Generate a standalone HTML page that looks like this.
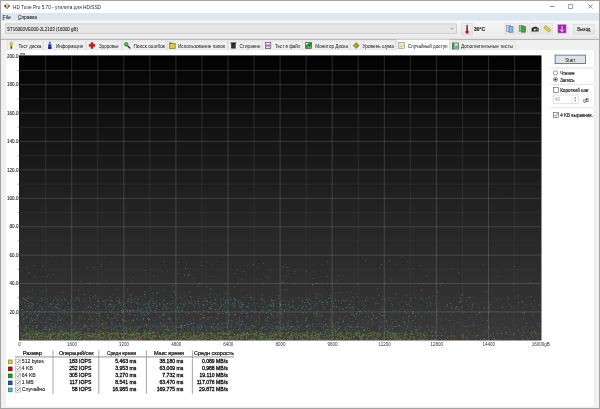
<!DOCTYPE html>
<html><head><meta charset="utf-8"><style>
html,body{margin:0;padding:0;background:#f0f0f0;}
svg{display:block;font-family:"Liberation Sans", sans-serif;will-change:transform;}
</style></head><body>
<svg width="600" height="409" viewBox="0 0 600 409">
<defs>
<linearGradient id="gchart" x1="0" y1="0" x2="0" y2="1">
<stop offset="0" stop-color="#020202"/><stop offset="0.15" stop-color="#0d0d0d"/><stop offset="0.4" stop-color="#1b1b1b"/><stop offset="0.56" stop-color="#242424"/><stop offset="0.91" stop-color="#353535"/><stop offset="1" stop-color="#3a3a3a"/></linearGradient>
<linearGradient id="gtool" x1="0" y1="0" x2="0" y2="1">
<stop offset="0" stop-color="#f7f7f7"/><stop offset="1" stop-color="#eaeaea"/></linearGradient>
<linearGradient id="gbtn" x1="0" y1="0" x2="0" y2="1">
<stop offset="0" stop-color="#efefef"/><stop offset="1" stop-color="#e4e4e4"/></linearGradient>
<linearGradient id="gminor" x1="0" y1="0" x2="0" y2="1"><stop offset="0" stop-color="#fff" stop-opacity="0.15"/><stop offset="0.3" stop-color="#fff" stop-opacity="0.085"/><stop offset="0.6" stop-color="#fff" stop-opacity="0.04"/><stop offset="1" stop-color="#fff" stop-opacity="0.015"/></linearGradient>
<linearGradient id="gmajor" x1="0" y1="0" x2="0" y2="1"><stop offset="0" stop-color="#fff" stop-opacity="0.15"/><stop offset="1" stop-color="#fff" stop-opacity="0.13"/></linearGradient>
</defs>
<rect x="0" y="0" width="600" height="409" fill="#f0f0f0" />
<rect x="0" y="0" width="600" height="13" fill="#ffffff" />
<rect x="0" y="13" width="600" height="7.7" fill="#dde7f2" />
<rect x="0" y="20.7" width="600" height="18.5" fill="url(#gtool)" />
<line x1="0" y1="39.4" x2="600" y2="39.4" stroke="#a9a9a9" stroke-width="0.9"/>
<rect x="0" y="40" width="600" height="10" fill="#f0f0f0" />
<rect x="0.5" y="0.5" width="599" height="408" fill="none" stroke="#a4a4a4" stroke-width="1" />
<path d="M7 3 L10 6 L7 9 L4 6Z" fill="#c8b898"/><path d="M6.6 3.6 L9.3 6.2 L7.2 8.3 L4.6 5.7Z" fill="#e0d0b0"/><path d="M4 6 L5.4 4.6 L6.2 6.6 L5.4 7.6Z" fill="#3a3028"/><path d="M10 6 L8.7 4.7 L8 6.6 L8.7 7.4Z" fill="#4a4038"/><path d="M7 9 L5.6 7.6 L7.3 7.5 L8.3 7.7Z" fill="#6a5a48"/>
<text x="13.00" y="8.70" font-size="5.6" textLength="88.00" lengthAdjust="spacingAndGlyphs" fill="#262626" font-weight="normal">HD Tune Pro 5.70 - утилита для HD/SSD</text>
<line x1="550" y1="6.4" x2="554.5" y2="6.4" stroke="#444" stroke-width="0.65"/>
<rect x="568.4" y="4.4" width="4.3" height="4.1" fill="none" stroke="#555" stroke-width="0.6" rx="0.5"/>
<line x1="588.4" y1="4.3" x2="592.4" y2="8.5" stroke="#444" stroke-width="0.6"/>
<line x1="592.4" y1="4.3" x2="588.4" y2="8.5" stroke="#444" stroke-width="0.6"/>
<text x="2.60" y="18.80" font-size="4.8" textLength="8.30" lengthAdjust="spacingAndGlyphs" fill="#1a1a1a" font-weight="normal" stroke="#1a1a1a" stroke-width="0.05">File</text>
<line x1="2.6" y1="19.6" x2="4.4" y2="19.6" stroke="#111" stroke-width="0.5"/>
<text x="18.00" y="18.80" font-size="4.8" textLength="19.00" lengthAdjust="spacingAndGlyphs" fill="#1a1a1a" font-weight="normal" stroke="#1a1a1a" stroke-width="0.05">Справка</text>
<line x1="18" y1="19.6" x2="20.6" y2="19.6" stroke="#111" stroke-width="0.5"/>
<rect x="5.4" y="23.9" width="451.2" height="9.4" fill="#e6e6e6" stroke="#c2c2c2" stroke-width="0.7" />
<text x="7.00" y="31.00" font-size="5.4" textLength="71.00" lengthAdjust="spacingAndGlyphs" fill="#1a1a1a" font-weight="normal" stroke="#1a1a1a" stroke-width="0.08">ST16000VE000-2L2103 (16000 gB)</text>
<polyline points="450.4,27.8 451.9,29.2 453.4,27.8" fill="none" stroke="#555" stroke-width="0.55"/>
<rect x="461.3" y="23.7" width="11" height="10.6" fill="url(#gbtn)" stroke="#d4d4d4" stroke-width="0.6" />
<rect x="466.4" y="24.8" width="1.4" height="5" rx="0.7" fill="#404040"/><path d="M466.3 28.6 h1.6 v1.9 a1.7 1.7 0 1 1 -1.6 0z" fill="#c01818"/>
<text x="474.00" y="31.00" font-size="5.3" textLength="11.00" lengthAdjust="spacingAndGlyphs" fill="#1a1a1a" font-weight="bold" stroke="#1a1a1a" stroke-width="0.14">30°C</text>
<rect x="504.3" y="23.7" width="10.7" height="10.2" fill="url(#gbtn)" stroke="#d8d8d8" stroke-width="0.5" />
<rect x="517" y="23.7" width="10.3" height="10.2" fill="url(#gbtn)" stroke="#d8d8d8" stroke-width="0.5" />
<rect x="529.3" y="23.7" width="11.4" height="10.2" fill="url(#gbtn)" stroke="#d8d8d8" stroke-width="0.5" />
<rect x="541.9" y="23.7" width="10.7" height="10.2" fill="url(#gbtn)" stroke="#d8d8d8" stroke-width="0.5" />
<rect x="506.6" y="25.6" width="4" height="5.6" fill="#b8d4ea" stroke="#4a6a98" stroke-width="0.45"/><rect x="509" y="26.6" width="4" height="5.6" fill="#8ab4dc" stroke="#3a5a88" stroke-width="0.45"/>
<rect x="519.2" y="25.6" width="4" height="5.6" fill="#90c890" stroke="#3a6a3a" stroke-width="0.45"/><rect x="521.6" y="26.6" width="4" height="5.6" fill="#40a040" stroke="#2a5a2a" stroke-width="0.45"/>
<path d="M531.6 27.8 h1.5 l0.8 -1 h2.6 l0.8 1 h1.3 v3.6 h-7z" fill="#2a2a2a"/><circle cx="534.8" cy="29.6" r="1.1" fill="#e8e8e8"/><rect x="536.6" y="28.4" width="1.6" height="2.4" fill="#40a040"/>
<g transform="translate(547.3,28.8) rotate(38)"><rect x="-3.6" y="-1.7" width="7.2" height="3.4" rx="1.2" fill="#d8d040" stroke="#8a8010" stroke-width="0.4"/></g>
<rect x="557.8" y="24.3" width="8.4" height="8.8" fill="#9c20a8" stroke="#d8a8e0" stroke-width="0.6" />
<path d="M562 25.8 V31.4 M559.9 29.4 L562 31.6 L564.1 29.4" fill="none" stroke="#fff" stroke-width="0.85"/>
<rect x="573.2" y="24.3" width="21.5" height="9.7" fill="url(#gbtn)" stroke="#d4d4d4" stroke-width="0.5" />
<text x="577.30" y="30.90" font-size="4.9" textLength="13.00" lengthAdjust="spacingAndGlyphs" fill="#1a1a1a" font-weight="normal" stroke="#1a1a1a" stroke-width="0.14">Выход</text>
<rect x="7.3" y="41" width="35.4" height="9" fill="#f0f0f0" stroke="#d9d9d9" stroke-width="0.6" />
<text x="18.40" y="47.60" font-size="5.1" textLength="22.90" lengthAdjust="spacingAndGlyphs" fill="#2a2a2a" font-weight="normal" stroke="#2a2a2a" stroke-width="0.03">Тест диска</text>
<rect x="43.3" y="41" width="42.4" height="9" fill="#f0f0f0" stroke="#d9d9d9" stroke-width="0.6" />
<text x="56.00" y="47.60" font-size="5.1" textLength="27.00" lengthAdjust="spacingAndGlyphs" fill="#2a2a2a" font-weight="normal" stroke="#2a2a2a" stroke-width="0.03">Информация</text>
<rect x="86.3" y="41" width="35.4" height="9" fill="#f0f0f0" stroke="#d9d9d9" stroke-width="0.6" />
<text x="99.00" y="47.60" font-size="5.1" textLength="19.80" lengthAdjust="spacingAndGlyphs" fill="#2a2a2a" font-weight="normal" stroke="#2a2a2a" stroke-width="0.03">Здоровье</text>
<rect x="122.3" y="41" width="44.4" height="9" fill="#f0f0f0" stroke="#d9d9d9" stroke-width="0.6" />
<text x="133.40" y="47.60" font-size="5.1" textLength="31.60" lengthAdjust="spacingAndGlyphs" fill="#2a2a2a" font-weight="normal" stroke="#2a2a2a" stroke-width="0.03">Поиск ошибок</text>
<rect x="167.3" y="41" width="60.4" height="9" fill="#f0f0f0" stroke="#d9d9d9" stroke-width="0.6" />
<text x="178.00" y="47.60" font-size="5.1" textLength="47.00" lengthAdjust="spacingAndGlyphs" fill="#2a2a2a" font-weight="normal" stroke="#2a2a2a" stroke-width="0.03">Использование папок</text>
<rect x="228.3" y="41" width="33.9" height="9" fill="#f0f0f0" stroke="#d9d9d9" stroke-width="0.6" />
<text x="239.50" y="47.60" font-size="5.1" textLength="21.00" lengthAdjust="spacingAndGlyphs" fill="#2a2a2a" font-weight="normal" stroke="#2a2a2a" stroke-width="0.03">Стирание</text>
<rect x="262.8" y="41" width="39.4" height="9" fill="#f0f0f0" stroke="#d9d9d9" stroke-width="0.6" />
<text x="275.00" y="47.60" font-size="5.1" textLength="25.50" lengthAdjust="spacingAndGlyphs" fill="#2a2a2a" font-weight="normal" stroke="#2a2a2a" stroke-width="0.03">Тест в файл</text>
<rect x="302.8" y="41" width="46.9" height="9" fill="#f0f0f0" stroke="#d9d9d9" stroke-width="0.6" />
<text x="315.30" y="47.60" font-size="5.1" textLength="32.70" lengthAdjust="spacingAndGlyphs" fill="#2a2a2a" font-weight="normal" stroke="#2a2a2a" stroke-width="0.03">Монитор Диска</text>
<rect x="350.3" y="41" width="45.4" height="9" fill="#f0f0f0" stroke="#d9d9d9" stroke-width="0.6" />
<text x="362.50" y="47.60" font-size="5.1" textLength="31.50" lengthAdjust="spacingAndGlyphs" fill="#2a2a2a" font-weight="normal" stroke="#2a2a2a" stroke-width="0.03">Уровень шума</text>
<rect x="396.8" y="39.6" width="52.89999999999998" height="11" fill="#ffffff" stroke="#d0d0d0" stroke-width="0.6" />
<text x="407.80" y="47.60" font-size="5.1" textLength="39.60" lengthAdjust="spacingAndGlyphs" fill="#2a2a2a" font-weight="normal" stroke="#2a2a2a" stroke-width="0.03">Случайный доступ</text>
<rect x="450.3" y="41" width="64.9" height="9" fill="#f0f0f0" stroke="#d9d9d9" stroke-width="0.6" />
<text x="461.00" y="47.60" font-size="5.1" textLength="52.00" lengthAdjust="spacingAndGlyphs" fill="#2a2a2a" font-weight="normal" stroke="#2a2a2a" stroke-width="0.03">Дополнительные тесты</text>
<ellipse cx="11.3" cy="44.2" rx="1.35" ry="2.1" fill="#d8d028" stroke="#7a7010" stroke-width="0.3"/><rect x="10.5" y="46.2" width="1.6" height="2.5" fill="#4a4a30"/><circle cx="49.8" cy="42.8" r="1.05" fill="#3858c0"/><path d="M48.2 44.2 h3.2 v4.7 h-3.2z" fill="#2440a8"/><rect x="48.2" y="46.8" width="3.2" height="2.1" fill="#182a78"/><path d="M90.9 42.5 h2.2 v1.8 h1.9 v2.2 h-1.9 v1.9 h-2.2 v-1.9 h-1.9 v-2.2 h1.9z" fill="#d01818" stroke="#801010" stroke-width="0.3"/><path d="M127.4 45.6 L129.9 48" stroke="#14146a" stroke-width="1.3" stroke-linecap="round"/><circle cx="126.2" cy="44.3" r="1.9" fill="#48c048" stroke="#1a5a1a" stroke-width="0.5"/><path d="M169.3 42.6 h2.2 l0.5 0.6 h3.5 v5.6 h-6.2z" fill="#6a5a20"/><rect x="169.9" y="43.8" width="5" height="4.4" fill="#e0c838"/><path d="M230.6 42.4 h5.6 v1 h-0.6 v5.1 h-4.4 v-5.1 h-0.6z" fill="#1a1a1a"/><path d="M232.2 44 v4 M233.4 44 v4 M234.6 44 v4" stroke="#707070" stroke-width="0.3"/><rect x="265.3" y="42.6" width="5.5" height="5.8" fill="#f0e8f4" stroke="#6a1a80" stroke-width="0.6"/><path d="M266.9 44 v3.2 M269.2 44 v3.2 M266.9 45.6 h2.3" stroke="#8a2aa8" stroke-width="0.7"/><rect x="305.5" y="42.6" width="6.1" height="5.8" fill="#208a30" stroke="#204020" stroke-width="0.5"/><path d="M305.8 42.9 h3 l-3 2.5z" fill="#e8f0e8"/><path d="M306 48 l2 -2.2 l1.5 1 l2 -1.6 v2.8z" fill="#40c040"/><path d="M353.2 45.5 l3 -3 l3 3 l-3 3z" fill="#a89020" stroke="#4a4010" stroke-width="0.4"/><path d="M355 45.5 l1.2 -1.3 v2.6z" fill="#f0e060"/><rect x="398.7" y="42.4" width="5.8" height="6" fill="#f0e8b8" stroke="#7a7460" stroke-width="0.5"/><path d="M399.6 47.6 l1.4 -1.6 l1 0.8 l1.5 -2.2" fill="none" stroke="#a09040" stroke-width="0.35"/><rect x="452.4" y="43" width="6" height="6" fill="#e8e8e8" stroke="#1a5a2a" stroke-width="0.7"/><rect x="452.5" y="43.1" width="2" height="5.8" fill="#2a9a3a"/><rect x="455.2" y="45.5" width="2.6" height="2.8" fill="#a08a9a"/>
<rect x="6" y="50" width="588" height="356.5" fill="#ffffff" />
<line x1="594.3" y1="50" x2="594.3" y2="406.5" stroke="#e2e2e2" stroke-width="0.6"/>
<rect x="19" y="55.4" width="522.5" height="285.1" fill="url(#gchart)" />
<rect x="45.15" y="56.3" width="1" height="284.0" fill="url(#gminor)" />
<rect x="71.20" y="56.3" width="1" height="284.0" fill="url(#gmajor)" />
<rect x="97.25" y="56.3" width="1" height="284.0" fill="url(#gminor)" />
<rect x="123.30" y="56.3" width="1" height="284.0" fill="url(#gmajor)" />
<rect x="149.35" y="56.3" width="1" height="284.0" fill="url(#gminor)" />
<rect x="175.40" y="56.3" width="1" height="284.0" fill="url(#gmajor)" />
<rect x="201.45" y="56.3" width="1" height="284.0" fill="url(#gminor)" />
<rect x="227.50" y="56.3" width="1" height="284.0" fill="url(#gmajor)" />
<rect x="253.55" y="56.3" width="1" height="284.0" fill="url(#gminor)" />
<rect x="279.60" y="56.3" width="1" height="284.0" fill="url(#gmajor)" />
<rect x="305.65" y="56.3" width="1" height="284.0" fill="url(#gminor)" />
<rect x="331.70" y="56.3" width="1" height="284.0" fill="url(#gmajor)" />
<rect x="357.75" y="56.3" width="1" height="284.0" fill="url(#gminor)" />
<rect x="383.80" y="56.3" width="1" height="284.0" fill="url(#gmajor)" />
<rect x="409.85" y="56.3" width="1" height="284.0" fill="url(#gminor)" />
<rect x="435.90" y="56.3" width="1" height="284.0" fill="url(#gmajor)" />
<rect x="461.95" y="56.3" width="1" height="284.0" fill="url(#gminor)" />
<rect x="488.00" y="56.3" width="1" height="284.0" fill="url(#gmajor)" />
<rect x="514.05" y="56.3" width="1" height="284.0" fill="url(#gminor)" />
<rect x="19.6" y="70.00" width="521.0" height="1" fill="#fff" fill-opacity="0.135"/>
<rect x="19.6" y="84.20" width="521.0" height="1" fill="#fff" fill-opacity="0.149"/>
<rect x="19.6" y="98.40" width="521.0" height="1" fill="#fff" fill-opacity="0.108"/>
<rect x="19.6" y="112.60" width="521.0" height="1" fill="#fff" fill-opacity="0.148"/>
<rect x="19.6" y="126.80" width="521.0" height="1" fill="#fff" fill-opacity="0.085"/>
<rect x="19.6" y="141.00" width="521.0" height="1" fill="#fff" fill-opacity="0.147"/>
<rect x="19.6" y="155.20" width="521.0" height="1" fill="#fff" fill-opacity="0.065"/>
<rect x="19.6" y="169.40" width="521.0" height="1" fill="#fff" fill-opacity="0.146"/>
<rect x="19.6" y="183.60" width="521.0" height="1" fill="#fff" fill-opacity="0.049"/>
<rect x="19.6" y="197.80" width="521.0" height="1" fill="#fff" fill-opacity="0.145"/>
<rect x="19.6" y="212.00" width="521.0" height="1" fill="#fff" fill-opacity="0.037"/>
<rect x="19.6" y="226.20" width="521.0" height="1" fill="#fff" fill-opacity="0.144"/>
<rect x="19.6" y="240.40" width="521.0" height="1" fill="#fff" fill-opacity="0.027"/>
<rect x="19.6" y="254.60" width="521.0" height="1" fill="#fff" fill-opacity="0.143"/>
<rect x="19.6" y="268.80" width="521.0" height="1" fill="#fff" fill-opacity="0.021"/>
<rect x="19.6" y="283.00" width="521.0" height="1" fill="#fff" fill-opacity="0.142"/>
<rect x="19.6" y="297.20" width="521.0" height="1" fill="#fff" fill-opacity="0.017"/>
<rect x="19.6" y="311.40" width="521.0" height="1" fill="#fff" fill-opacity="0.141"/>
<rect x="19.6" y="325.60" width="521.0" height="1" fill="#fff" fill-opacity="0.015"/>
<path d="M175.4 294.5h0.8v0.8h-0.8zM314.4 304.4h0.8v0.8h-0.8zM110.8 311.8h0.8v0.8h-0.8zM518.3 302.1h0.8v0.8h-0.8zM282.1 282.1h0.8v0.8h-0.8zM32.3 303.2h0.8v0.8h-0.8zM407.3 261.2h0.8v0.8h-0.8zM420.9 265.2h0.8v0.8h-0.8zM235.7 300.3h0.8v0.8h-0.8zM292.4 305.5h0.8v0.8h-0.8zM439.8 309.2h0.8v0.8h-0.8zM116.7 289.3h0.8v0.8h-0.8zM105.5 303.5h0.8v0.8h-0.8zM98.2 305.5h0.8v0.8h-0.8zM45.7 302.3h0.8v0.8h-0.8zM211.3 300.9h0.8v0.8h-0.8zM345.7 307.1h0.8v0.8h-0.8zM238.9 304.9h0.8v0.8h-0.8zM309.5 304.1h0.8v0.8h-0.8zM523.1 313.8h0.8v0.8h-0.8zM290.3 306.8h0.8v0.8h-0.8zM278.1 298.3h0.8v0.8h-0.8zM282.8 304.3h0.8v0.8h-0.8zM146.6 307.5h0.8v0.8h-0.8zM112.7 307.9h0.8v0.8h-0.8zM149.5 300.1h0.8v0.8h-0.8zM259.6 306.1h0.8v0.8h-0.8zM125.1 303.2h0.8v0.8h-0.8zM172.1 285.1h0.8v0.8h-0.8zM155.3 310.0h0.8v0.8h-0.8zM288.8 314.0h0.8v0.8h-0.8zM388.6 300.1h0.8v0.8h-0.8zM376.8 302.8h0.8v0.8h-0.8zM269.9 305.9h0.8v0.8h-0.8zM199.5 295.9h0.8v0.8h-0.8zM36.0 314.4h0.8v0.8h-0.8zM226.5 314.5h0.8v0.8h-0.8zM460.2 297.7h0.8v0.8h-0.8zM427.9 310.4h0.8v0.8h-0.8zM140.9 296.0h0.8v0.8h-0.8zM79.2 300.0h0.8v0.8h-0.8zM41.3 307.8h0.8v0.8h-0.8zM127.4 300.9h0.8v0.8h-0.8zM465.4 300.5h0.8v0.8h-0.8zM305.8 305.8h0.8v0.8h-0.8zM98.9 314.9h0.8v0.8h-0.8zM426.6 306.6h0.8v0.8h-0.8zM29.0 296.8h0.8v0.8h-0.8zM183.0 303.8h0.8v0.8h-0.8zM77.2 306.9h0.8v0.8h-0.8zM110.6 305.9h0.8v0.8h-0.8zM279.7 304.6h0.8v0.8h-0.8zM135.6 302.6h0.8v0.8h-0.8zM352.8 308.7h0.8v0.8h-0.8zM461.7 307.3h0.8v0.8h-0.8zM311.6 303.0h0.8v0.8h-0.8zM142.7 314.6h0.8v0.8h-0.8zM364.9 311.1h0.8v0.8h-0.8zM76.5 298.8h0.8v0.8h-0.8zM211.4 263.7h0.8v0.8h-0.8zM149.7 307.5h0.8v0.8h-0.8zM109.1 303.8h0.8v0.8h-0.8zM316.7 283.1h0.8v0.8h-0.8zM394.8 309.8h0.8v0.8h-0.8zM380.9 264.1h0.8v0.8h-0.8zM34.7 310.1h0.8v0.8h-0.8zM68.1 309.1h0.8v0.8h-0.8zM311.1 306.7h0.8v0.8h-0.8zM190.9 302.7h0.8v0.8h-0.8zM179.5 314.8h0.8v0.8h-0.8zM228.9 311.8h0.8v0.8h-0.8zM299.4 299.8h0.8v0.8h-0.8zM496.9 271.4h0.8v0.8h-0.8zM451.7 307.8h0.8v0.8h-0.8zM234.7 313.9h0.8v0.8h-0.8zM404.6 311.4h0.8v0.8h-0.8zM410.7 299.9h0.8v0.8h-0.8zM182.3 300.5h0.8v0.8h-0.8zM40.5 297.9h0.8v0.8h-0.8zM224.0 310.2h0.8v0.8h-0.8zM214.6 303.7h0.8v0.8h-0.8zM88.9 296.9h0.8v0.8h-0.8zM412.7 311.1h0.8v0.8h-0.8zM284.4 289.0h0.8v0.8h-0.8zM186.3 314.8h0.8v0.8h-0.8zM44.2 311.7h0.8v0.8h-0.8zM85.2 304.8h0.8v0.8h-0.8zM20.7 315.0h0.8v0.8h-0.8zM181.6 309.6h0.8v0.8h-0.8zM83.1 311.5h0.8v0.8h-0.8zM280.3 304.9h0.8v0.8h-0.8zM159.5 302.5h0.8v0.8h-0.8zM432.4 295.6h0.8v0.8h-0.8zM92.6 267.4h0.8v0.8h-0.8zM288.8 306.2h0.8v0.8h-0.8zM31.8 305.7h0.8v0.8h-0.8zM130.3 300.4h0.8v0.8h-0.8zM56.9 307.2h0.8v0.8h-0.8zM88.7 312.0h0.8v0.8h-0.8zM487.8 307.4h0.8v0.8h-0.8zM507.3 312.3h0.8v0.8h-0.8zM289.2 307.7h0.8v0.8h-0.8zM108.4 304.3h0.8v0.8h-0.8zM253.7 302.6h0.8v0.8h-0.8zM351.4 300.5h0.8v0.8h-0.8zM365.2 300.0h0.8v0.8h-0.8zM214.3 308.9h0.8v0.8h-0.8zM339.2 307.5h0.8v0.8h-0.8zM325.8 300.0h0.8v0.8h-0.8zM60.2 301.2h0.8v0.8h-0.8zM128.6 301.2h0.8v0.8h-0.8zM450.6 314.6h0.8v0.8h-0.8zM156.0 293.3h0.8v0.8h-0.8zM457.7 309.2h0.8v0.8h-0.8zM33.1 303.8h0.8v0.8h-0.8zM250.8 297.1h0.8v0.8h-0.8zM264.3 302.3h0.8v0.8h-0.8zM292.3 300.9h0.8v0.8h-0.8zM205.8 299.8h0.8v0.8h-0.8zM27.3 298.3h0.8v0.8h-0.8zM336.5 279.7h0.8v0.8h-0.8zM188.3 300.5h0.8v0.8h-0.8zM144.9 301.6h0.8v0.8h-0.8zM487.7 301.1h0.8v0.8h-0.8zM26.8 301.3h0.8v0.8h-0.8zM161.9 307.9h0.8v0.8h-0.8zM26.1 300.2h0.8v0.8h-0.8zM246.0 313.1h0.8v0.8h-0.8zM106.1 307.4h0.8v0.8h-0.8zM34.4 276.4h0.8v0.8h-0.8zM304.4 302.1h0.8v0.8h-0.8zM61.6 310.2h0.8v0.8h-0.8zM66.4 306.0h0.8v0.8h-0.8zM427.3 312.5h0.8v0.8h-0.8zM380.1 267.9h0.8v0.8h-0.8zM318.8 301.1h0.8v0.8h-0.8zM146.1 310.0h0.8v0.8h-0.8zM70.6 299.3h0.8v0.8h-0.8zM375.1 317.7h0.8v0.8h-0.8zM366.5 296.9h0.8v0.8h-0.8zM346.5 306.8h0.8v0.8h-0.8zM356.4 312.9h0.8v0.8h-0.8zM197.6 285.6h0.8v0.8h-0.8zM21.3 321.3h0.8v0.8h-0.8zM90.7 303.8h0.8v0.8h-0.8zM187.6 274.6h0.8v0.8h-0.8zM83.9 294.1h0.8v0.8h-0.8zM192.8 319.3h0.8v0.8h-0.8zM220.6 298.9h0.8v0.8h-0.8zM309.3 299.1h0.8v0.8h-0.8zM163.1 260.9h0.8v0.8h-0.8zM283.3 299.7h0.8v0.8h-0.8zM273.4 305.1h0.8v0.8h-0.8zM33.7 265.3h0.8v0.8h-0.8zM146.4 309.6h0.8v0.8h-0.8zM36.8 302.9h0.8v0.8h-0.8zM312.7 278.2h0.8v0.8h-0.8zM188.9 323.9h0.8v0.8h-0.8zM381.6 308.7h0.8v0.8h-0.8zM511.2 306.4h0.8v0.8h-0.8zM105.6 280.0h0.8v0.8h-0.8zM206.5 261.4h0.8v0.8h-0.8zM243.6 271.0h0.8v0.8h-0.8zM353.3 298.2h0.8v0.8h-0.8zM163.1 306.8h0.8v0.8h-0.8zM153.0 305.2h0.8v0.8h-0.8zM24.8 302.4h0.8v0.8h-0.8zM67.8 303.2h0.8v0.8h-0.8zM206.6 300.6h0.8v0.8h-0.8zM315.0 293.2h0.8v0.8h-0.8zM105.1 300.5h0.8v0.8h-0.8zM284.2 310.7h0.8v0.8h-0.8zM332.6 306.1h0.8v0.8h-0.8zM371.4 313.3h0.8v0.8h-0.8zM123.2 309.8h0.8v0.8h-0.8zM159.1 303.8h0.8v0.8h-0.8zM412.6 313.1h0.8v0.8h-0.8zM56.9 300.8h0.8v0.8h-0.8zM73.4 308.8h0.8v0.8h-0.8zM320.9 302.3h0.8v0.8h-0.8zM22.0 309.3h0.8v0.8h-0.8zM469.5 297.4h0.8v0.8h-0.8zM24.1 299.1h0.8v0.8h-0.8zM401.4 301.2h0.8v0.8h-0.8zM144.2 294.1h0.8v0.8h-0.8zM281.1 309.5h0.8v0.8h-0.8zM459.6 301.6h0.8v0.8h-0.8zM407.9 302.8h0.8v0.8h-0.8zM21.0 303.5h0.8v0.8h-0.8zM360.5 311.0h0.8v0.8h-0.8zM219.1 312.7h0.8v0.8h-0.8zM446.7 305.6h0.8v0.8h-0.8zM250.9 298.7h0.8v0.8h-0.8zM152.2 298.5h0.8v0.8h-0.8zM530.2 281.9h0.8v0.8h-0.8zM462.5 312.9h0.8v0.8h-0.8zM156.0 305.5h0.8v0.8h-0.8zM430.0 302.1h0.8v0.8h-0.8zM194.2 307.1h0.8v0.8h-0.8zM102.8 300.9h0.8v0.8h-0.8zM350.1 307.8h0.8v0.8h-0.8zM289.4 301.8h0.8v0.8h-0.8zM103.3 300.6h0.8v0.8h-0.8zM174.7 309.8h0.8v0.8h-0.8zM58.8 319.5h0.8v0.8h-0.8zM86.7 267.4h0.8v0.8h-0.8zM287.7 270.0h0.8v0.8h-0.8zM188.1 275.2h0.8v0.8h-0.8zM385.1 299.4h0.8v0.8h-0.8zM87.1 307.3h0.8v0.8h-0.8zM230.8 299.2h0.8v0.8h-0.8zM512.8 307.8h0.8v0.8h-0.8zM247.5 312.6h0.8v0.8h-0.8zM353.0 304.4h0.8v0.8h-0.8zM455.8 306.7h0.8v0.8h-0.8zM303.1 305.9h0.8v0.8h-0.8zM55.3 297.4h0.8v0.8h-0.8zM280.2 302.4h0.8v0.8h-0.8zM52.7 314.7h0.8v0.8h-0.8zM157.3 292.1h0.8v0.8h-0.8zM359.4 301.4h0.8v0.8h-0.8zM168.8 318.1h0.8v0.8h-0.8zM95.4 298.0h0.8v0.8h-0.8zM411.2 306.1h0.8v0.8h-0.8zM31.9 289.4h0.8v0.8h-0.8zM163.0 300.1h0.8v0.8h-0.8zM279.7 305.5h0.8v0.8h-0.8zM109.9 300.2h0.8v0.8h-0.8zM452.0 268.4h0.8v0.8h-0.8zM400.9 308.4h0.8v0.8h-0.8zM338.3 275.4h0.8v0.8h-0.8zM26.6 311.3h0.8v0.8h-0.8zM118.9 298.5h0.8v0.8h-0.8zM362.1 301.4h0.8v0.8h-0.8zM129.8 310.6h0.8v0.8h-0.8zM237.1 269.5h0.8v0.8h-0.8zM49.5 314.2h0.8v0.8h-0.8zM116.7 300.2h0.8v0.8h-0.8zM472.2 304.6h0.8v0.8h-0.8zM406.2 295.5h0.8v0.8h-0.8zM286.5 267.1h0.8v0.8h-0.8zM224.7 307.2h0.8v0.8h-0.8zM276.4 302.7h0.8v0.8h-0.8zM62.7 291.9h0.8v0.8h-0.8zM96.6 284.3h0.8v0.8h-0.8zM311.5 309.2h0.8v0.8h-0.8zM302.5 312.1h0.8v0.8h-0.8zM76.2 297.9h0.8v0.8h-0.8zM357.7 309.0h0.8v0.8h-0.8zM220.0 302.7h0.8v0.8h-0.8zM177.9 262.2h0.8v0.8h-0.8zM144.4 311.3h0.8v0.8h-0.8zM236.7 318.4h0.8v0.8h-0.8zM239.1 318.5h0.8v0.8h-0.8zM140.5 313.3h0.8v0.8h-0.8zM239.2 317.2h0.8v0.8h-0.8zM55.5 261.2h0.8v0.8h-0.8zM206.4 286.4h0.8v0.8h-0.8zM180.9 310.0h0.8v0.8h-0.8zM186.3 260.5h0.8v0.8h-0.8zM120.4 302.5h0.8v0.8h-0.8zM42.6 317.3h0.8v0.8h-0.8zM166.6 307.6h0.8v0.8h-0.8zM282.6 281.4h0.8v0.8h-0.8zM152.0 302.7h0.8v0.8h-0.8zM313.5 270.8h0.8v0.8h-0.8zM431.5 312.7h0.8v0.8h-0.8zM92.6 296.2h0.8v0.8h-0.8zM436.6 290.5h0.8v0.8h-0.8zM166.3 308.6h0.8v0.8h-0.8zM211.5 306.1h0.8v0.8h-0.8zM287.9 310.3h0.8v0.8h-0.8zM191.8 302.8h0.8v0.8h-0.8zM392.8 309.6h0.8v0.8h-0.8zM279.9 303.7h0.8v0.8h-0.8zM253.9 305.5h0.8v0.8h-0.8zM223.3 304.4h0.8v0.8h-0.8zM293.8 283.8h0.8v0.8h-0.8zM207.6 311.4h0.8v0.8h-0.8zM167.4 303.1h0.8v0.8h-0.8zM148.6 306.0h0.8v0.8h-0.8zM56.9 299.0h0.8v0.8h-0.8zM181.6 306.7h0.8v0.8h-0.8zM156.0 300.3h0.8v0.8h-0.8zM63.8 298.7h0.8v0.8h-0.8zM193.4 277.7h0.8v0.8h-0.8zM58.6 304.5h0.8v0.8h-0.8zM349.0 306.9h0.8v0.8h-0.8zM170.0 302.7h0.8v0.8h-0.8zM270.5 310.2h0.8v0.8h-0.8zM97.3 301.3h0.8v0.8h-0.8zM78.4 289.6h0.8v0.8h-0.8zM80.5 280.9h0.8v0.8h-0.8zM241.4 311.4h0.8v0.8h-0.8zM318.7 323.0h0.8v0.8h-0.8zM489.7 304.0h0.8v0.8h-0.8zM29.6 307.6h0.8v0.8h-0.8zM177.3 306.7h0.8v0.8h-0.8zM39.2 305.7h0.8v0.8h-0.8zM89.4 305.6h0.8v0.8h-0.8zM145.0 307.1h0.8v0.8h-0.8zM301.8 306.5h0.8v0.8h-0.8zM184.9 303.6h0.8v0.8h-0.8zM113.8 312.9h0.8v0.8h-0.8zM262.3 309.5h0.8v0.8h-0.8zM159.4 317.1h0.8v0.8h-0.8zM162.6 302.4h0.8v0.8h-0.8zM233.9 286.6h0.8v0.8h-0.8zM316.9 310.3h0.8v0.8h-0.8zM130.5 295.6h0.8v0.8h-0.8zM163.3 304.5h0.8v0.8h-0.8zM272.4 300.2h0.8v0.8h-0.8zM305.9 270.8h0.8v0.8h-0.8zM121.7 302.7h0.8v0.8h-0.8zM70.5 308.8h0.8v0.8h-0.8zM302.5 301.1h0.8v0.8h-0.8zM381.6 306.4h0.8v0.8h-0.8zM44.4 299.5h0.8v0.8h-0.8zM361.4 312.9h0.8v0.8h-0.8zM356.4 293.2h0.8v0.8h-0.8zM405.1 301.6h0.8v0.8h-0.8zM471.2 309.0h0.8v0.8h-0.8zM458.9 309.7h0.8v0.8h-0.8zM273.2 308.6h0.8v0.8h-0.8zM84.4 308.2h0.8v0.8h-0.8zM326.5 304.3h0.8v0.8h-0.8zM323.7 307.6h0.8v0.8h-0.8zM189.2 291.8h0.8v0.8h-0.8zM52.7 307.7h0.8v0.8h-0.8zM459.9 298.3h0.8v0.8h-0.8zM58.2 309.3h0.8v0.8h-0.8zM315.5 297.4h0.8v0.8h-0.8zM30.5 306.1h0.8v0.8h-0.8zM227.9 300.8h0.8v0.8h-0.8zM176.5 297.8h0.8v0.8h-0.8zM138.3 299.2h0.8v0.8h-0.8zM426.5 275.5h0.8v0.8h-0.8zM313.4 307.5h0.8v0.8h-0.8zM293.3 300.9h0.8v0.8h-0.8zM183.5 317.3h0.8v0.8h-0.8zM378.5 294.9h0.8v0.8h-0.8zM301.1 307.8h0.8v0.8h-0.8zM178.1 310.7h0.8v0.8h-0.8zM418.2 312.9h0.8v0.8h-0.8zM164.2 299.4h0.8v0.8h-0.8zM308.6 308.9h0.8v0.8h-0.8zM261.9 294.6h0.8v0.8h-0.8zM203.0 304.9h0.8v0.8h-0.8zM37.7 300.4h0.8v0.8h-0.8zM426.4 303.2h0.8v0.8h-0.8zM147.0 303.5h0.8v0.8h-0.8zM248.2 306.6h0.8v0.8h-0.8zM499.3 276.0h0.8v0.8h-0.8zM267.5 309.4h0.8v0.8h-0.8zM120.2 315.2h0.8v0.8h-0.8zM277.6 295.2h0.8v0.8h-0.8zM152.3 294.5h0.8v0.8h-0.8zM190.8 296.5h0.8v0.8h-0.8zM172.5 303.2h0.8v0.8h-0.8zM407.9 268.2h0.8v0.8h-0.8zM393.5 298.3h0.8v0.8h-0.8zM295.4 308.0h0.8v0.8h-0.8zM271.5 303.7h0.8v0.8h-0.8zM210.3 288.6h0.8v0.8h-0.8zM392.1 304.5h0.8v0.8h-0.8zM282.3 313.7h0.8v0.8h-0.8zM532.5 309.2h0.8v0.8h-0.8zM362.5 308.7h0.8v0.8h-0.8zM428.8 295.8h0.8v0.8h-0.8zM364.8 299.3h0.8v0.8h-0.8zM149.2 301.4h0.8v0.8h-0.8zM352.5 296.0h0.8v0.8h-0.8zM192.8 305.2h0.8v0.8h-0.8zM225.8 300.1h0.8v0.8h-0.8zM256.6 303.0h0.8v0.8h-0.8zM255.8 279.0h0.8v0.8h-0.8zM282.4 317.2h0.8v0.8h-0.8zM261.3 298.5h0.8v0.8h-0.8zM317.5 306.3h0.8v0.8h-0.8zM121.7 309.4h0.8v0.8h-0.8zM238.8 311.0h0.8v0.8h-0.8zM264.6 307.8h0.8v0.8h-0.8zM132.8 310.0h0.8v0.8h-0.8zM138.5 309.6h0.8v0.8h-0.8zM130.7 310.3h0.8v0.8h-0.8zM312.0 284.7h0.8v0.8h-0.8zM533.8 306.4h0.8v0.8h-0.8zM131.2 302.1h0.8v0.8h-0.8zM144.6 315.2h0.8v0.8h-0.8zM276.7 314.4h0.8v0.8h-0.8zM265.9 275.7h0.8v0.8h-0.8zM364.0 307.2h0.8v0.8h-0.8zM214.4 299.0h0.8v0.8h-0.8zM530.7 295.8h0.8v0.8h-0.8zM483.2 264.0h0.8v0.8h-0.8zM122.8 313.3h0.8v0.8h-0.8zM234.1 298.0h0.8v0.8h-0.8zM24.4 302.5h0.8v0.8h-0.8zM148.2 312.3h0.8v0.8h-0.8zM377.3 303.0h0.8v0.8h-0.8zM46.9 298.6h0.8v0.8h-0.8zM172.0 300.8h0.8v0.8h-0.8zM179.8 297.7h0.8v0.8h-0.8zM52.9 312.0h0.8v0.8h-0.8zM47.8 305.7h0.8v0.8h-0.8zM41.9 297.8h0.8v0.8h-0.8zM36.0 314.6h0.8v0.8h-0.8zM335.8 306.1h0.8v0.8h-0.8zM365.2 304.9h0.8v0.8h-0.8zM209.2 293.7h0.8v0.8h-0.8zM479.3 313.3h0.8v0.8h-0.8zM356.8 283.7h0.8v0.8h-0.8zM55.6 306.7h0.8v0.8h-0.8zM138.3 307.6h0.8v0.8h-0.8zM234.2 299.5h0.8v0.8h-0.8zM111.4 304.8h0.8v0.8h-0.8zM395.6 264.4h0.8v0.8h-0.8zM379.1 313.1h0.8v0.8h-0.8zM34.2 312.8h0.8v0.8h-0.8zM22.6 298.5h0.8v0.8h-0.8zM147.8 314.2h0.8v0.8h-0.8zM52.6 303.1h0.8v0.8h-0.8zM234.0 303.5h0.8v0.8h-0.8zM516.8 306.5h0.8v0.8h-0.8zM168.7 313.3h0.8v0.8h-0.8zM485.6 291.3h0.8v0.8h-0.8zM136.6 302.4h0.8v0.8h-0.8zM176.9 307.1h0.8v0.8h-0.8zM362.4 304.7h0.8v0.8h-0.8zM71.1 295.7h0.8v0.8h-0.8zM473.7 303.6h0.8v0.8h-0.8zM340.1 292.2h0.8v0.8h-0.8zM85.5 301.6h0.8v0.8h-0.8zM51.5 304.3h0.8v0.8h-0.8zM263.1 306.9h0.8v0.8h-0.8zM302.4 307.9h0.8v0.8h-0.8zM284.8 304.0h0.8v0.8h-0.8zM55.1 305.5h0.8v0.8h-0.8zM458.0 272.6h0.8v0.8h-0.8zM63.4 309.9h0.8v0.8h-0.8zM233.5 305.3h0.8v0.8h-0.8zM467.7 296.9h0.8v0.8h-0.8zM490.1 310.5h0.8v0.8h-0.8zM487.9 312.5h0.8v0.8h-0.8zM37.7 308.2h0.8v0.8h-0.8zM166.6 303.5h0.8v0.8h-0.8zM329.8 295.3h0.8v0.8h-0.8zM171.6 297.1h0.8v0.8h-0.8zM420.6 297.9h0.8v0.8h-0.8zM308.6 308.3h0.8v0.8h-0.8zM279.3 309.9h0.8v0.8h-0.8zM90.2 301.2h0.8v0.8h-0.8zM286.4 305.8h0.8v0.8h-0.8zM253.3 264.4h0.8v0.8h-0.8zM305.8 307.0h0.8v0.8h-0.8zM113.8 305.9h0.8v0.8h-0.8zM388.7 260.6h0.8v0.8h-0.8zM331.0 301.1h0.8v0.8h-0.8zM502.0 307.1h0.8v0.8h-0.8zM294.4 271.2h0.8v0.8h-0.8zM42.5 265.6h0.8v0.8h-0.8zM222.5 313.0h0.8v0.8h-0.8zM126.9 300.9h0.8v0.8h-0.8zM180.7 307.4h0.8v0.8h-0.8zM280.3 314.7h0.8v0.8h-0.8zM197.9 302.9h0.8v0.8h-0.8zM365.0 260.7h0.8v0.8h-0.8zM210.4 293.2h0.8v0.8h-0.8zM155.7 308.1h0.8v0.8h-0.8zM329.9 297.4h0.8v0.8h-0.8zM219.6 307.1h0.8v0.8h-0.8zM149.8 309.7h0.8v0.8h-0.8zM440.0 285.0h0.8v0.8h-0.8zM261.5 310.5h0.8v0.8h-0.8zM479.4 312.1h0.8v0.8h-0.8zM357.8 307.8h0.8v0.8h-0.8zM268.7 309.6h0.8v0.8h-0.8zM437.5 309.8h0.8v0.8h-0.8zM333.4 302.9h0.8v0.8h-0.8zM136.5 318.1h0.8v0.8h-0.8zM522.3 311.9h0.8v0.8h-0.8zM502.6 305.8h0.8v0.8h-0.8zM230.0 299.2h0.8v0.8h-0.8zM456.4 306.1h0.8v0.8h-0.8zM108.7 309.4h0.8v0.8h-0.8zM224.3 305.8h0.8v0.8h-0.8zM419.2 308.4h0.8v0.8h-0.8zM269.6 304.4h0.8v0.8h-0.8zM272.9 303.9h0.8v0.8h-0.8zM156.9 305.4h0.8v0.8h-0.8zM315.4 305.1h0.8v0.8h-0.8zM152.8 300.7h0.8v0.8h-0.8zM355.3 318.8h0.8v0.8h-0.8zM437.5 292.0h0.8v0.8h-0.8zM513.7 266.2h0.8v0.8h-0.8zM113.5 304.7h0.8v0.8h-0.8zM197.9 298.7h0.8v0.8h-0.8zM183.4 303.9h0.8v0.8h-0.8zM310.6 300.7h0.8v0.8h-0.8zM210.8 308.1h0.8v0.8h-0.8zM219.3 308.4h0.8v0.8h-0.8zM203.9 305.6h0.8v0.8h-0.8zM169.8 304.0h0.8v0.8h-0.8zM279.1 302.6h0.8v0.8h-0.8zM301.8 298.7h0.8v0.8h-0.8zM164.4 304.3h0.8v0.8h-0.8zM129.6 294.1h0.8v0.8h-0.8zM216.6 309.3h0.8v0.8h-0.8zM522.4 301.3h0.8v0.8h-0.8zM94.2 304.1h0.8v0.8h-0.8zM186.2 263.8h0.8v0.8h-0.8zM222.2 309.6h0.8v0.8h-0.8zM240.9 304.7h0.8v0.8h-0.8zM25.4 299.1h0.8v0.8h-0.8zM194.4 300.5h0.8v0.8h-0.8zM58.6 295.8h0.8v0.8h-0.8zM49.9 303.1h0.8v0.8h-0.8zM120.3 305.5h0.8v0.8h-0.8zM377.1 287.9h0.8v0.8h-0.8zM277.6 312.4h0.8v0.8h-0.8zM38.5 311.5h0.8v0.8h-0.8zM232.7 304.7h0.8v0.8h-0.8zM328.4 298.1h0.8v0.8h-0.8zM97.6 305.7h0.8v0.8h-0.8zM120.0 305.2h0.8v0.8h-0.8zM111.8 300.7h0.8v0.8h-0.8zM372.6 298.1h0.8v0.8h-0.8zM156.0 306.1h0.8v0.8h-0.8zM309.5 308.5h0.8v0.8h-0.8zM89.5 282.6h0.8v0.8h-0.8zM266.4 312.7h0.8v0.8h-0.8zM391.1 303.4h0.8v0.8h-0.8zM381.4 308.9h0.8v0.8h-0.8zM381.8 299.3h0.8v0.8h-0.8zM484.4 308.3h0.8v0.8h-0.8zM495.4 308.3h0.8v0.8h-0.8zM459.7 302.2h0.8v0.8h-0.8zM508.2 297.5h0.8v0.8h-0.8zM58.5 309.2h0.8v0.8h-0.8zM383.7 309.1h0.8v0.8h-0.8zM73.9 299.7h0.8v0.8h-0.8zM225.7 312.1h0.8v0.8h-0.8zM270.7 305.2h0.8v0.8h-0.8zM185.2 311.9h0.8v0.8h-0.8zM228.1 302.4h0.8v0.8h-0.8zM244.3 309.7h0.8v0.8h-0.8zM203.8 300.6h0.8v0.8h-0.8zM307.6 302.1h0.8v0.8h-0.8zM164.4 289.5h0.8v0.8h-0.8zM430.2 305.8h0.8v0.8h-0.8zM523.3 306.9h0.8v0.8h-0.8zM127.3 289.4h0.8v0.8h-0.8zM375.0 303.6h0.8v0.8h-0.8zM242.1 305.5h0.8v0.8h-0.8zM334.7 293.0h0.8v0.8h-0.8zM300.3 310.7h0.8v0.8h-0.8zM20.6 270.8h0.8v0.8h-0.8zM507.9 299.0h0.8v0.8h-0.8zM346.9 298.8h0.8v0.8h-0.8zM306.8 317.3h0.8v0.8h-0.8zM407.4 309.0h0.8v0.8h-0.8zM131.6 279.7h0.8v0.8h-0.8zM235.5 298.9h0.8v0.8h-0.8zM21.8 313.6h0.8v0.8h-0.8zM61.8 303.0h0.8v0.8h-0.8zM238.3 300.6h0.8v0.8h-0.8zM178.1 311.8h0.8v0.8h-0.8zM98.2 299.4h0.8v0.8h-0.8zM233.6 306.6h0.8v0.8h-0.8zM55.7 307.6h0.8v0.8h-0.8zM25.1 305.0h0.8v0.8h-0.8zM410.0 298.1h0.8v0.8h-0.8zM261.5 302.8h0.8v0.8h-0.8zM522.2 302.3h0.8v0.8h-0.8zM72.0 308.9h0.8v0.8h-0.8zM46.9 300.9h0.8v0.8h-0.8zM119.1 301.7h0.8v0.8h-0.8zM339.1 308.8h0.8v0.8h-0.8zM221.2 306.3h0.8v0.8h-0.8zM445.5 318.1h0.8v0.8h-0.8zM246.9 306.0h0.8v0.8h-0.8zM534.0 300.4h0.8v0.8h-0.8zM222.5 309.7h0.8v0.8h-0.8zM99.2 309.3h0.8v0.8h-0.8zM279.5 305.7h0.8v0.8h-0.8zM271.9 302.6h0.8v0.8h-0.8zM225.2 300.7h0.8v0.8h-0.8zM20.9 309.1h0.8v0.8h-0.8zM242.0 304.1h0.8v0.8h-0.8zM270.7 300.7h0.8v0.8h-0.8zM59.0 310.7h0.8v0.8h-0.8zM269.8 310.1h0.8v0.8h-0.8zM64.9 300.0h0.8v0.8h-0.8zM39.7 293.3h0.8v0.8h-0.8zM155.3 312.2h0.8v0.8h-0.8zM234.4 303.3h0.8v0.8h-0.8zM184.4 304.9h0.8v0.8h-0.8zM252.9 264.2h0.8v0.8h-0.8zM179.8 296.7h0.8v0.8h-0.8zM122.4 311.3h0.8v0.8h-0.8zM201.6 312.9h0.8v0.8h-0.8zM271.2 299.9h0.8v0.8h-0.8zM311.9 284.1h0.8v0.8h-0.8zM254.2 312.5h0.8v0.8h-0.8zM163.1 309.3h0.8v0.8h-0.8zM161.8 271.4h0.8v0.8h-0.8zM63.9 310.1h0.8v0.8h-0.8zM323.3 301.9h0.8v0.8h-0.8zM398.8 310.5h0.8v0.8h-0.8zM124.2 306.5h0.8v0.8h-0.8zM342.8 300.1h0.8v0.8h-0.8zM117.3 297.3h0.8v0.8h-0.8zM321.4 315.6h0.8v0.8h-0.8zM455.3 308.1h0.8v0.8h-0.8zM327.4 261.4h0.8v0.8h-0.8zM263.5 301.0h0.8v0.8h-0.8zM251.3 316.5h0.8v0.8h-0.8zM460.8 301.1h0.8v0.8h-0.8zM262.9 263.1h0.8v0.8h-0.8zM423.4 283.1h0.8v0.8h-0.8zM110.3 304.4h0.8v0.8h-0.8zM189.5 273.8h0.8v0.8h-0.8zM45.8 289.6h0.8v0.8h-0.8zM121.9 312.1h0.8v0.8h-0.8zM209.8 302.2h0.8v0.8h-0.8zM276.5 306.5h0.8v0.8h-0.8zM286.2 275.5h0.8v0.8h-0.8zM79.2 298.5h0.8v0.8h-0.8zM517.9 269.5h0.8v0.8h-0.8zM27.0 291.2h0.8v0.8h-0.8zM136.9 309.9h0.8v0.8h-0.8zM98.0 301.3h0.8v0.8h-0.8zM303.9 308.9h0.8v0.8h-0.8zM281.1 308.6h0.8v0.8h-0.8zM58.6 315.3h0.8v0.8h-0.8zM32.6 304.3h0.8v0.8h-0.8zM229.9 303.7h0.8v0.8h-0.8zM327.1 301.9h0.8v0.8h-0.8zM225.0 284.0h0.8v0.8h-0.8zM119.0 299.9h0.8v0.8h-0.8zM268.1 304.6h0.8v0.8h-0.8zM297.8 307.1h0.8v0.8h-0.8zM41.4 311.7h0.8v0.8h-0.8zM140.0 310.0h0.8v0.8h-0.8zM483.5 306.9h0.8v0.8h-0.8zM384.8 311.5h0.8v0.8h-0.8zM142.4 312.1h0.8v0.8h-0.8zM104.9 304.6h0.8v0.8h-0.8zM100.4 312.4h0.8v0.8h-0.8zM293.6 273.0h0.8v0.8h-0.8zM294.6 310.5h0.8v0.8h-0.8zM143.8 304.1h0.8v0.8h-0.8zM343.3 309.4h0.8v0.8h-0.8zM165.4 306.0h0.8v0.8h-0.8zM139.8 305.2h0.8v0.8h-0.8zM251.0 309.9h0.8v0.8h-0.8zM472.2 307.2h0.8v0.8h-0.8zM201.1 265.3h0.8v0.8h-0.8zM101.4 264.3h0.8v0.8h-0.8zM232.3 303.3h0.8v0.8h-0.8zM385.3 302.0h0.8v0.8h-0.8zM113.2 307.3h0.8v0.8h-0.8zM47.2 275.9h0.8v0.8h-0.8zM216.7 261.2h0.8v0.8h-0.8zM324.7 300.8h0.8v0.8h-0.8zM41.4 300.5h0.8v0.8h-0.8zM127.0 310.6h0.8v0.8h-0.8zM91.6 312.5h0.8v0.8h-0.8zM162.7 314.5h0.8v0.8h-0.8zM508.8 303.8h0.8v0.8h-0.8zM31.0 302.9h0.8v0.8h-0.8zM281.4 304.6h0.8v0.8h-0.8zM242.8 302.2h0.8v0.8h-0.8zM40.5 305.8h0.8v0.8h-0.8zM135.1 297.9h0.8v0.8h-0.8zM388.5 297.7h0.8v0.8h-0.8zM329.7 309.1h0.8v0.8h-0.8zM149.6 308.7h0.8v0.8h-0.8zM352.9 306.7h0.8v0.8h-0.8zM70.0 301.3h0.8v0.8h-0.8zM194.9 303.6h0.8v0.8h-0.8zM89.7 298.7h0.8v0.8h-0.8zM469.2 297.0h0.8v0.8h-0.8zM71.5 304.4h0.8v0.8h-0.8zM152.9 292.6h0.8v0.8h-0.8zM273.4 302.6h0.8v0.8h-0.8zM314.3 301.0h0.8v0.8h-0.8zM276.5 300.0h0.8v0.8h-0.8zM225.1 293.1h0.8v0.8h-0.8zM262.0 284.5h0.8v0.8h-0.8zM254.8 308.4h0.8v0.8h-0.8zM95.2 295.3h0.8v0.8h-0.8zM198.3 301.2h0.8v0.8h-0.8zM50.8 311.0h0.8v0.8h-0.8zM136.6 308.9h0.8v0.8h-0.8zM105.3 312.3h0.8v0.8h-0.8zM525.7 304.2h0.8v0.8h-0.8zM56.4 304.5h0.8v0.8h-0.8zM390.9 279.7h0.8v0.8h-0.8zM144.7 270.0h0.8v0.8h-0.8zM241.6 303.2h0.8v0.8h-0.8zM118.2 308.9h0.8v0.8h-0.8zM206.7 304.1h0.8v0.8h-0.8zM158.7 303.7h0.8v0.8h-0.8zM259.1 312.8h0.8v0.8h-0.8zM260.8 299.1h0.8v0.8h-0.8zM326.4 302.4h0.8v0.8h-0.8zM287.7 303.4h0.8v0.8h-0.8zM461.4 294.7h0.8v0.8h-0.8zM403.9 309.7h0.8v0.8h-0.8zM218.0 313.4h0.8v0.8h-0.8zM271.3 298.7h0.8v0.8h-0.8zM30.5 313.6h0.8v0.8h-0.8zM49.5 306.5h0.8v0.8h-0.8zM252.6 299.5h0.8v0.8h-0.8zM348.3 303.9h0.8v0.8h-0.8zM263.0 311.5h0.8v0.8h-0.8zM143.4 304.1h0.8v0.8h-0.8zM133.4 310.4h0.8v0.8h-0.8zM288.4 273.7h0.8v0.8h-0.8zM292.5 306.4h0.8v0.8h-0.8zM240.5 306.2h0.8v0.8h-0.8zM67.7 302.5h0.8v0.8h-0.8zM298.1 297.6h0.8v0.8h-0.8zM462.1 294.0h0.8v0.8h-0.8zM148.3 304.0h0.8v0.8h-0.8zM318.4 315.7h0.8v0.8h-0.8zM141.4 309.1h0.8v0.8h-0.8zM184.5 274.6h0.8v0.8h-0.8zM29.9 307.7h0.8v0.8h-0.8zM199.2 305.5h0.8v0.8h-0.8zM272.2 300.2h0.8v0.8h-0.8zM421.8 298.9h0.8v0.8h-0.8zM281.4 300.6h0.8v0.8h-0.8zM166.7 270.0h0.8v0.8h-0.8zM213.4 302.9h0.8v0.8h-0.8zM247.5 316.0h0.8v0.8h-0.8zM305.4 305.2h0.8v0.8h-0.8zM225.3 302.0h0.8v0.8h-0.8zM42.4 305.7h0.8v0.8h-0.8zM42.0 300.2h0.8v0.8h-0.8zM323.1 306.6h0.8v0.8h-0.8zM224.8 302.7h0.8v0.8h-0.8zM307.0 300.5h0.8v0.8h-0.8zM215.9 294.2h0.8v0.8h-0.8zM447.2 304.3h0.8v0.8h-0.8zM180.3 303.2h0.8v0.8h-0.8zM428.5 298.2h0.8v0.8h-0.8zM196.8 301.2h0.8v0.8h-0.8zM243.3 304.3h0.8v0.8h-0.8zM225.7 303.5h0.8v0.8h-0.8zM350.9 291.5h0.8v0.8h-0.8zM368.7 309.9h0.8v0.8h-0.8zM251.7 310.8h0.8v0.8h-0.8zM299.5 304.9h0.8v0.8h-0.8zM36.2 317.9h0.8v0.8h-0.8zM495.9 299.0h0.8v0.8h-0.8zM352.2 307.1h0.8v0.8h-0.8zM239.3 306.5h0.8v0.8h-0.8zM101.0 265.9h0.8v0.8h-0.8zM266.4 311.9h0.8v0.8h-0.8zM52.9 274.0h0.8v0.8h-0.8zM248.4 303.0h0.8v0.8h-0.8zM32.5 307.5h0.8v0.8h-0.8zM246.9 295.4h0.8v0.8h-0.8zM406.5 304.1h0.8v0.8h-0.8zM274.4 300.1h0.8v0.8h-0.8zM125.5 308.7h0.8v0.8h-0.8zM184.8 301.8h0.8v0.8h-0.8zM216.8 304.4h0.8v0.8h-0.8zM118.5 301.9h0.8v0.8h-0.8zM524.0 312.1h0.8v0.8h-0.8zM131.4 299.1h0.8v0.8h-0.8zM240.9 308.3h0.8v0.8h-0.8zM461.0 306.5h0.8v0.8h-0.8zM194.7 311.3h0.8v0.8h-0.8zM288.4 304.2h0.8v0.8h-0.8zM249.6 297.3h0.8v0.8h-0.8zM88.0 306.6h0.8v0.8h-0.8zM309.0 302.9h0.8v0.8h-0.8zM190.1 296.5h0.8v0.8h-0.8zM438.5 303.3h0.8v0.8h-0.8zM197.9 310.7h0.8v0.8h-0.8zM238.1 302.1h0.8v0.8h-0.8zM129.1 310.0h0.8v0.8h-0.8zM306.7 298.6h0.8v0.8h-0.8zM241.3 307.1h0.8v0.8h-0.8zM539.1 304.4h0.8v0.8h-0.8zM247.0 307.0h0.8v0.8h-0.8zM173.8 291.1h0.8v0.8h-0.8zM333.9 300.3h0.8v0.8h-0.8zM497.3 311.4h0.8v0.8h-0.8zM203.1 304.3h0.8v0.8h-0.8zM90.7 307.1h0.8v0.8h-0.8zM273.0 306.0h0.8v0.8h-0.8zM209.1 307.4h0.8v0.8h-0.8zM22.9 297.6h0.8v0.8h-0.8zM20.6 301.0h0.8v0.8h-0.8zM142.6 308.3h0.8v0.8h-0.8zM31.5 297.6h0.8v0.8h-0.8zM316.1 312.4h0.8v0.8h-0.8zM377.7 316.3h0.8v0.8h-0.8zM479.0 307.0h0.8v0.8h-0.8zM125.9 309.6h0.8v0.8h-0.8zM263.5 298.9h0.8v0.8h-0.8zM144.6 296.5h0.8v0.8h-0.8zM222.9 298.4h0.8v0.8h-0.8zM395.8 293.1h0.8v0.8h-0.8zM148.3 307.3h0.8v0.8h-0.8zM445.5 306.4h0.8v0.8h-0.8zM204.5 298.3h0.8v0.8h-0.8zM57.8 302.7h0.8v0.8h-0.8zM242.8 310.2h0.8v0.8h-0.8zM150.5 287.7h0.8v0.8h-0.8zM214.6 302.6h0.8v0.8h-0.8zM296.7 309.3h0.8v0.8h-0.8zM262.6 306.4h0.8v0.8h-0.8zM517.7 295.5h0.8v0.8h-0.8zM319.6 295.0h0.8v0.8h-0.8zM360.4 310.4h0.8v0.8h-0.8zM450.1 303.1h0.8v0.8h-0.8zM94.1 311.9h0.8v0.8h-0.8zM202.9 305.1h0.8v0.8h-0.8zM240.6 300.8h0.8v0.8h-0.8zM136.9 298.4h0.8v0.8h-0.8zM408.0 316.0h0.8v0.8h-0.8zM184.1 295.8h0.8v0.8h-0.8zM247.4 265.4h0.8v0.8h-0.8zM64.0 308.3h0.8v0.8h-0.8zM208.0 307.0h0.8v0.8h-0.8zM177.1 308.6h0.8v0.8h-0.8zM243.2 297.3h0.8v0.8h-0.8zM335.7 300.5h0.8v0.8h-0.8zM46.5 308.8h0.8v0.8h-0.8zM321.8 304.1h0.8v0.8h-0.8zM96.9 306.1h0.8v0.8h-0.8zM358.8 314.2h0.8v0.8h-0.8zM133.5 277.0h0.8v0.8h-0.8zM136.5 302.8h0.8v0.8h-0.8zM121.0 310.1h0.8v0.8h-0.8zM70.9 307.6h0.8v0.8h-0.8zM285.1 301.2h0.8v0.8h-0.8zM22.6 309.4h0.8v0.8h-0.8zM359.2 311.2h0.8v0.8h-0.8zM171.3 308.6h0.8v0.8h-0.8zM123.2 304.0h0.8v0.8h-0.8zM321.7 264.4h0.8v0.8h-0.8zM199.2 282.8h0.8v0.8h-0.8zM39.0 310.8h0.8v0.8h-0.8zM128.4 298.3h0.8v0.8h-0.8zM110.0 296.5h0.8v0.8h-0.8zM273.6 311.0h0.8v0.8h-0.8zM513.2 283.7h0.8v0.8h-0.8zM345.2 311.4h0.8v0.8h-0.8zM144.2 313.9h0.8v0.8h-0.8zM151.4 310.0h0.8v0.8h-0.8zM254.8 310.7h0.8v0.8h-0.8zM207.2 300.9h0.8v0.8h-0.8zM317.2 293.7h0.8v0.8h-0.8zM64.5 298.8h0.8v0.8h-0.8zM188.2 306.1h0.8v0.8h-0.8zM131.0 306.5h0.8v0.8h-0.8zM410.6 309.7h0.8v0.8h-0.8zM268.5 277.0h0.8v0.8h-0.8zM467.1 304.4h0.8v0.8h-0.8zM116.7 317.8h0.8v0.8h-0.8zM118.7 303.0h0.8v0.8h-0.8zM53.2 300.1h0.8v0.8h-0.8zM292.9 306.7h0.8v0.8h-0.8zM191.1 299.5h0.8v0.8h-0.8zM269.9 269.5h0.8v0.8h-0.8zM26.8 307.2h0.8v0.8h-0.8zM150.7 298.6h0.8v0.8h-0.8zM112.2 309.2h0.8v0.8h-0.8zM221.4 304.8h0.8v0.8h-0.8zM177.8 273.0h0.8v0.8h-0.8zM193.4 311.2h0.8v0.8h-0.8zM26.7 296.7h0.8v0.8h-0.8zM178.4 306.7h0.8v0.8h-0.8zM41.7 309.1h0.8v0.8h-0.8zM27.3 307.8h0.8v0.8h-0.8zM284.2 310.1h0.8v0.8h-0.8zM147.9 303.1h0.8v0.8h-0.8zM234.6 272.9h0.8v0.8h-0.8zM356.1 313.6h0.8v0.8h-0.8zM240.5 301.9h0.8v0.8h-0.8zM271.5 306.5h0.8v0.8h-0.8zM66.9 312.5h0.8v0.8h-0.8zM152.9 275.6h0.8v0.8h-0.8zM215.0 309.5h0.8v0.8h-0.8zM451.2 306.6h0.8v0.8h-0.8zM138.2 303.8h0.8v0.8h-0.8zM420.9 290.0h0.8v0.8h-0.8zM342.1 308.1h0.8v0.8h-0.8zM94.1 266.7h0.8v0.8h-0.8zM156.1 302.0h0.8v0.8h-0.8zM266.3 305.7h0.8v0.8h-0.8zM306.4 312.6h0.8v0.8h-0.8zM132.1 309.0h0.8v0.8h-0.8zM127.7 299.2h0.8v0.8h-0.8zM334.7 298.7h0.8v0.8h-0.8zM327.0 282.7h0.8v0.8h-0.8zM50.1 303.9h0.8v0.8h-0.8zM437.8 308.2h0.8v0.8h-0.8zM225.2 317.2h0.8v0.8h-0.8zM59.8 308.2h0.8v0.8h-0.8zM111.1 310.2h0.8v0.8h-0.8zM251.8 304.5h0.8v0.8h-0.8zM316.5 303.1h0.8v0.8h-0.8zM189.3 302.1h0.8v0.8h-0.8zM28.6 305.6h0.8v0.8h-0.8zM402.9 306.0h0.8v0.8h-0.8zM110.0 303.5h0.8v0.8h-0.8zM129.4 314.1h0.8v0.8h-0.8zM153.9 303.1h0.8v0.8h-0.8zM84.0 298.7h0.8v0.8h-0.8zM398.6 303.4h0.8v0.8h-0.8zM20.1 301.5h0.8v0.8h-0.8zM256.5 267.0h0.8v0.8h-0.8zM210.2 297.0h0.8v0.8h-0.8zM338.4 300.8h0.8v0.8h-0.8zM27.9 303.0h0.8v0.8h-0.8zM508.6 303.7h0.8v0.8h-0.8zM188.9 302.9h0.8v0.8h-0.8zM42.8 291.0h0.8v0.8h-0.8zM245.7 306.1h0.8v0.8h-0.8zM383.1 307.4h0.8v0.8h-0.8zM95.0 307.9h0.8v0.8h-0.8zM28.5 305.0h0.8v0.8h-0.8zM281.7 266.1h0.8v0.8h-0.8zM284.8 304.1h0.8v0.8h-0.8zM350.5 300.9h0.8v0.8h-0.8zM163.2 315.3h0.8v0.8h-0.8zM211.7 276.0h0.8v0.8h-0.8zM276.4 306.2h0.8v0.8h-0.8zM291.7 298.8h0.8v0.8h-0.8zM241.5 278.8h0.8v0.8h-0.8zM341.2 303.0h0.8v0.8h-0.8zM316.5 297.4h0.8v0.8h-0.8zM29.7 302.2h0.8v0.8h-0.8zM122.1 307.8h0.8v0.8h-0.8zM179.7 303.3h0.8v0.8h-0.8zM408.9 305.0h0.8v0.8h-0.8zM151.7 305.5h0.8v0.8h-0.8zM52.6 306.8h0.8v0.8h-0.8zM57.5 304.0h0.8v0.8h-0.8zM349.5 304.3h0.8v0.8h-0.8zM143.8 291.3h0.8v0.8h-0.8zM26.7 266.7h0.8v0.8h-0.8zM291.9 306.4h0.8v0.8h-0.8zM167.9 307.8h0.8v0.8h-0.8zM215.3 299.1h0.8v0.8h-0.8zM531.2 303.5h0.8v0.8h-0.8zM345.2 300.1h0.8v0.8h-0.8zM108.3 306.2h0.8v0.8h-0.8zM198.7 308.2h0.8v0.8h-0.8zM357.1 296.5h0.8v0.8h-0.8zM455.6 306.9h0.8v0.8h-0.8zM423.8 300.4h0.8v0.8h-0.8zM182.2 310.3h0.8v0.8h-0.8zM287.1 289.8h0.8v0.8h-0.8zM285.5 309.2h0.8v0.8h-0.8zM233.8 301.7h0.8v0.8h-0.8zM106.6 298.9h0.8v0.8h-0.8zM489.1 307.0h0.8v0.8h-0.8zM111.3 300.1h0.8v0.8h-0.8zM284.9 263.9h0.8v0.8h-0.8zM55.4 306.5h0.8v0.8h-0.8zM287.4 315.0h0.8v0.8h-0.8zM28.6 272.6h0.8v0.8h-0.8zM209.5 309.2h0.8v0.8h-0.8zM337.2 306.6h0.8v0.8h-0.8zM77.7 296.9h0.8v0.8h-0.8zM109.9 261.7h0.8v0.8h-0.8zM115.5 304.6h0.8v0.8h-0.8zM134.3 301.2h0.8v0.8h-0.8zM341.3 300.6h0.8v0.8h-0.8zM326.3 276.1h0.8v0.8h-0.8zM321.6 301.1h0.8v0.8h-0.8zM334.5 306.4h0.8v0.8h-0.8zM163.7 314.5h0.8v0.8h-0.8zM37.8 300.2h0.8v0.8h-0.8zM203.0 310.3h0.8v0.8h-0.8zM56.7 308.0h0.8v0.8h-0.8zM99.3 302.7h0.8v0.8h-0.8zM174.0 300.5h0.8v0.8h-0.8zM117.8 301.4h0.8v0.8h-0.8zM234.7 306.5h0.8v0.8h-0.8zM141.4 300.4h0.8v0.8h-0.8zM60.9 299.2h0.8v0.8h-0.8zM415.0 297.0h0.8v0.8h-0.8zM209.9 307.9h0.8v0.8h-0.8zM185.1 268.1h0.8v0.8h-0.8zM112.6 294.5h0.8v0.8h-0.8zM211.1 304.1h0.8v0.8h-0.8zM414.4 308.5h0.8v0.8h-0.8zM208.7 312.1h0.8v0.8h-0.8zM218.8 294.7h0.8v0.8h-0.8zM226.7 311.4h0.8v0.8h-0.8zM270.2 313.1h0.8v0.8h-0.8z" fill="#58c0c8" fill-opacity="0.55"/>
<path d="M173.5 330.1h0.85v0.85h-0.85zM249.4 326.7h0.85v0.85h-0.85zM210.5 327.9h0.85v0.85h-0.85zM347.9 318.1h0.85v0.85h-0.85zM33.3 325.8h0.85v0.85h-0.85zM122.1 323.7h0.85v0.85h-0.85zM144.3 331.9h0.85v0.85h-0.85zM205.9 325.4h0.85v0.85h-0.85zM283.0 328.5h0.85v0.85h-0.85zM358.8 319.5h0.85v0.85h-0.85zM405.7 327.9h0.85v0.85h-0.85zM476.0 324.6h0.85v0.85h-0.85zM255.9 311.8h0.85v0.85h-0.85zM163.5 324.6h0.85v0.85h-0.85zM152.1 325.0h0.85v0.85h-0.85zM342.2 323.9h0.85v0.85h-0.85zM224.9 333.2h0.85v0.85h-0.85zM371.4 323.9h0.85v0.85h-0.85zM288.9 331.1h0.85v0.85h-0.85zM289.0 326.4h0.85v0.85h-0.85zM469.9 318.5h0.85v0.85h-0.85zM205.2 324.9h0.85v0.85h-0.85zM35.6 333.1h0.85v0.85h-0.85zM354.8 329.5h0.85v0.85h-0.85zM43.5 326.2h0.85v0.85h-0.85zM41.3 322.1h0.85v0.85h-0.85zM238.2 329.4h0.85v0.85h-0.85zM518.9 320.9h0.85v0.85h-0.85zM175.6 325.4h0.85v0.85h-0.85zM435.7 314.5h0.85v0.85h-0.85zM363.2 322.7h0.85v0.85h-0.85zM206.0 327.8h0.85v0.85h-0.85zM124.5 329.9h0.85v0.85h-0.85zM369.0 326.5h0.85v0.85h-0.85zM178.3 326.0h0.85v0.85h-0.85zM327.0 326.0h0.85v0.85h-0.85zM80.8 321.2h0.85v0.85h-0.85zM67.4 325.7h0.85v0.85h-0.85zM116.6 329.4h0.85v0.85h-0.85zM380.6 327.0h0.85v0.85h-0.85zM214.1 319.9h0.85v0.85h-0.85zM106.2 322.8h0.85v0.85h-0.85zM418.8 314.1h0.85v0.85h-0.85zM208.6 323.4h0.85v0.85h-0.85zM215.2 323.7h0.85v0.85h-0.85zM385.0 320.2h0.85v0.85h-0.85zM46.6 329.1h0.85v0.85h-0.85zM31.6 317.8h0.85v0.85h-0.85zM23.9 326.7h0.85v0.85h-0.85zM149.0 318.4h0.85v0.85h-0.85zM469.1 324.3h0.85v0.85h-0.85zM227.1 320.7h0.85v0.85h-0.85zM316.1 330.0h0.85v0.85h-0.85zM317.5 334.6h0.85v0.85h-0.85zM21.7 319.4h0.85v0.85h-0.85zM179.0 325.4h0.85v0.85h-0.85zM298.4 325.7h0.85v0.85h-0.85zM149.9 324.4h0.85v0.85h-0.85zM189.8 322.1h0.85v0.85h-0.85zM123.7 327.3h0.85v0.85h-0.85zM20.3 327.6h0.85v0.85h-0.85zM173.4 326.3h0.85v0.85h-0.85zM79.1 331.6h0.85v0.85h-0.85zM155.2 329.6h0.85v0.85h-0.85zM354.5 330.3h0.85v0.85h-0.85zM141.9 318.4h0.85v0.85h-0.85zM84.4 325.5h0.85v0.85h-0.85zM231.3 322.7h0.85v0.85h-0.85zM398.2 325.1h0.85v0.85h-0.85zM21.0 333.5h0.85v0.85h-0.85zM37.8 330.3h0.85v0.85h-0.85zM40.1 322.2h0.85v0.85h-0.85zM488.7 323.2h0.85v0.85h-0.85zM214.6 318.9h0.85v0.85h-0.85zM241.3 321.5h0.85v0.85h-0.85zM391.5 320.9h0.85v0.85h-0.85zM129.3 323.3h0.85v0.85h-0.85zM352.4 329.6h0.85v0.85h-0.85zM68.3 331.9h0.85v0.85h-0.85zM240.7 323.0h0.85v0.85h-0.85zM312.2 325.7h0.85v0.85h-0.85zM537.2 325.8h0.85v0.85h-0.85zM292.1 328.8h0.85v0.85h-0.85zM521.3 319.8h0.85v0.85h-0.85zM330.4 322.3h0.85v0.85h-0.85zM25.8 327.7h0.85v0.85h-0.85zM521.9 312.5h0.85v0.85h-0.85zM367.0 328.6h0.85v0.85h-0.85zM154.4 325.2h0.85v0.85h-0.85zM320.5 320.5h0.85v0.85h-0.85zM79.1 327.7h0.85v0.85h-0.85zM341.7 330.4h0.85v0.85h-0.85zM140.9 325.6h0.85v0.85h-0.85zM74.2 327.8h0.85v0.85h-0.85zM61.8 325.9h0.85v0.85h-0.85zM160.3 325.5h0.85v0.85h-0.85zM155.8 326.4h0.85v0.85h-0.85zM135.5 326.1h0.85v0.85h-0.85zM269.1 320.8h0.85v0.85h-0.85zM244.3 330.2h0.85v0.85h-0.85zM426.8 324.9h0.85v0.85h-0.85zM127.1 331.7h0.85v0.85h-0.85zM299.7 326.4h0.85v0.85h-0.85zM311.6 331.2h0.85v0.85h-0.85zM226.6 326.6h0.85v0.85h-0.85zM338.3 321.9h0.85v0.85h-0.85zM169.1 330.1h0.85v0.85h-0.85zM340.6 330.6h0.85v0.85h-0.85zM210.9 327.0h0.85v0.85h-0.85zM147.4 331.2h0.85v0.85h-0.85zM466.1 326.1h0.85v0.85h-0.85zM522.4 329.9h0.85v0.85h-0.85zM324.8 332.2h0.85v0.85h-0.85zM284.1 329.1h0.85v0.85h-0.85zM263.8 325.5h0.85v0.85h-0.85zM26.9 326.5h0.85v0.85h-0.85zM202.0 325.8h0.85v0.85h-0.85zM193.3 329.6h0.85v0.85h-0.85zM220.5 325.7h0.85v0.85h-0.85zM283.8 324.0h0.85v0.85h-0.85zM240.7 328.8h0.85v0.85h-0.85zM289.6 326.2h0.85v0.85h-0.85zM414.4 322.2h0.85v0.85h-0.85zM235.7 329.7h0.85v0.85h-0.85zM267.1 321.6h0.85v0.85h-0.85zM319.8 318.3h0.85v0.85h-0.85zM62.0 331.3h0.85v0.85h-0.85zM403.9 327.3h0.85v0.85h-0.85zM46.3 325.4h0.85v0.85h-0.85zM164.8 322.9h0.85v0.85h-0.85zM380.0 325.5h0.85v0.85h-0.85zM81.7 328.7h0.85v0.85h-0.85zM505.9 331.0h0.85v0.85h-0.85zM478.7 328.2h0.85v0.85h-0.85zM47.5 316.6h0.85v0.85h-0.85zM228.2 322.0h0.85v0.85h-0.85zM203.9 327.7h0.85v0.85h-0.85zM259.8 321.9h0.85v0.85h-0.85zM411.3 323.2h0.85v0.85h-0.85zM118.4 325.2h0.85v0.85h-0.85zM55.8 323.9h0.85v0.85h-0.85zM340.2 320.9h0.85v0.85h-0.85zM267.3 323.5h0.85v0.85h-0.85zM340.7 330.6h0.85v0.85h-0.85zM300.0 323.9h0.85v0.85h-0.85zM304.5 329.2h0.85v0.85h-0.85zM474.0 318.9h0.85v0.85h-0.85zM408.4 330.0h0.85v0.85h-0.85zM45.2 327.3h0.85v0.85h-0.85zM293.1 314.3h0.85v0.85h-0.85zM373.5 313.9h0.85v0.85h-0.85zM193.5 327.4h0.85v0.85h-0.85zM224.6 322.7h0.85v0.85h-0.85zM427.0 337.5h0.85v0.85h-0.85zM180.7 324.8h0.85v0.85h-0.85zM486.5 322.1h0.85v0.85h-0.85zM95.9 328.5h0.85v0.85h-0.85zM336.0 331.5h0.85v0.85h-0.85zM462.1 325.1h0.85v0.85h-0.85zM179.9 325.4h0.85v0.85h-0.85zM170.4 329.2h0.85v0.85h-0.85zM28.4 326.2h0.85v0.85h-0.85zM133.1 326.4h0.85v0.85h-0.85zM302.0 312.8h0.85v0.85h-0.85zM196.2 323.9h0.85v0.85h-0.85zM181.6 324.1h0.85v0.85h-0.85zM142.2 324.4h0.85v0.85h-0.85zM30.2 320.6h0.85v0.85h-0.85zM267.3 326.9h0.85v0.85h-0.85zM327.5 323.6h0.85v0.85h-0.85zM168.9 327.9h0.85v0.85h-0.85zM397.4 312.9h0.85v0.85h-0.85zM424.2 319.5h0.85v0.85h-0.85zM322.7 321.1h0.85v0.85h-0.85zM247.2 325.9h0.85v0.85h-0.85zM95.7 320.1h0.85v0.85h-0.85zM271.4 312.6h0.85v0.85h-0.85zM53.3 321.5h0.85v0.85h-0.85zM328.1 329.1h0.85v0.85h-0.85zM327.4 328.8h0.85v0.85h-0.85zM276.3 328.0h0.85v0.85h-0.85zM331.8 320.9h0.85v0.85h-0.85zM200.5 326.0h0.85v0.85h-0.85zM127.2 328.4h0.85v0.85h-0.85zM459.2 326.4h0.85v0.85h-0.85zM332.5 323.1h0.85v0.85h-0.85zM342.9 319.5h0.85v0.85h-0.85zM223.9 326.5h0.85v0.85h-0.85zM414.8 327.3h0.85v0.85h-0.85zM363.4 324.9h0.85v0.85h-0.85zM132.2 327.1h0.85v0.85h-0.85zM323.7 333.9h0.85v0.85h-0.85zM158.2 313.3h0.85v0.85h-0.85zM112.7 323.8h0.85v0.85h-0.85zM141.9 318.1h0.85v0.85h-0.85zM97.4 326.5h0.85v0.85h-0.85zM230.3 329.0h0.85v0.85h-0.85zM318.4 312.9h0.85v0.85h-0.85zM97.4 326.2h0.85v0.85h-0.85zM311.7 321.7h0.85v0.85h-0.85zM264.8 331.8h0.85v0.85h-0.85zM154.5 324.3h0.85v0.85h-0.85zM225.6 323.3h0.85v0.85h-0.85zM91.2 319.5h0.85v0.85h-0.85zM479.6 333.5h0.85v0.85h-0.85zM195.6 327.1h0.85v0.85h-0.85zM194.0 328.7h0.85v0.85h-0.85zM351.0 330.4h0.85v0.85h-0.85zM72.0 327.5h0.85v0.85h-0.85zM148.2 325.0h0.85v0.85h-0.85zM306.7 330.7h0.85v0.85h-0.85zM309.2 328.7h0.85v0.85h-0.85zM522.7 329.8h0.85v0.85h-0.85zM258.1 329.8h0.85v0.85h-0.85zM53.4 329.1h0.85v0.85h-0.85zM449.7 322.7h0.85v0.85h-0.85zM51.1 319.6h0.85v0.85h-0.85zM41.7 328.3h0.85v0.85h-0.85zM60.0 326.1h0.85v0.85h-0.85zM246.4 323.5h0.85v0.85h-0.85zM270.3 322.7h0.85v0.85h-0.85zM28.6 331.4h0.85v0.85h-0.85zM160.2 323.5h0.85v0.85h-0.85zM107.4 326.8h0.85v0.85h-0.85zM38.0 321.3h0.85v0.85h-0.85zM232.8 321.4h0.85v0.85h-0.85zM287.6 333.0h0.85v0.85h-0.85zM187.4 327.0h0.85v0.85h-0.85zM217.4 318.8h0.85v0.85h-0.85zM149.0 330.4h0.85v0.85h-0.85zM436.6 326.1h0.85v0.85h-0.85zM284.0 325.9h0.85v0.85h-0.85zM514.0 324.8h0.85v0.85h-0.85zM404.8 324.1h0.85v0.85h-0.85zM271.9 326.1h0.85v0.85h-0.85zM105.6 326.4h0.85v0.85h-0.85zM159.7 327.8h0.85v0.85h-0.85zM247.6 327.8h0.85v0.85h-0.85zM32.6 329.0h0.85v0.85h-0.85zM112.8 320.9h0.85v0.85h-0.85zM166.5 322.0h0.85v0.85h-0.85zM115.7 315.1h0.85v0.85h-0.85zM388.5 326.7h0.85v0.85h-0.85zM285.5 322.3h0.85v0.85h-0.85zM33.7 329.7h0.85v0.85h-0.85zM299.3 328.4h0.85v0.85h-0.85zM196.1 325.9h0.85v0.85h-0.85zM441.2 329.2h0.85v0.85h-0.85zM149.8 330.4h0.85v0.85h-0.85zM206.3 328.9h0.85v0.85h-0.85zM122.1 329.6h0.85v0.85h-0.85zM493.5 325.6h0.85v0.85h-0.85zM93.1 326.0h0.85v0.85h-0.85zM60.7 319.0h0.85v0.85h-0.85zM405.9 322.4h0.85v0.85h-0.85zM305.9 326.6h0.85v0.85h-0.85zM393.5 326.1h0.85v0.85h-0.85zM240.0 325.4h0.85v0.85h-0.85zM42.5 327.3h0.85v0.85h-0.85zM404.2 324.5h0.85v0.85h-0.85zM325.4 327.5h0.85v0.85h-0.85zM366.7 327.0h0.85v0.85h-0.85zM96.1 330.8h0.85v0.85h-0.85zM68.5 324.3h0.85v0.85h-0.85zM303.3 320.4h0.85v0.85h-0.85zM461.7 324.2h0.85v0.85h-0.85zM342.0 314.0h0.85v0.85h-0.85zM201.6 332.1h0.85v0.85h-0.85zM331.8 330.8h0.85v0.85h-0.85zM135.9 328.9h0.85v0.85h-0.85zM23.2 322.2h0.85v0.85h-0.85zM312.2 322.4h0.85v0.85h-0.85zM351.4 322.7h0.85v0.85h-0.85zM84.8 325.7h0.85v0.85h-0.85zM297.0 324.8h0.85v0.85h-0.85zM63.3 328.5h0.85v0.85h-0.85zM57.7 328.9h0.85v0.85h-0.85zM523.7 325.8h0.85v0.85h-0.85zM349.2 326.3h0.85v0.85h-0.85zM36.3 327.5h0.85v0.85h-0.85zM346.4 324.1h0.85v0.85h-0.85zM248.7 326.8h0.85v0.85h-0.85zM368.3 324.7h0.85v0.85h-0.85zM421.0 327.1h0.85v0.85h-0.85zM219.8 323.0h0.85v0.85h-0.85zM214.2 325.6h0.85v0.85h-0.85zM392.0 321.7h0.85v0.85h-0.85zM360.4 324.1h0.85v0.85h-0.85zM50.1 319.3h0.85v0.85h-0.85zM197.0 330.9h0.85v0.85h-0.85zM272.3 329.6h0.85v0.85h-0.85zM337.6 327.9h0.85v0.85h-0.85zM130.6 323.1h0.85v0.85h-0.85zM380.0 327.1h0.85v0.85h-0.85zM64.0 333.0h0.85v0.85h-0.85zM260.4 332.9h0.85v0.85h-0.85zM194.3 330.0h0.85v0.85h-0.85zM288.6 322.3h0.85v0.85h-0.85zM357.9 322.9h0.85v0.85h-0.85zM197.8 325.3h0.85v0.85h-0.85zM119.1 326.5h0.85v0.85h-0.85zM114.5 325.2h0.85v0.85h-0.85zM513.9 319.0h0.85v0.85h-0.85zM110.9 324.8h0.85v0.85h-0.85zM246.4 324.3h0.85v0.85h-0.85zM209.5 326.0h0.85v0.85h-0.85zM306.3 330.2h0.85v0.85h-0.85zM279.8 330.3h0.85v0.85h-0.85zM69.9 326.7h0.85v0.85h-0.85zM265.8 330.3h0.85v0.85h-0.85zM107.1 326.9h0.85v0.85h-0.85zM389.2 324.8h0.85v0.85h-0.85zM451.2 329.1h0.85v0.85h-0.85zM84.6 324.8h0.85v0.85h-0.85zM60.6 322.8h0.85v0.85h-0.85zM127.8 321.0h0.85v0.85h-0.85zM138.3 319.9h0.85v0.85h-0.85zM370.4 323.4h0.85v0.85h-0.85zM382.4 330.5h0.85v0.85h-0.85zM366.5 323.4h0.85v0.85h-0.85zM274.2 326.2h0.85v0.85h-0.85zM401.1 327.3h0.85v0.85h-0.85zM363.6 324.5h0.85v0.85h-0.85zM315.8 324.4h0.85v0.85h-0.85zM410.3 332.0h0.85v0.85h-0.85zM498.0 335.0h0.85v0.85h-0.85zM424.7 312.6h0.85v0.85h-0.85zM121.3 324.9h0.85v0.85h-0.85zM352.6 327.3h0.85v0.85h-0.85zM62.1 329.2h0.85v0.85h-0.85zM81.3 325.1h0.85v0.85h-0.85zM403.6 322.1h0.85v0.85h-0.85zM246.5 327.4h0.85v0.85h-0.85zM58.6 327.7h0.85v0.85h-0.85zM453.7 324.4h0.85v0.85h-0.85zM419.3 324.2h0.85v0.85h-0.85zM166.9 327.7h0.85v0.85h-0.85zM122.9 329.7h0.85v0.85h-0.85zM213.8 330.0h0.85v0.85h-0.85zM116.7 331.6h0.85v0.85h-0.85zM222.5 326.5h0.85v0.85h-0.85zM504.3 317.3h0.85v0.85h-0.85zM186.8 331.8h0.85v0.85h-0.85zM171.3 335.3h0.85v0.85h-0.85zM249.8 328.3h0.85v0.85h-0.85zM188.4 327.6h0.85v0.85h-0.85zM282.5 328.3h0.85v0.85h-0.85zM396.7 319.4h0.85v0.85h-0.85zM53.1 325.9h0.85v0.85h-0.85zM339.1 328.1h0.85v0.85h-0.85zM351.1 329.6h0.85v0.85h-0.85zM192.4 329.0h0.85v0.85h-0.85zM99.4 318.9h0.85v0.85h-0.85zM89.4 319.1h0.85v0.85h-0.85zM54.6 324.7h0.85v0.85h-0.85zM204.3 325.6h0.85v0.85h-0.85zM149.3 326.4h0.85v0.85h-0.85zM385.0 328.0h0.85v0.85h-0.85zM245.3 328.0h0.85v0.85h-0.85zM223.5 325.7h0.85v0.85h-0.85zM21.9 329.1h0.85v0.85h-0.85zM44.0 314.8h0.85v0.85h-0.85zM218.4 327.0h0.85v0.85h-0.85zM374.7 330.9h0.85v0.85h-0.85zM22.4 325.7h0.85v0.85h-0.85zM391.0 327.4h0.85v0.85h-0.85zM407.6 328.3h0.85v0.85h-0.85zM461.2 327.9h0.85v0.85h-0.85zM400.8 319.9h0.85v0.85h-0.85zM20.6 328.2h0.85v0.85h-0.85zM441.4 324.8h0.85v0.85h-0.85zM402.0 328.6h0.85v0.85h-0.85zM276.6 330.6h0.85v0.85h-0.85zM134.6 314.4h0.85v0.85h-0.85zM69.8 324.9h0.85v0.85h-0.85zM185.0 325.5h0.85v0.85h-0.85zM86.8 326.6h0.85v0.85h-0.85zM161.0 318.1h0.85v0.85h-0.85zM56.0 324.2h0.85v0.85h-0.85zM248.3 327.3h0.85v0.85h-0.85zM127.7 330.7h0.85v0.85h-0.85zM50.0 316.0h0.85v0.85h-0.85zM271.1 331.6h0.85v0.85h-0.85zM62.5 324.2h0.85v0.85h-0.85zM290.2 331.2h0.85v0.85h-0.85zM240.6 324.7h0.85v0.85h-0.85zM76.0 325.2h0.85v0.85h-0.85zM20.2 325.9h0.85v0.85h-0.85zM148.8 329.6h0.85v0.85h-0.85zM25.6 328.4h0.85v0.85h-0.85zM252.8 321.7h0.85v0.85h-0.85zM71.7 321.4h0.85v0.85h-0.85zM338.2 329.0h0.85v0.85h-0.85zM161.8 323.2h0.85v0.85h-0.85zM241.6 329.5h0.85v0.85h-0.85zM481.4 317.3h0.85v0.85h-0.85zM224.1 323.2h0.85v0.85h-0.85zM388.6 326.8h0.85v0.85h-0.85zM284.3 328.2h0.85v0.85h-0.85zM225.3 320.6h0.85v0.85h-0.85zM526.9 326.2h0.85v0.85h-0.85zM284.2 328.4h0.85v0.85h-0.85zM229.2 316.9h0.85v0.85h-0.85zM428.0 333.7h0.85v0.85h-0.85zM46.8 318.6h0.85v0.85h-0.85zM170.7 329.6h0.85v0.85h-0.85zM429.2 328.6h0.85v0.85h-0.85zM510.7 331.9h0.85v0.85h-0.85zM297.4 325.7h0.85v0.85h-0.85zM131.5 328.5h0.85v0.85h-0.85zM471.0 327.2h0.85v0.85h-0.85zM299.4 321.0h0.85v0.85h-0.85zM184.0 326.8h0.85v0.85h-0.85zM335.1 327.1h0.85v0.85h-0.85zM213.1 326.5h0.85v0.85h-0.85zM123.6 331.7h0.85v0.85h-0.85zM438.7 331.0h0.85v0.85h-0.85zM503.9 328.5h0.85v0.85h-0.85zM156.1 326.5h0.85v0.85h-0.85zM71.7 323.4h0.85v0.85h-0.85zM75.7 327.0h0.85v0.85h-0.85zM355.7 326.4h0.85v0.85h-0.85zM110.5 324.8h0.85v0.85h-0.85zM61.0 327.1h0.85v0.85h-0.85zM524.6 326.3h0.85v0.85h-0.85zM141.8 323.8h0.85v0.85h-0.85zM396.1 321.3h0.85v0.85h-0.85zM333.0 322.2h0.85v0.85h-0.85zM91.4 317.1h0.85v0.85h-0.85zM162.8 329.9h0.85v0.85h-0.85zM102.1 326.9h0.85v0.85h-0.85zM48.1 327.6h0.85v0.85h-0.85zM67.3 322.8h0.85v0.85h-0.85zM351.3 321.1h0.85v0.85h-0.85zM291.3 326.5h0.85v0.85h-0.85zM346.3 326.6h0.85v0.85h-0.85zM105.9 325.2h0.85v0.85h-0.85zM197.9 324.3h0.85v0.85h-0.85zM277.9 328.4h0.85v0.85h-0.85zM389.9 315.9h0.85v0.85h-0.85zM129.0 319.5h0.85v0.85h-0.85zM116.2 326.8h0.85v0.85h-0.85zM510.1 328.8h0.85v0.85h-0.85zM109.9 326.7h0.85v0.85h-0.85zM84.7 312.4h0.85v0.85h-0.85zM402.0 329.7h0.85v0.85h-0.85zM168.4 330.2h0.85v0.85h-0.85zM210.6 326.4h0.85v0.85h-0.85zM171.3 332.1h0.85v0.85h-0.85zM56.5 327.3h0.85v0.85h-0.85zM391.4 311.7h0.85v0.85h-0.85zM289.9 324.0h0.85v0.85h-0.85zM249.3 326.7h0.85v0.85h-0.85zM288.7 326.2h0.85v0.85h-0.85zM153.8 320.1h0.85v0.85h-0.85zM371.1 319.4h0.85v0.85h-0.85zM45.5 327.0h0.85v0.85h-0.85zM29.6 324.2h0.85v0.85h-0.85zM373.0 320.6h0.85v0.85h-0.85zM337.1 322.7h0.85v0.85h-0.85zM416.3 329.1h0.85v0.85h-0.85zM25.7 324.5h0.85v0.85h-0.85zM364.8 328.8h0.85v0.85h-0.85zM115.9 325.1h0.85v0.85h-0.85zM510.0 330.3h0.85v0.85h-0.85zM45.6 328.6h0.85v0.85h-0.85zM238.8 324.5h0.85v0.85h-0.85zM267.8 327.2h0.85v0.85h-0.85zM190.7 325.5h0.85v0.85h-0.85zM272.5 325.7h0.85v0.85h-0.85zM194.6 323.4h0.85v0.85h-0.85zM407.5 328.2h0.85v0.85h-0.85zM145.3 330.2h0.85v0.85h-0.85zM355.2 326.8h0.85v0.85h-0.85zM249.1 327.8h0.85v0.85h-0.85zM213.3 326.8h0.85v0.85h-0.85zM362.2 328.3h0.85v0.85h-0.85zM412.2 331.9h0.85v0.85h-0.85zM112.4 313.0h0.85v0.85h-0.85zM430.7 325.8h0.85v0.85h-0.85zM173.1 327.4h0.85v0.85h-0.85zM248.5 315.5h0.85v0.85h-0.85zM395.9 329.6h0.85v0.85h-0.85zM276.6 327.0h0.85v0.85h-0.85zM270.0 339.5h0.85v0.85h-0.85zM262.0 312.2h0.85v0.85h-0.85zM242.6 322.5h0.85v0.85h-0.85zM89.9 326.0h0.85v0.85h-0.85zM198.5 321.2h0.85v0.85h-0.85zM119.7 330.5h0.85v0.85h-0.85zM306.5 327.6h0.85v0.85h-0.85zM349.0 320.8h0.85v0.85h-0.85zM296.4 333.6h0.85v0.85h-0.85zM105.3 330.4h0.85v0.85h-0.85zM152.5 320.2h0.85v0.85h-0.85zM71.6 318.2h0.85v0.85h-0.85zM488.0 333.2h0.85v0.85h-0.85zM94.0 324.5h0.85v0.85h-0.85zM242.6 321.3h0.85v0.85h-0.85zM201.1 327.8h0.85v0.85h-0.85zM69.3 319.4h0.85v0.85h-0.85zM236.9 323.6h0.85v0.85h-0.85zM171.3 321.6h0.85v0.85h-0.85zM212.4 327.2h0.85v0.85h-0.85zM216.2 325.1h0.85v0.85h-0.85zM342.2 323.6h0.85v0.85h-0.85zM390.9 326.1h0.85v0.85h-0.85zM274.3 315.2h0.85v0.85h-0.85zM163.6 323.3h0.85v0.85h-0.85zM170.7 321.0h0.85v0.85h-0.85zM293.2 326.1h0.85v0.85h-0.85zM280.5 320.1h0.85v0.85h-0.85zM70.6 328.5h0.85v0.85h-0.85zM23.4 320.6h0.85v0.85h-0.85zM503.9 317.0h0.85v0.85h-0.85zM39.4 322.5h0.85v0.85h-0.85zM231.6 329.1h0.85v0.85h-0.85zM345.0 327.8h0.85v0.85h-0.85zM67.9 328.0h0.85v0.85h-0.85zM328.2 331.1h0.85v0.85h-0.85zM324.5 326.2h0.85v0.85h-0.85zM78.0 320.5h0.85v0.85h-0.85zM320.0 328.7h0.85v0.85h-0.85zM196.0 323.9h0.85v0.85h-0.85zM275.7 334.7h0.85v0.85h-0.85zM130.2 327.6h0.85v0.85h-0.85zM217.2 325.3h0.85v0.85h-0.85zM88.7 330.7h0.85v0.85h-0.85zM276.7 326.3h0.85v0.85h-0.85zM229.9 323.1h0.85v0.85h-0.85zM426.9 323.5h0.85v0.85h-0.85zM392.8 328.6h0.85v0.85h-0.85zM29.5 319.7h0.85v0.85h-0.85zM238.5 324.6h0.85v0.85h-0.85zM169.3 321.7h0.85v0.85h-0.85zM351.8 339.5h0.85v0.85h-0.85zM78.6 327.9h0.85v0.85h-0.85zM220.7 328.1h0.85v0.85h-0.85zM387.2 325.9h0.85v0.85h-0.85zM227.5 330.3h0.85v0.85h-0.85zM95.9 325.2h0.85v0.85h-0.85zM232.2 320.1h0.85v0.85h-0.85zM217.8 327.2h0.85v0.85h-0.85zM412.7 329.0h0.85v0.85h-0.85zM510.7 330.9h0.85v0.85h-0.85zM266.4 328.6h0.85v0.85h-0.85zM134.2 326.5h0.85v0.85h-0.85zM320.5 325.9h0.85v0.85h-0.85zM300.9 325.0h0.85v0.85h-0.85zM392.0 329.5h0.85v0.85h-0.85zM276.9 327.6h0.85v0.85h-0.85zM242.0 322.8h0.85v0.85h-0.85zM425.1 325.7h0.85v0.85h-0.85zM288.2 323.6h0.85v0.85h-0.85zM237.2 322.4h0.85v0.85h-0.85zM235.0 329.4h0.85v0.85h-0.85zM476.4 319.0h0.85v0.85h-0.85zM80.2 330.6h0.85v0.85h-0.85zM397.0 326.2h0.85v0.85h-0.85zM517.8 330.0h0.85v0.85h-0.85zM363.5 330.5h0.85v0.85h-0.85zM507.0 327.0h0.85v0.85h-0.85zM227.5 323.2h0.85v0.85h-0.85zM446.0 327.5h0.85v0.85h-0.85zM406.9 323.4h0.85v0.85h-0.85zM256.8 323.5h0.85v0.85h-0.85zM259.2 321.7h0.85v0.85h-0.85zM261.8 324.8h0.85v0.85h-0.85zM181.4 328.9h0.85v0.85h-0.85zM265.2 321.2h0.85v0.85h-0.85zM193.4 323.4h0.85v0.85h-0.85zM364.9 311.8h0.85v0.85h-0.85zM318.6 324.5h0.85v0.85h-0.85zM315.8 324.0h0.85v0.85h-0.85zM248.7 328.9h0.85v0.85h-0.85zM237.3 330.0h0.85v0.85h-0.85zM44.0 321.9h0.85v0.85h-0.85zM321.6 333.0h0.85v0.85h-0.85zM170.8 331.6h0.85v0.85h-0.85zM109.7 322.0h0.85v0.85h-0.85zM46.8 323.7h0.85v0.85h-0.85zM343.9 324.2h0.85v0.85h-0.85zM251.0 315.0h0.85v0.85h-0.85zM162.0 329.6h0.85v0.85h-0.85zM539.1 326.9h0.85v0.85h-0.85zM218.1 328.0h0.85v0.85h-0.85zM112.7 326.5h0.85v0.85h-0.85zM48.0 329.8h0.85v0.85h-0.85zM243.3 321.9h0.85v0.85h-0.85zM248.8 330.3h0.85v0.85h-0.85zM90.0 329.6h0.85v0.85h-0.85zM266.4 330.1h0.85v0.85h-0.85zM360.7 332.7h0.85v0.85h-0.85zM240.1 326.5h0.85v0.85h-0.85zM480.7 323.9h0.85v0.85h-0.85zM229.6 323.3h0.85v0.85h-0.85zM121.5 330.4h0.85v0.85h-0.85zM408.2 327.6h0.85v0.85h-0.85zM106.5 326.0h0.85v0.85h-0.85zM416.3 327.4h0.85v0.85h-0.85zM379.6 313.3h0.85v0.85h-0.85zM538.3 322.0h0.85v0.85h-0.85zM485.4 327.4h0.85v0.85h-0.85zM378.7 330.9h0.85v0.85h-0.85zM62.1 313.0h0.85v0.85h-0.85zM489.0 328.5h0.85v0.85h-0.85zM248.1 328.4h0.85v0.85h-0.85zM51.9 331.4h0.85v0.85h-0.85zM423.6 313.9h0.85v0.85h-0.85zM113.9 329.8h0.85v0.85h-0.85zM55.3 325.7h0.85v0.85h-0.85zM288.9 328.4h0.85v0.85h-0.85zM367.4 325.2h0.85v0.85h-0.85zM255.2 322.5h0.85v0.85h-0.85zM30.2 335.8h0.85v0.85h-0.85zM387.9 332.4h0.85v0.85h-0.85zM359.1 323.6h0.85v0.85h-0.85zM54.8 319.8h0.85v0.85h-0.85zM170.2 325.2h0.85v0.85h-0.85zM97.8 329.7h0.85v0.85h-0.85zM419.2 332.2h0.85v0.85h-0.85zM347.7 323.1h0.85v0.85h-0.85zM80.3 315.3h0.85v0.85h-0.85zM147.9 322.8h0.85v0.85h-0.85zM112.6 323.2h0.85v0.85h-0.85zM114.8 324.8h0.85v0.85h-0.85zM515.0 325.0h0.85v0.85h-0.85zM222.1 324.0h0.85v0.85h-0.85zM270.2 324.1h0.85v0.85h-0.85zM140.6 326.4h0.85v0.85h-0.85zM197.1 325.6h0.85v0.85h-0.85zM266.3 324.3h0.85v0.85h-0.85zM217.2 327.5h0.85v0.85h-0.85zM374.5 322.5h0.85v0.85h-0.85zM95.4 326.3h0.85v0.85h-0.85zM91.4 328.4h0.85v0.85h-0.85zM29.2 331.3h0.85v0.85h-0.85zM167.6 325.9h0.85v0.85h-0.85zM190.2 319.8h0.85v0.85h-0.85zM371.9 321.4h0.85v0.85h-0.85zM125.4 328.3h0.85v0.85h-0.85zM259.9 331.3h0.85v0.85h-0.85zM46.1 325.6h0.85v0.85h-0.85zM42.5 314.9h0.85v0.85h-0.85zM336.3 329.8h0.85v0.85h-0.85zM193.6 332.2h0.85v0.85h-0.85zM500.7 323.2h0.85v0.85h-0.85zM290.9 334.9h0.85v0.85h-0.85zM472.5 323.9h0.85v0.85h-0.85zM148.2 318.7h0.85v0.85h-0.85zM239.7 324.7h0.85v0.85h-0.85zM381.6 326.6h0.85v0.85h-0.85zM36.0 325.0h0.85v0.85h-0.85zM183.9 325.1h0.85v0.85h-0.85zM177.3 322.8h0.85v0.85h-0.85zM306.0 326.2h0.85v0.85h-0.85zM26.6 327.8h0.85v0.85h-0.85zM81.9 329.1h0.85v0.85h-0.85zM331.4 323.6h0.85v0.85h-0.85zM245.4 330.2h0.85v0.85h-0.85zM74.8 322.4h0.85v0.85h-0.85zM413.4 328.9h0.85v0.85h-0.85zM135.1 329.4h0.85v0.85h-0.85zM30.8 321.3h0.85v0.85h-0.85zM297.1 327.9h0.85v0.85h-0.85zM187.8 323.6h0.85v0.85h-0.85zM373.4 325.5h0.85v0.85h-0.85zM82.8 325.8h0.85v0.85h-0.85zM460.6 328.0h0.85v0.85h-0.85zM259.9 328.7h0.85v0.85h-0.85zM197.2 326.4h0.85v0.85h-0.85zM216.3 326.5h0.85v0.85h-0.85zM67.5 332.2h0.85v0.85h-0.85zM203.6 323.7h0.85v0.85h-0.85zM354.1 328.4h0.85v0.85h-0.85zM341.9 320.9h0.85v0.85h-0.85zM166.6 319.2h0.85v0.85h-0.85zM240.7 323.5h0.85v0.85h-0.85zM160.2 322.8h0.85v0.85h-0.85zM91.0 331.9h0.85v0.85h-0.85zM206.7 326.9h0.85v0.85h-0.85zM200.2 323.4h0.85v0.85h-0.85zM182.7 328.3h0.85v0.85h-0.85zM329.1 317.2h0.85v0.85h-0.85zM359.1 335.6h0.85v0.85h-0.85zM349.7 327.2h0.85v0.85h-0.85zM189.6 327.6h0.85v0.85h-0.85zM182.9 321.8h0.85v0.85h-0.85zM427.8 329.5h0.85v0.85h-0.85zM276.9 334.0h0.85v0.85h-0.85zM337.7 327.5h0.85v0.85h-0.85zM172.7 325.3h0.85v0.85h-0.85zM378.6 333.4h0.85v0.85h-0.85zM169.9 327.1h0.85v0.85h-0.85zM306.6 322.5h0.85v0.85h-0.85zM90.8 325.7h0.85v0.85h-0.85zM185.0 330.5h0.85v0.85h-0.85zM163.7 322.8h0.85v0.85h-0.85zM181.2 322.1h0.85v0.85h-0.85zM359.8 327.0h0.85v0.85h-0.85zM165.9 324.9h0.85v0.85h-0.85zM105.2 330.9h0.85v0.85h-0.85zM187.6 327.2h0.85v0.85h-0.85zM97.4 323.6h0.85v0.85h-0.85zM322.9 323.6h0.85v0.85h-0.85zM230.4 333.0h0.85v0.85h-0.85zM279.1 328.4h0.85v0.85h-0.85zM229.3 321.7h0.85v0.85h-0.85zM238.9 323.9h0.85v0.85h-0.85zM411.7 325.6h0.85v0.85h-0.85zM139.8 316.6h0.85v0.85h-0.85zM408.0 326.5h0.85v0.85h-0.85zM171.8 323.3h0.85v0.85h-0.85zM457.4 329.6h0.85v0.85h-0.85zM288.2 325.3h0.85v0.85h-0.85zM59.0 325.2h0.85v0.85h-0.85zM146.2 326.3h0.85v0.85h-0.85zM278.0 329.8h0.85v0.85h-0.85zM160.1 335.8h0.85v0.85h-0.85zM292.1 326.6h0.85v0.85h-0.85zM419.2 328.7h0.85v0.85h-0.85zM92.4 330.3h0.85v0.85h-0.85zM357.7 327.7h0.85v0.85h-0.85zM135.4 326.8h0.85v0.85h-0.85zM358.9 333.3h0.85v0.85h-0.85zM239.1 330.6h0.85v0.85h-0.85zM86.1 325.0h0.85v0.85h-0.85zM84.2 324.4h0.85v0.85h-0.85zM409.1 315.3h0.85v0.85h-0.85zM23.2 319.1h0.85v0.85h-0.85zM215.8 329.8h0.85v0.85h-0.85zM431.9 326.9h0.85v0.85h-0.85zM197.2 331.4h0.85v0.85h-0.85zM238.7 322.1h0.85v0.85h-0.85zM513.2 320.4h0.85v0.85h-0.85zM57.3 322.8h0.85v0.85h-0.85zM80.4 323.8h0.85v0.85h-0.85zM415.0 323.1h0.85v0.85h-0.85zM349.5 327.6h0.85v0.85h-0.85zM33.6 331.9h0.85v0.85h-0.85zM253.8 317.7h0.85v0.85h-0.85zM185.4 324.8h0.85v0.85h-0.85zM380.4 328.5h0.85v0.85h-0.85zM229.5 314.3h0.85v0.85h-0.85zM293.0 328.4h0.85v0.85h-0.85zM94.1 328.2h0.85v0.85h-0.85zM212.0 322.9h0.85v0.85h-0.85zM387.4 326.0h0.85v0.85h-0.85zM410.2 325.5h0.85v0.85h-0.85zM336.7 316.6h0.85v0.85h-0.85zM150.8 324.0h0.85v0.85h-0.85zM271.2 324.0h0.85v0.85h-0.85zM29.1 329.1h0.85v0.85h-0.85zM394.1 319.2h0.85v0.85h-0.85zM114.7 327.3h0.85v0.85h-0.85zM264.7 315.8h0.85v0.85h-0.85zM126.0 328.8h0.85v0.85h-0.85zM139.1 325.6h0.85v0.85h-0.85zM527.9 330.5h0.85v0.85h-0.85zM379.8 334.1h0.85v0.85h-0.85zM407.0 337.6h0.85v0.85h-0.85zM127.8 313.3h0.85v0.85h-0.85zM492.3 332.8h0.85v0.85h-0.85zM150.5 317.4h0.85v0.85h-0.85zM333.1 324.9h0.85v0.85h-0.85zM208.5 325.4h0.85v0.85h-0.85zM408.6 323.0h0.85v0.85h-0.85zM92.9 325.9h0.85v0.85h-0.85zM223.4 327.6h0.85v0.85h-0.85zM526.2 329.2h0.85v0.85h-0.85zM425.1 324.8h0.85v0.85h-0.85zM415.3 315.7h0.85v0.85h-0.85zM386.6 331.1h0.85v0.85h-0.85zM148.4 317.8h0.85v0.85h-0.85zM385.8 325.6h0.85v0.85h-0.85zM129.7 312.4h0.85v0.85h-0.85zM300.9 324.2h0.85v0.85h-0.85zM393.2 333.4h0.85v0.85h-0.85zM209.3 334.7h0.85v0.85h-0.85zM327.9 326.4h0.85v0.85h-0.85zM524.5 331.7h0.85v0.85h-0.85zM32.0 319.1h0.85v0.85h-0.85zM68.7 326.6h0.85v0.85h-0.85zM278.4 320.8h0.85v0.85h-0.85zM243.3 319.5h0.85v0.85h-0.85zM363.1 329.1h0.85v0.85h-0.85zM131.3 323.0h0.85v0.85h-0.85zM164.3 329.4h0.85v0.85h-0.85zM322.7 328.1h0.85v0.85h-0.85zM57.1 313.1h0.85v0.85h-0.85zM428.8 330.1h0.85v0.85h-0.85zM511.9 320.5h0.85v0.85h-0.85zM210.9 327.5h0.85v0.85h-0.85zM281.6 331.4h0.85v0.85h-0.85zM317.1 330.2h0.85v0.85h-0.85zM41.2 312.8h0.85v0.85h-0.85zM394.2 326.7h0.85v0.85h-0.85zM159.5 326.0h0.85v0.85h-0.85zM133.6 330.8h0.85v0.85h-0.85zM21.9 315.4h0.85v0.85h-0.85zM77.6 326.7h0.85v0.85h-0.85zM538.9 326.6h0.85v0.85h-0.85zM326.8 324.7h0.85v0.85h-0.85zM221.0 322.0h0.85v0.85h-0.85zM372.5 319.8h0.85v0.85h-0.85zM308.0 320.7h0.85v0.85h-0.85zM412.3 318.0h0.85v0.85h-0.85zM204.5 332.5h0.85v0.85h-0.85zM408.0 318.6h0.85v0.85h-0.85zM192.0 323.7h0.85v0.85h-0.85zM383.4 315.1h0.85v0.85h-0.85zM187.6 325.8h0.85v0.85h-0.85zM27.3 320.8h0.85v0.85h-0.85zM382.2 321.0h0.85v0.85h-0.85zM97.2 320.3h0.85v0.85h-0.85zM436.0 322.7h0.85v0.85h-0.85zM78.7 329.8h0.85v0.85h-0.85zM158.5 324.2h0.85v0.85h-0.85zM330.8 322.0h0.85v0.85h-0.85zM157.2 322.0h0.85v0.85h-0.85zM84.6 326.9h0.85v0.85h-0.85zM76.5 322.7h0.85v0.85h-0.85zM146.6 326.9h0.85v0.85h-0.85zM236.7 329.9h0.85v0.85h-0.85zM187.8 327.0h0.85v0.85h-0.85zM413.4 312.2h0.85v0.85h-0.85zM504.8 331.8h0.85v0.85h-0.85zM160.2 323.4h0.85v0.85h-0.85zM381.4 325.0h0.85v0.85h-0.85zM483.0 330.0h0.85v0.85h-0.85zM145.1 324.0h0.85v0.85h-0.85zM180.3 331.1h0.85v0.85h-0.85zM357.4 330.1h0.85v0.85h-0.85zM332.9 327.7h0.85v0.85h-0.85zM234.7 319.6h0.85v0.85h-0.85zM202.0 325.4h0.85v0.85h-0.85zM503.1 323.9h0.85v0.85h-0.85zM106.5 331.0h0.85v0.85h-0.85zM216.0 326.2h0.85v0.85h-0.85zM427.1 333.1h0.85v0.85h-0.85zM75.6 328.2h0.85v0.85h-0.85zM279.8 328.4h0.85v0.85h-0.85zM156.0 332.1h0.85v0.85h-0.85zM115.5 326.2h0.85v0.85h-0.85zM275.6 327.3h0.85v0.85h-0.85zM26.3 335.8h0.85v0.85h-0.85zM347.2 323.7h0.85v0.85h-0.85zM175.3 318.0h0.85v0.85h-0.85zM62.0 322.7h0.85v0.85h-0.85zM491.4 327.6h0.85v0.85h-0.85zM169.9 321.2h0.85v0.85h-0.85zM255.0 325.9h0.85v0.85h-0.85zM225.5 326.6h0.85v0.85h-0.85zM463.6 320.4h0.85v0.85h-0.85zM366.0 324.2h0.85v0.85h-0.85zM98.6 318.2h0.85v0.85h-0.85zM264.8 320.0h0.85v0.85h-0.85zM346.0 331.2h0.85v0.85h-0.85zM178.7 326.6h0.85v0.85h-0.85zM466.2 325.6h0.85v0.85h-0.85zM174.8 327.7h0.85v0.85h-0.85zM244.7 321.4h0.85v0.85h-0.85zM21.4 329.4h0.85v0.85h-0.85zM350.5 324.9h0.85v0.85h-0.85zM229.8 323.3h0.85v0.85h-0.85zM386.6 323.6h0.85v0.85h-0.85zM278.0 330.5h0.85v0.85h-0.85zM342.7 322.3h0.85v0.85h-0.85zM164.3 311.9h0.85v0.85h-0.85zM298.8 335.3h0.85v0.85h-0.85zM302.0 316.6h0.85v0.85h-0.85zM444.7 328.4h0.85v0.85h-0.85zM127.3 330.3h0.85v0.85h-0.85zM278.9 323.4h0.85v0.85h-0.85zM501.2 324.2h0.85v0.85h-0.85zM224.6 330.9h0.85v0.85h-0.85zM181.1 330.2h0.85v0.85h-0.85zM344.4 329.6h0.85v0.85h-0.85zM127.1 326.1h0.85v0.85h-0.85zM53.8 322.3h0.85v0.85h-0.85zM238.5 330.6h0.85v0.85h-0.85zM148.2 327.9h0.85v0.85h-0.85zM431.5 329.8h0.85v0.85h-0.85zM185.1 324.5h0.85v0.85h-0.85zM154.5 329.9h0.85v0.85h-0.85zM386.9 324.5h0.85v0.85h-0.85zM422.1 327.1h0.85v0.85h-0.85zM114.9 326.6h0.85v0.85h-0.85zM387.9 330.1h0.85v0.85h-0.85zM338.0 329.6h0.85v0.85h-0.85zM252.6 314.9h0.85v0.85h-0.85zM297.1 322.0h0.85v0.85h-0.85zM113.7 326.3h0.85v0.85h-0.85zM387.8 325.7h0.85v0.85h-0.85zM347.7 326.1h0.85v0.85h-0.85zM220.9 330.0h0.85v0.85h-0.85zM490.6 328.6h0.85v0.85h-0.85zM27.7 317.0h0.85v0.85h-0.85zM83.7 324.9h0.85v0.85h-0.85zM84.3 326.5h0.85v0.85h-0.85zM392.3 313.9h0.85v0.85h-0.85zM101.7 326.8h0.85v0.85h-0.85zM221.8 322.4h0.85v0.85h-0.85zM166.0 321.3h0.85v0.85h-0.85zM427.0 325.4h0.85v0.85h-0.85zM417.5 329.2h0.85v0.85h-0.85zM247.3 318.6h0.85v0.85h-0.85zM364.7 327.9h0.85v0.85h-0.85zM337.9 325.2h0.85v0.85h-0.85zM205.4 327.3h0.85v0.85h-0.85zM380.6 320.9h0.85v0.85h-0.85zM295.2 315.6h0.85v0.85h-0.85zM281.8 324.0h0.85v0.85h-0.85zM227.6 328.0h0.85v0.85h-0.85zM256.3 324.1h0.85v0.85h-0.85zM229.7 330.0h0.85v0.85h-0.85zM136.8 313.2h0.85v0.85h-0.85zM456.1 322.3h0.85v0.85h-0.85zM94.1 322.2h0.85v0.85h-0.85zM244.1 329.3h0.85v0.85h-0.85zM226.6 324.1h0.85v0.85h-0.85zM325.3 325.1h0.85v0.85h-0.85zM380.7 326.8h0.85v0.85h-0.85zM372.2 324.5h0.85v0.85h-0.85zM191.6 326.3h0.85v0.85h-0.85zM30.3 328.5h0.85v0.85h-0.85zM337.5 322.8h0.85v0.85h-0.85zM468.7 325.7h0.85v0.85h-0.85zM211.0 327.5h0.85v0.85h-0.85zM72.7 323.6h0.85v0.85h-0.85zM256.2 330.7h0.85v0.85h-0.85zM25.6 327.9h0.85v0.85h-0.85zM33.1 320.3h0.85v0.85h-0.85zM104.9 324.3h0.85v0.85h-0.85zM322.9 324.5h0.85v0.85h-0.85zM277.9 312.7h0.85v0.85h-0.85zM313.3 326.3h0.85v0.85h-0.85zM216.9 324.6h0.85v0.85h-0.85zM71.7 321.3h0.85v0.85h-0.85zM93.3 315.5h0.85v0.85h-0.85zM44.7 320.7h0.85v0.85h-0.85zM345.0 323.7h0.85v0.85h-0.85zM289.9 322.2h0.85v0.85h-0.85zM183.6 325.1h0.85v0.85h-0.85zM154.8 328.0h0.85v0.85h-0.85zM431.3 325.3h0.85v0.85h-0.85zM365.8 322.0h0.85v0.85h-0.85zM230.6 330.6h0.85v0.85h-0.85zM280.1 327.1h0.85v0.85h-0.85zM286.0 327.3h0.85v0.85h-0.85z" fill="#3c78c8" fill-opacity="0.38"/>
<path d="M399.5 338.3h0.85v0.85h-0.85zM297.4 334.5h0.85v0.85h-0.85zM505.4 333.7h0.85v0.85h-0.85zM462.0 336.1h0.85v0.85h-0.85zM266.9 319.8h0.85v0.85h-0.85zM292.5 335.4h0.85v0.85h-0.85zM152.2 332.2h0.85v0.85h-0.85zM91.2 325.3h0.85v0.85h-0.85zM151.6 338.2h0.85v0.85h-0.85zM274.5 322.0h0.85v0.85h-0.85zM24.4 325.0h0.85v0.85h-0.85zM368.7 330.2h0.85v0.85h-0.85zM95.7 336.9h0.85v0.85h-0.85zM290.6 326.3h0.85v0.85h-0.85zM233.9 333.7h0.85v0.85h-0.85zM179.5 334.1h0.85v0.85h-0.85zM355.8 333.4h0.85v0.85h-0.85zM122.3 333.5h0.85v0.85h-0.85zM165.4 338.3h0.85v0.85h-0.85zM376.1 338.0h0.85v0.85h-0.85zM392.1 336.7h0.85v0.85h-0.85zM424.0 335.1h0.85v0.85h-0.85zM288.2 331.8h0.85v0.85h-0.85zM107.3 314.6h0.85v0.85h-0.85zM316.1 313.4h0.85v0.85h-0.85zM89.6 335.6h0.85v0.85h-0.85zM58.5 333.5h0.85v0.85h-0.85zM309.5 337.6h0.85v0.85h-0.85zM213.3 333.7h0.85v0.85h-0.85zM180.3 333.6h0.85v0.85h-0.85zM387.3 337.2h0.85v0.85h-0.85zM276.7 322.0h0.85v0.85h-0.85zM458.8 321.7h0.85v0.85h-0.85zM411.3 333.3h0.85v0.85h-0.85zM103.4 324.9h0.85v0.85h-0.85zM180.4 327.3h0.85v0.85h-0.85zM278.5 332.4h0.85v0.85h-0.85zM109.1 327.5h0.85v0.85h-0.85zM332.2 334.6h0.85v0.85h-0.85zM316.3 314.0h0.85v0.85h-0.85zM281.9 332.7h0.85v0.85h-0.85zM176.2 333.5h0.85v0.85h-0.85zM209.6 337.9h0.85v0.85h-0.85zM176.6 318.7h0.85v0.85h-0.85zM186.3 338.0h0.85v0.85h-0.85zM227.7 333.6h0.85v0.85h-0.85zM89.5 315.8h0.85v0.85h-0.85zM71.4 334.4h0.85v0.85h-0.85zM537.1 322.9h0.85v0.85h-0.85zM91.8 318.8h0.85v0.85h-0.85zM405.8 328.5h0.85v0.85h-0.85zM152.5 336.2h0.85v0.85h-0.85zM80.3 337.5h0.85v0.85h-0.85zM131.7 319.8h0.85v0.85h-0.85zM25.4 327.3h0.85v0.85h-0.85zM166.1 336.7h0.85v0.85h-0.85zM64.0 313.4h0.85v0.85h-0.85zM204.6 335.8h0.85v0.85h-0.85zM28.9 313.5h0.85v0.85h-0.85zM285.4 329.3h0.85v0.85h-0.85zM324.3 332.0h0.85v0.85h-0.85zM368.0 335.7h0.85v0.85h-0.85zM357.5 334.8h0.85v0.85h-0.85zM308.4 324.5h0.85v0.85h-0.85zM66.2 332.1h0.85v0.85h-0.85zM126.5 332.8h0.85v0.85h-0.85zM501.2 333.0h0.85v0.85h-0.85zM321.0 323.2h0.85v0.85h-0.85zM202.5 322.0h0.85v0.85h-0.85zM241.6 337.2h0.85v0.85h-0.85zM404.0 322.4h0.85v0.85h-0.85zM506.1 332.1h0.85v0.85h-0.85zM243.5 332.1h0.85v0.85h-0.85zM50.0 334.6h0.85v0.85h-0.85zM36.9 325.3h0.85v0.85h-0.85zM182.8 335.7h0.85v0.85h-0.85zM420.1 334.3h0.85v0.85h-0.85zM70.0 315.2h0.85v0.85h-0.85zM493.9 337.8h0.85v0.85h-0.85zM228.1 333.8h0.85v0.85h-0.85zM192.3 335.6h0.85v0.85h-0.85zM267.5 317.1h0.85v0.85h-0.85zM282.9 324.0h0.85v0.85h-0.85zM163.4 335.7h0.85v0.85h-0.85zM163.2 332.5h0.85v0.85h-0.85zM347.4 329.9h0.85v0.85h-0.85zM212.8 334.7h0.85v0.85h-0.85zM164.6 324.8h0.85v0.85h-0.85zM48.8 337.4h0.85v0.85h-0.85zM97.8 334.3h0.85v0.85h-0.85zM149.3 331.4h0.85v0.85h-0.85zM60.1 320.0h0.85v0.85h-0.85zM55.9 338.4h0.85v0.85h-0.85zM68.6 331.9h0.85v0.85h-0.85zM393.0 333.2h0.85v0.85h-0.85zM149.6 338.1h0.85v0.85h-0.85zM166.5 327.2h0.85v0.85h-0.85zM93.3 333.1h0.85v0.85h-0.85zM25.9 335.5h0.85v0.85h-0.85zM206.0 337.3h0.85v0.85h-0.85zM73.7 333.6h0.85v0.85h-0.85zM313.9 338.1h0.85v0.85h-0.85zM167.1 326.5h0.85v0.85h-0.85zM172.7 335.9h0.85v0.85h-0.85zM440.6 319.6h0.85v0.85h-0.85zM206.5 335.0h0.85v0.85h-0.85zM50.2 336.4h0.85v0.85h-0.85zM269.0 332.3h0.85v0.85h-0.85zM279.9 333.5h0.85v0.85h-0.85zM336.4 321.8h0.85v0.85h-0.85zM431.9 336.2h0.85v0.85h-0.85zM141.4 335.9h0.85v0.85h-0.85zM183.6 334.7h0.85v0.85h-0.85zM243.8 323.9h0.85v0.85h-0.85zM217.6 332.0h0.85v0.85h-0.85zM337.7 333.8h0.85v0.85h-0.85zM532.5 314.5h0.85v0.85h-0.85zM84.5 338.4h0.85v0.85h-0.85zM147.0 317.9h0.85v0.85h-0.85zM363.1 335.2h0.85v0.85h-0.85zM198.8 326.7h0.85v0.85h-0.85zM199.6 318.6h0.85v0.85h-0.85zM166.7 337.8h0.85v0.85h-0.85zM210.7 332.6h0.85v0.85h-0.85zM513.3 335.4h0.85v0.85h-0.85zM38.8 337.8h0.85v0.85h-0.85zM394.1 336.8h0.85v0.85h-0.85zM188.5 338.1h0.85v0.85h-0.85zM348.6 325.2h0.85v0.85h-0.85zM67.4 333.1h0.85v0.85h-0.85zM192.8 335.3h0.85v0.85h-0.85zM356.2 326.9h0.85v0.85h-0.85zM128.5 333.9h0.85v0.85h-0.85zM493.0 332.9h0.85v0.85h-0.85zM319.0 335.4h0.85v0.85h-0.85zM181.3 326.8h0.85v0.85h-0.85zM363.9 330.2h0.85v0.85h-0.85zM303.5 334.8h0.85v0.85h-0.85zM75.4 333.6h0.85v0.85h-0.85zM203.7 315.2h0.85v0.85h-0.85zM322.7 336.1h0.85v0.85h-0.85zM220.9 333.8h0.85v0.85h-0.85zM332.1 331.8h0.85v0.85h-0.85zM324.2 334.4h0.85v0.85h-0.85zM240.5 337.8h0.85v0.85h-0.85zM72.7 334.2h0.85v0.85h-0.85zM137.3 327.6h0.85v0.85h-0.85zM256.1 331.7h0.85v0.85h-0.85zM266.3 336.4h0.85v0.85h-0.85zM445.0 331.8h0.85v0.85h-0.85zM117.9 313.9h0.85v0.85h-0.85zM370.6 318.0h0.85v0.85h-0.85zM275.9 334.2h0.85v0.85h-0.85zM42.0 335.0h0.85v0.85h-0.85zM244.7 333.7h0.85v0.85h-0.85zM94.7 336.6h0.85v0.85h-0.85zM329.1 334.9h0.85v0.85h-0.85zM213.4 337.5h0.85v0.85h-0.85zM138.8 338.4h0.85v0.85h-0.85zM193.7 338.1h0.85v0.85h-0.85zM32.0 333.4h0.85v0.85h-0.85zM325.2 324.1h0.85v0.85h-0.85zM101.7 323.8h0.85v0.85h-0.85zM117.8 335.8h0.85v0.85h-0.85zM137.4 337.1h0.85v0.85h-0.85zM217.8 327.9h0.85v0.85h-0.85zM123.9 320.1h0.85v0.85h-0.85zM273.1 336.2h0.85v0.85h-0.85zM447.2 336.7h0.85v0.85h-0.85zM173.1 332.2h0.85v0.85h-0.85zM305.8 318.3h0.85v0.85h-0.85zM362.1 335.5h0.85v0.85h-0.85zM375.6 338.1h0.85v0.85h-0.85zM233.8 334.2h0.85v0.85h-0.85zM216.8 329.2h0.85v0.85h-0.85zM58.2 317.1h0.85v0.85h-0.85zM333.5 325.5h0.85v0.85h-0.85zM174.7 333.6h0.85v0.85h-0.85zM101.2 333.1h0.85v0.85h-0.85zM51.1 325.9h0.85v0.85h-0.85zM390.2 337.0h0.85v0.85h-0.85zM261.4 337.1h0.85v0.85h-0.85zM288.8 327.9h0.85v0.85h-0.85zM366.1 337.9h0.85v0.85h-0.85zM202.9 317.7h0.85v0.85h-0.85zM273.2 332.4h0.85v0.85h-0.85zM266.8 323.5h0.85v0.85h-0.85zM396.8 322.4h0.85v0.85h-0.85zM359.4 331.5h0.85v0.85h-0.85zM75.2 332.6h0.85v0.85h-0.85zM288.6 320.2h0.85v0.85h-0.85zM187.3 324.1h0.85v0.85h-0.85zM181.6 325.7h0.85v0.85h-0.85zM329.8 319.6h0.85v0.85h-0.85zM131.6 334.5h0.85v0.85h-0.85zM170.2 319.0h0.85v0.85h-0.85zM260.8 337.8h0.85v0.85h-0.85zM202.4 334.1h0.85v0.85h-0.85zM424.3 331.4h0.85v0.85h-0.85zM392.1 327.9h0.85v0.85h-0.85zM241.2 335.1h0.85v0.85h-0.85zM365.7 334.8h0.85v0.85h-0.85zM97.4 337.7h0.85v0.85h-0.85zM105.7 322.9h0.85v0.85h-0.85zM361.2 337.4h0.85v0.85h-0.85zM258.8 318.0h0.85v0.85h-0.85zM483.7 331.9h0.85v0.85h-0.85zM80.8 317.4h0.85v0.85h-0.85zM218.0 331.7h0.85v0.85h-0.85zM133.1 333.9h0.85v0.85h-0.85zM523.2 318.4h0.85v0.85h-0.85zM350.0 332.5h0.85v0.85h-0.85zM200.8 314.1h0.85v0.85h-0.85zM277.2 338.4h0.85v0.85h-0.85zM201.3 325.7h0.85v0.85h-0.85zM310.7 334.9h0.85v0.85h-0.85zM346.9 333.2h0.85v0.85h-0.85zM376.6 336.7h0.85v0.85h-0.85zM103.7 332.7h0.85v0.85h-0.85zM397.6 319.4h0.85v0.85h-0.85zM163.1 333.7h0.85v0.85h-0.85zM109.6 335.8h0.85v0.85h-0.85zM291.1 333.5h0.85v0.85h-0.85zM271.2 314.3h0.85v0.85h-0.85zM29.6 337.6h0.85v0.85h-0.85zM362.8 334.1h0.85v0.85h-0.85zM152.6 331.6h0.85v0.85h-0.85zM200.7 318.5h0.85v0.85h-0.85zM24.7 329.6h0.85v0.85h-0.85zM25.4 335.4h0.85v0.85h-0.85zM252.5 333.0h0.85v0.85h-0.85zM358.9 336.8h0.85v0.85h-0.85zM86.5 322.2h0.85v0.85h-0.85zM61.1 337.2h0.85v0.85h-0.85zM124.4 338.2h0.85v0.85h-0.85zM125.8 327.7h0.85v0.85h-0.85zM135.6 338.2h0.85v0.85h-0.85zM215.0 335.2h0.85v0.85h-0.85zM38.2 314.0h0.85v0.85h-0.85zM242.6 335.8h0.85v0.85h-0.85zM215.0 337.9h0.85v0.85h-0.85zM231.9 332.2h0.85v0.85h-0.85zM111.0 333.4h0.85v0.85h-0.85zM125.9 330.8h0.85v0.85h-0.85zM311.3 335.2h0.85v0.85h-0.85zM256.7 335.5h0.85v0.85h-0.85zM220.3 337.7h0.85v0.85h-0.85zM49.1 337.7h0.85v0.85h-0.85zM47.3 336.1h0.85v0.85h-0.85zM352.5 321.2h0.85v0.85h-0.85zM138.3 333.9h0.85v0.85h-0.85zM188.3 313.1h0.85v0.85h-0.85zM415.2 315.4h0.85v0.85h-0.85zM246.6 332.7h0.85v0.85h-0.85zM244.7 335.4h0.85v0.85h-0.85zM114.3 333.1h0.85v0.85h-0.85zM98.3 336.5h0.85v0.85h-0.85zM80.9 337.4h0.85v0.85h-0.85zM47.8 335.0h0.85v0.85h-0.85zM78.6 332.2h0.85v0.85h-0.85zM251.3 331.7h0.85v0.85h-0.85zM337.3 338.0h0.85v0.85h-0.85zM268.2 335.4h0.85v0.85h-0.85zM70.3 323.9h0.85v0.85h-0.85zM415.5 331.6h0.85v0.85h-0.85zM357.0 323.8h0.85v0.85h-0.85zM154.5 335.3h0.85v0.85h-0.85zM146.3 325.6h0.85v0.85h-0.85zM373.1 331.8h0.85v0.85h-0.85zM338.4 321.9h0.85v0.85h-0.85zM169.1 317.6h0.85v0.85h-0.85zM270.6 337.4h0.85v0.85h-0.85zM415.0 315.7h0.85v0.85h-0.85zM463.0 337.0h0.85v0.85h-0.85zM133.0 320.6h0.85v0.85h-0.85zM203.7 337.3h0.85v0.85h-0.85zM151.6 335.6h0.85v0.85h-0.85zM537.2 333.9h0.85v0.85h-0.85zM50.8 332.6h0.85v0.85h-0.85zM98.2 313.5h0.85v0.85h-0.85zM45.0 327.2h0.85v0.85h-0.85zM185.6 332.7h0.85v0.85h-0.85zM203.1 332.8h0.85v0.85h-0.85zM264.2 334.1h0.85v0.85h-0.85zM111.4 321.6h0.85v0.85h-0.85zM307.2 332.7h0.85v0.85h-0.85zM160.4 329.6h0.85v0.85h-0.85zM486.0 331.6h0.85v0.85h-0.85zM362.3 322.5h0.85v0.85h-0.85zM325.5 318.9h0.85v0.85h-0.85zM46.3 321.9h0.85v0.85h-0.85zM52.8 336.9h0.85v0.85h-0.85zM24.9 333.7h0.85v0.85h-0.85zM453.8 335.8h0.85v0.85h-0.85zM346.1 332.6h0.85v0.85h-0.85zM144.7 334.7h0.85v0.85h-0.85zM34.8 321.9h0.85v0.85h-0.85zM412.5 320.1h0.85v0.85h-0.85zM184.2 325.1h0.85v0.85h-0.85zM83.7 326.8h0.85v0.85h-0.85zM200.8 324.7h0.85v0.85h-0.85zM208.1 337.3h0.85v0.85h-0.85zM117.9 332.3h0.85v0.85h-0.85zM518.1 330.4h0.85v0.85h-0.85zM208.7 332.6h0.85v0.85h-0.85zM352.9 336.6h0.85v0.85h-0.85zM66.5 333.9h0.85v0.85h-0.85zM65.7 337.6h0.85v0.85h-0.85zM92.0 336.0h0.85v0.85h-0.85zM395.3 333.0h0.85v0.85h-0.85zM79.8 333.7h0.85v0.85h-0.85zM405.8 313.2h0.85v0.85h-0.85zM208.7 316.7h0.85v0.85h-0.85zM352.7 313.7h0.85v0.85h-0.85zM229.3 338.2h0.85v0.85h-0.85zM36.6 333.8h0.85v0.85h-0.85zM255.7 334.7h0.85v0.85h-0.85zM204.3 336.2h0.85v0.85h-0.85zM379.1 321.5h0.85v0.85h-0.85zM97.6 332.2h0.85v0.85h-0.85zM24.8 329.5h0.85v0.85h-0.85zM91.8 322.6h0.85v0.85h-0.85zM272.8 316.3h0.85v0.85h-0.85zM383.6 336.3h0.85v0.85h-0.85zM73.6 335.9h0.85v0.85h-0.85zM488.1 326.9h0.85v0.85h-0.85zM213.9 338.2h0.85v0.85h-0.85zM397.8 337.1h0.85v0.85h-0.85zM190.9 323.4h0.85v0.85h-0.85zM513.2 333.6h0.85v0.85h-0.85zM317.5 330.4h0.85v0.85h-0.85zM114.8 316.8h0.85v0.85h-0.85zM306.5 332.3h0.85v0.85h-0.85zM133.9 331.2h0.85v0.85h-0.85zM250.9 325.0h0.85v0.85h-0.85zM91.8 335.9h0.85v0.85h-0.85zM136.9 315.5h0.85v0.85h-0.85zM522.8 331.8h0.85v0.85h-0.85zM413.0 336.5h0.85v0.85h-0.85zM116.4 334.2h0.85v0.85h-0.85zM311.9 324.2h0.85v0.85h-0.85zM130.6 335.8h0.85v0.85h-0.85zM403.5 338.3h0.85v0.85h-0.85zM99.7 330.2h0.85v0.85h-0.85zM134.7 314.9h0.85v0.85h-0.85zM54.6 314.7h0.85v0.85h-0.85zM362.5 333.6h0.85v0.85h-0.85zM116.8 333.0h0.85v0.85h-0.85zM89.5 336.7h0.85v0.85h-0.85zM304.7 334.0h0.85v0.85h-0.85zM149.8 329.9h0.85v0.85h-0.85zM279.3 335.3h0.85v0.85h-0.85zM66.7 337.0h0.85v0.85h-0.85zM36.4 331.6h0.85v0.85h-0.85zM430.8 331.6h0.85v0.85h-0.85zM347.2 337.0h0.85v0.85h-0.85zM118.9 336.8h0.85v0.85h-0.85zM241.2 338.2h0.85v0.85h-0.85zM130.0 334.0h0.85v0.85h-0.85zM277.5 332.9h0.85v0.85h-0.85zM196.6 331.9h0.85v0.85h-0.85zM368.3 321.3h0.85v0.85h-0.85zM92.1 336.1h0.85v0.85h-0.85zM54.9 336.2h0.85v0.85h-0.85zM188.6 338.4h0.85v0.85h-0.85zM270.8 335.2h0.85v0.85h-0.85zM73.2 330.7h0.85v0.85h-0.85zM140.3 336.9h0.85v0.85h-0.85zM306.9 325.8h0.85v0.85h-0.85zM196.1 335.1h0.85v0.85h-0.85zM216.5 318.1h0.85v0.85h-0.85zM150.1 333.3h0.85v0.85h-0.85zM254.1 336.8h0.85v0.85h-0.85zM276.5 326.3h0.85v0.85h-0.85zM403.0 317.6h0.85v0.85h-0.85zM351.3 314.1h0.85v0.85h-0.85zM233.8 314.7h0.85v0.85h-0.85zM79.6 337.9h0.85v0.85h-0.85zM226.7 332.7h0.85v0.85h-0.85zM373.3 316.7h0.85v0.85h-0.85zM315.5 338.2h0.85v0.85h-0.85zM79.8 331.7h0.85v0.85h-0.85zM136.7 337.2h0.85v0.85h-0.85zM184.3 336.0h0.85v0.85h-0.85zM107.7 337.0h0.85v0.85h-0.85zM347.0 331.5h0.85v0.85h-0.85zM192.9 322.6h0.85v0.85h-0.85zM214.8 334.9h0.85v0.85h-0.85zM55.1 324.5h0.85v0.85h-0.85zM226.9 326.7h0.85v0.85h-0.85zM416.0 330.2h0.85v0.85h-0.85zM539.2 325.5h0.85v0.85h-0.85zM296.6 332.4h0.85v0.85h-0.85zM88.3 332.5h0.85v0.85h-0.85zM162.4 313.1h0.85v0.85h-0.85zM219.6 337.0h0.85v0.85h-0.85zM143.1 318.3h0.85v0.85h-0.85zM259.5 337.9h0.85v0.85h-0.85zM166.8 328.7h0.85v0.85h-0.85zM60.0 333.8h0.85v0.85h-0.85zM152.8 334.6h0.85v0.85h-0.85zM263.5 333.7h0.85v0.85h-0.85zM368.8 336.5h0.85v0.85h-0.85zM192.8 337.3h0.85v0.85h-0.85zM164.5 338.4h0.85v0.85h-0.85zM239.1 327.7h0.85v0.85h-0.85zM98.4 336.5h0.85v0.85h-0.85zM168.1 330.2h0.85v0.85h-0.85zM341.9 335.2h0.85v0.85h-0.85zM270.5 332.5h0.85v0.85h-0.85zM386.7 337.1h0.85v0.85h-0.85zM394.6 337.8h0.85v0.85h-0.85zM103.7 337.2h0.85v0.85h-0.85zM100.6 335.4h0.85v0.85h-0.85zM143.4 335.3h0.85v0.85h-0.85zM385.9 320.4h0.85v0.85h-0.85zM437.7 319.5h0.85v0.85h-0.85zM369.8 335.0h0.85v0.85h-0.85zM121.3 319.7h0.85v0.85h-0.85zM98.5 313.2h0.85v0.85h-0.85zM292.8 332.3h0.85v0.85h-0.85zM199.0 335.1h0.85v0.85h-0.85zM148.5 333.2h0.85v0.85h-0.85zM400.7 335.5h0.85v0.85h-0.85zM87.7 337.4h0.85v0.85h-0.85zM375.1 332.0h0.85v0.85h-0.85zM396.5 334.4h0.85v0.85h-0.85zM379.2 336.0h0.85v0.85h-0.85zM150.5 337.7h0.85v0.85h-0.85zM39.1 336.0h0.85v0.85h-0.85zM340.4 333.1h0.85v0.85h-0.85zM112.5 318.2h0.85v0.85h-0.85zM189.2 337.8h0.85v0.85h-0.85zM531.3 331.7h0.85v0.85h-0.85zM390.8 337.1h0.85v0.85h-0.85zM379.1 328.4h0.85v0.85h-0.85zM48.5 331.6h0.85v0.85h-0.85zM335.2 331.3h0.85v0.85h-0.85zM67.1 314.4h0.85v0.85h-0.85zM57.7 330.3h0.85v0.85h-0.85zM399.2 325.1h0.85v0.85h-0.85zM163.0 319.4h0.85v0.85h-0.85zM316.8 333.2h0.85v0.85h-0.85zM201.0 337.6h0.85v0.85h-0.85zM121.7 336.8h0.85v0.85h-0.85zM99.9 338.1h0.85v0.85h-0.85zM275.3 333.7h0.85v0.85h-0.85zM434.9 331.8h0.85v0.85h-0.85zM59.5 337.2h0.85v0.85h-0.85zM417.7 332.5h0.85v0.85h-0.85zM53.2 334.1h0.85v0.85h-0.85zM277.4 329.5h0.85v0.85h-0.85zM219.9 337.1h0.85v0.85h-0.85zM163.5 336.1h0.85v0.85h-0.85zM286.9 337.7h0.85v0.85h-0.85zM345.1 316.3h0.85v0.85h-0.85zM246.6 334.2h0.85v0.85h-0.85zM36.7 336.1h0.85v0.85h-0.85zM176.1 329.7h0.85v0.85h-0.85zM286.1 333.9h0.85v0.85h-0.85zM370.6 334.8h0.85v0.85h-0.85zM161.6 324.9h0.85v0.85h-0.85zM33.1 336.6h0.85v0.85h-0.85zM102.4 332.3h0.85v0.85h-0.85zM427.6 326.9h0.85v0.85h-0.85zM206.1 330.1h0.85v0.85h-0.85zM202.5 337.9h0.85v0.85h-0.85zM222.9 337.4h0.85v0.85h-0.85zM449.0 319.9h0.85v0.85h-0.85zM57.5 334.4h0.85v0.85h-0.85zM194.1 334.0h0.85v0.85h-0.85zM285.7 332.9h0.85v0.85h-0.85zM64.2 333.1h0.85v0.85h-0.85zM312.0 337.0h0.85v0.85h-0.85zM313.4 331.5h0.85v0.85h-0.85zM111.0 329.0h0.85v0.85h-0.85zM531.9 332.9h0.85v0.85h-0.85zM78.1 334.4h0.85v0.85h-0.85zM159.0 335.6h0.85v0.85h-0.85zM101.0 337.2h0.85v0.85h-0.85zM62.7 333.9h0.85v0.85h-0.85zM99.5 333.6h0.85v0.85h-0.85zM405.5 331.4h0.85v0.85h-0.85zM342.4 336.1h0.85v0.85h-0.85zM84.4 333.4h0.85v0.85h-0.85zM134.5 334.7h0.85v0.85h-0.85zM123.6 337.6h0.85v0.85h-0.85zM211.1 335.7h0.85v0.85h-0.85zM31.7 329.8h0.85v0.85h-0.85zM389.3 317.6h0.85v0.85h-0.85zM301.4 336.1h0.85v0.85h-0.85zM148.0 319.5h0.85v0.85h-0.85zM394.4 321.2h0.85v0.85h-0.85zM156.0 335.7h0.85v0.85h-0.85zM170.1 336.0h0.85v0.85h-0.85zM463.2 334.9h0.85v0.85h-0.85zM353.3 336.1h0.85v0.85h-0.85zM263.0 334.0h0.85v0.85h-0.85zM232.4 337.4h0.85v0.85h-0.85zM180.0 338.1h0.85v0.85h-0.85zM391.4 319.2h0.85v0.85h-0.85zM160.2 322.5h0.85v0.85h-0.85zM71.5 316.3h0.85v0.85h-0.85zM378.6 325.9h0.85v0.85h-0.85zM416.9 333.9h0.85v0.85h-0.85zM101.9 322.8h0.85v0.85h-0.85zM217.4 313.6h0.85v0.85h-0.85zM139.3 337.9h0.85v0.85h-0.85zM318.9 333.5h0.85v0.85h-0.85zM275.5 334.3h0.85v0.85h-0.85zM510.5 334.4h0.85v0.85h-0.85zM255.7 320.6h0.85v0.85h-0.85zM254.3 332.6h0.85v0.85h-0.85zM109.8 333.5h0.85v0.85h-0.85zM49.5 324.6h0.85v0.85h-0.85zM103.1 333.1h0.85v0.85h-0.85zM103.3 334.1h0.85v0.85h-0.85zM131.9 335.3h0.85v0.85h-0.85zM70.5 334.1h0.85v0.85h-0.85zM287.4 322.7h0.85v0.85h-0.85zM251.2 337.8h0.85v0.85h-0.85zM67.7 333.6h0.85v0.85h-0.85zM207.5 317.0h0.85v0.85h-0.85zM450.9 335.3h0.85v0.85h-0.85zM23.8 318.4h0.85v0.85h-0.85zM252.3 325.0h0.85v0.85h-0.85zM102.2 336.9h0.85v0.85h-0.85zM307.0 336.9h0.85v0.85h-0.85zM376.4 317.9h0.85v0.85h-0.85zM327.1 335.6h0.85v0.85h-0.85zM164.4 313.7h0.85v0.85h-0.85zM292.2 337.0h0.85v0.85h-0.85zM476.8 334.9h0.85v0.85h-0.85zM413.9 336.4h0.85v0.85h-0.85zM487.0 319.9h0.85v0.85h-0.85zM178.2 337.3h0.85v0.85h-0.85zM356.3 335.5h0.85v0.85h-0.85zM484.0 337.9h0.85v0.85h-0.85zM326.3 329.4h0.85v0.85h-0.85zM380.3 319.2h0.85v0.85h-0.85zM40.7 333.4h0.85v0.85h-0.85zM317.7 336.0h0.85v0.85h-0.85zM68.8 334.7h0.85v0.85h-0.85zM385.2 314.7h0.85v0.85h-0.85zM362.1 336.8h0.85v0.85h-0.85zM76.8 337.5h0.85v0.85h-0.85zM392.2 332.7h0.85v0.85h-0.85zM98.9 315.6h0.85v0.85h-0.85zM144.2 325.6h0.85v0.85h-0.85zM337.0 334.5h0.85v0.85h-0.85zM199.7 337.4h0.85v0.85h-0.85zM101.0 324.5h0.85v0.85h-0.85zM226.3 322.3h0.85v0.85h-0.85zM350.5 334.2h0.85v0.85h-0.85zM330.4 324.6h0.85v0.85h-0.85zM63.2 333.6h0.85v0.85h-0.85zM275.2 336.9h0.85v0.85h-0.85zM210.9 333.6h0.85v0.85h-0.85zM420.5 337.0h0.85v0.85h-0.85zM147.6 337.2h0.85v0.85h-0.85zM37.1 314.9h0.85v0.85h-0.85zM47.1 337.3h0.85v0.85h-0.85zM466.0 329.9h0.85v0.85h-0.85zM277.5 338.3h0.85v0.85h-0.85zM342.3 335.6h0.85v0.85h-0.85zM238.4 329.2h0.85v0.85h-0.85zM333.1 337.3h0.85v0.85h-0.85zM259.5 333.3h0.85v0.85h-0.85zM292.5 332.4h0.85v0.85h-0.85zM423.9 336.8h0.85v0.85h-0.85zM198.1 312.9h0.85v0.85h-0.85zM223.3 331.4h0.85v0.85h-0.85zM246.3 337.6h0.85v0.85h-0.85zM192.9 335.4h0.85v0.85h-0.85zM143.7 337.3h0.85v0.85h-0.85zM167.9 318.7h0.85v0.85h-0.85zM339.4 331.7h0.85v0.85h-0.85zM100.6 331.2h0.85v0.85h-0.85zM49.9 337.0h0.85v0.85h-0.85zM246.7 315.9h0.85v0.85h-0.85zM510.4 337.9h0.85v0.85h-0.85zM284.1 337.2h0.85v0.85h-0.85zM381.1 322.5h0.85v0.85h-0.85zM118.9 323.3h0.85v0.85h-0.85zM408.8 338.3h0.85v0.85h-0.85zM25.8 316.8h0.85v0.85h-0.85zM376.1 333.4h0.85v0.85h-0.85zM126.5 336.0h0.85v0.85h-0.85zM54.8 332.8h0.85v0.85h-0.85zM30.5 336.7h0.85v0.85h-0.85zM185.4 332.2h0.85v0.85h-0.85zM407.2 326.3h0.85v0.85h-0.85zM75.7 332.2h0.85v0.85h-0.85zM273.1 333.8h0.85v0.85h-0.85zM217.0 337.0h0.85v0.85h-0.85zM117.9 333.9h0.85v0.85h-0.85zM243.5 333.7h0.85v0.85h-0.85zM303.9 334.6h0.85v0.85h-0.85zM70.7 336.7h0.85v0.85h-0.85zM104.7 336.6h0.85v0.85h-0.85zM167.8 336.3h0.85v0.85h-0.85zM355.7 334.5h0.85v0.85h-0.85zM472.9 321.9h0.85v0.85h-0.85zM98.9 326.5h0.85v0.85h-0.85zM481.2 334.4h0.85v0.85h-0.85zM32.1 334.4h0.85v0.85h-0.85zM394.1 335.5h0.85v0.85h-0.85zM31.1 317.8h0.85v0.85h-0.85zM404.7 333.6h0.85v0.85h-0.85zM190.0 337.9h0.85v0.85h-0.85zM311.9 332.0h0.85v0.85h-0.85zM29.4 321.9h0.85v0.85h-0.85zM166.5 334.8h0.85v0.85h-0.85zM33.2 337.3h0.85v0.85h-0.85zM335.6 338.4h0.85v0.85h-0.85zM199.6 337.4h0.85v0.85h-0.85zM239.9 331.4h0.85v0.85h-0.85zM20.2 332.6h0.85v0.85h-0.85zM294.4 333.4h0.85v0.85h-0.85zM290.6 320.7h0.85v0.85h-0.85zM107.6 334.6h0.85v0.85h-0.85zM132.3 331.8h0.85v0.85h-0.85zM79.6 337.5h0.85v0.85h-0.85zM74.5 337.8h0.85v0.85h-0.85zM242.9 333.6h0.85v0.85h-0.85zM147.4 313.1h0.85v0.85h-0.85zM419.5 325.6h0.85v0.85h-0.85zM186.4 335.2h0.85v0.85h-0.85zM296.8 321.3h0.85v0.85h-0.85zM236.3 322.6h0.85v0.85h-0.85zM25.3 337.9h0.85v0.85h-0.85zM88.5 328.3h0.85v0.85h-0.85zM386.6 337.0h0.85v0.85h-0.85zM379.7 334.3h0.85v0.85h-0.85zM250.4 331.6h0.85v0.85h-0.85zM291.8 336.8h0.85v0.85h-0.85zM297.0 336.9h0.85v0.85h-0.85zM324.3 336.9h0.85v0.85h-0.85zM196.7 336.6h0.85v0.85h-0.85zM420.2 333.1h0.85v0.85h-0.85zM317.1 334.0h0.85v0.85h-0.85zM83.3 334.2h0.85v0.85h-0.85zM311.3 337.3h0.85v0.85h-0.85zM76.6 331.4h0.85v0.85h-0.85zM331.5 327.4h0.85v0.85h-0.85zM35.2 337.9h0.85v0.85h-0.85zM396.3 337.7h0.85v0.85h-0.85zM136.0 334.7h0.85v0.85h-0.85zM437.0 314.5h0.85v0.85h-0.85zM318.1 334.0h0.85v0.85h-0.85zM36.9 334.0h0.85v0.85h-0.85zM331.6 332.0h0.85v0.85h-0.85zM77.0 332.1h0.85v0.85h-0.85zM137.5 333.0h0.85v0.85h-0.85zM22.2 338.4h0.85v0.85h-0.85zM346.7 338.4h0.85v0.85h-0.85zM404.3 338.0h0.85v0.85h-0.85zM84.6 325.5h0.85v0.85h-0.85zM277.3 315.4h0.85v0.85h-0.85zM114.6 333.2h0.85v0.85h-0.85zM340.6 337.8h0.85v0.85h-0.85zM246.5 316.4h0.85v0.85h-0.85zM228.1 319.8h0.85v0.85h-0.85zM203.8 317.3h0.85v0.85h-0.85zM405.8 331.6h0.85v0.85h-0.85zM409.7 333.3h0.85v0.85h-0.85zM266.4 337.7h0.85v0.85h-0.85zM389.9 332.6h0.85v0.85h-0.85zM136.2 331.4h0.85v0.85h-0.85zM97.8 335.2h0.85v0.85h-0.85zM435.3 331.4h0.85v0.85h-0.85zM87.7 334.9h0.85v0.85h-0.85zM95.4 329.0h0.85v0.85h-0.85zM37.0 316.5h0.85v0.85h-0.85zM53.0 332.7h0.85v0.85h-0.85zM85.4 332.8h0.85v0.85h-0.85zM154.5 335.6h0.85v0.85h-0.85zM169.6 335.0h0.85v0.85h-0.85zM299.8 333.1h0.85v0.85h-0.85zM306.2 325.5h0.85v0.85h-0.85zM307.0 330.9h0.85v0.85h-0.85zM199.7 334.6h0.85v0.85h-0.85zM339.7 333.1h0.85v0.85h-0.85zM110.3 333.2h0.85v0.85h-0.85zM103.3 338.3h0.85v0.85h-0.85zM339.4 318.3h0.85v0.85h-0.85zM423.8 335.4h0.85v0.85h-0.85zM40.2 338.1h0.85v0.85h-0.85zM107.7 332.4h0.85v0.85h-0.85zM57.2 337.7h0.85v0.85h-0.85zM21.8 313.0h0.85v0.85h-0.85zM49.1 328.6h0.85v0.85h-0.85zM283.0 327.1h0.85v0.85h-0.85zM433.4 327.2h0.85v0.85h-0.85zM194.4 334.9h0.85v0.85h-0.85zM276.5 334.4h0.85v0.85h-0.85zM29.4 334.8h0.85v0.85h-0.85zM26.7 316.1h0.85v0.85h-0.85zM116.9 331.4h0.85v0.85h-0.85zM374.5 332.9h0.85v0.85h-0.85zM286.1 329.5h0.85v0.85h-0.85zM357.0 331.4h0.85v0.85h-0.85zM89.9 333.5h0.85v0.85h-0.85zM172.1 329.7h0.85v0.85h-0.85zM144.5 332.3h0.85v0.85h-0.85zM306.7 331.7h0.85v0.85h-0.85zM144.5 336.4h0.85v0.85h-0.85zM395.1 335.4h0.85v0.85h-0.85zM201.2 334.1h0.85v0.85h-0.85zM284.7 336.8h0.85v0.85h-0.85zM114.4 336.9h0.85v0.85h-0.85zM40.8 335.5h0.85v0.85h-0.85zM294.5 335.7h0.85v0.85h-0.85zM88.3 335.1h0.85v0.85h-0.85zM148.7 335.7h0.85v0.85h-0.85zM108.3 335.5h0.85v0.85h-0.85zM211.0 326.1h0.85v0.85h-0.85zM111.1 336.6h0.85v0.85h-0.85zM313.7 331.3h0.85v0.85h-0.85zM353.9 315.7h0.85v0.85h-0.85zM73.0 334.7h0.85v0.85h-0.85zM88.3 319.2h0.85v0.85h-0.85zM281.9 335.9h0.85v0.85h-0.85zM305.2 320.3h0.85v0.85h-0.85zM201.5 335.8h0.85v0.85h-0.85zM334.8 333.3h0.85v0.85h-0.85zM202.7 317.2h0.85v0.85h-0.85zM237.3 334.2h0.85v0.85h-0.85zM371.7 331.8h0.85v0.85h-0.85zM240.8 334.9h0.85v0.85h-0.85zM297.1 338.1h0.85v0.85h-0.85zM355.9 316.7h0.85v0.85h-0.85zM306.5 337.5h0.85v0.85h-0.85zM526.0 322.8h0.85v0.85h-0.85zM245.5 333.7h0.85v0.85h-0.85zM218.4 322.0h0.85v0.85h-0.85zM130.2 329.8h0.85v0.85h-0.85zM141.3 314.4h0.85v0.85h-0.85zM87.4 331.5h0.85v0.85h-0.85zM122.5 334.2h0.85v0.85h-0.85zM98.9 335.0h0.85v0.85h-0.85zM315.4 333.9h0.85v0.85h-0.85zM57.5 334.6h0.85v0.85h-0.85zM533.3 337.7h0.85v0.85h-0.85zM220.2 336.6h0.85v0.85h-0.85zM54.7 338.4h0.85v0.85h-0.85zM207.5 319.1h0.85v0.85h-0.85zM309.5 333.3h0.85v0.85h-0.85zM221.0 332.6h0.85v0.85h-0.85zM133.4 319.5h0.85v0.85h-0.85zM104.5 322.2h0.85v0.85h-0.85zM125.2 333.9h0.85v0.85h-0.85zM269.0 338.3h0.85v0.85h-0.85zM246.2 336.0h0.85v0.85h-0.85zM110.8 318.0h0.85v0.85h-0.85zM225.5 333.9h0.85v0.85h-0.85zM316.3 315.9h0.85v0.85h-0.85zM239.5 320.6h0.85v0.85h-0.85zM173.0 335.2h0.85v0.85h-0.85zM305.9 334.9h0.85v0.85h-0.85zM107.9 317.3h0.85v0.85h-0.85zM180.2 336.0h0.85v0.85h-0.85zM404.9 331.7h0.85v0.85h-0.85zM357.3 326.1h0.85v0.85h-0.85zM258.4 331.4h0.85v0.85h-0.85zM363.2 329.9h0.85v0.85h-0.85zM158.8 336.4h0.85v0.85h-0.85zM229.0 314.3h0.85v0.85h-0.85zM89.6 336.8h0.85v0.85h-0.85zM40.4 334.9h0.85v0.85h-0.85zM308.9 328.7h0.85v0.85h-0.85zM34.8 333.7h0.85v0.85h-0.85zM287.5 325.6h0.85v0.85h-0.85zM421.0 322.4h0.85v0.85h-0.85zM230.1 331.5h0.85v0.85h-0.85zM354.9 333.6h0.85v0.85h-0.85zM339.3 337.4h0.85v0.85h-0.85zM144.6 334.9h0.85v0.85h-0.85zM317.8 338.2h0.85v0.85h-0.85zM476.2 314.2h0.85v0.85h-0.85zM317.6 334.9h0.85v0.85h-0.85zM489.2 336.3h0.85v0.85h-0.85zM351.2 337.0h0.85v0.85h-0.85zM261.6 327.8h0.85v0.85h-0.85zM256.2 332.4h0.85v0.85h-0.85zM217.5 337.6h0.85v0.85h-0.85zM390.1 335.5h0.85v0.85h-0.85zM179.3 318.7h0.85v0.85h-0.85zM373.8 335.0h0.85v0.85h-0.85zM171.8 323.3h0.85v0.85h-0.85zM220.1 329.0h0.85v0.85h-0.85zM50.3 328.8h0.85v0.85h-0.85zM178.1 327.0h0.85v0.85h-0.85zM527.0 337.8h0.85v0.85h-0.85zM113.8 314.7h0.85v0.85h-0.85zM246.1 332.3h0.85v0.85h-0.85zM231.0 325.4h0.85v0.85h-0.85zM26.0 333.1h0.85v0.85h-0.85zM290.6 335.6h0.85v0.85h-0.85zM474.9 335.9h0.85v0.85h-0.85zM343.4 337.5h0.85v0.85h-0.85zM411.7 334.2h0.85v0.85h-0.85zM60.1 331.3h0.85v0.85h-0.85zM286.3 333.0h0.85v0.85h-0.85zM200.0 328.9h0.85v0.85h-0.85zM109.6 333.8h0.85v0.85h-0.85zM180.8 325.1h0.85v0.85h-0.85zM100.3 336.9h0.85v0.85h-0.85zM143.1 319.5h0.85v0.85h-0.85zM139.6 335.7h0.85v0.85h-0.85zM179.8 336.4h0.85v0.85h-0.85zM96.4 313.3h0.85v0.85h-0.85zM201.4 336.9h0.85v0.85h-0.85zM351.3 326.3h0.85v0.85h-0.85zM128.9 328.5h0.85v0.85h-0.85zM229.6 331.6h0.85v0.85h-0.85zM395.4 326.1h0.85v0.85h-0.85zM34.4 336.3h0.85v0.85h-0.85zM78.5 334.9h0.85v0.85h-0.85zM295.9 316.9h0.85v0.85h-0.85zM468.3 316.9h0.85v0.85h-0.85zM234.2 337.1h0.85v0.85h-0.85zM213.6 328.6h0.85v0.85h-0.85zM51.2 334.9h0.85v0.85h-0.85zM26.4 325.2h0.85v0.85h-0.85zM58.9 334.7h0.85v0.85h-0.85zM307.9 336.8h0.85v0.85h-0.85zM354.0 336.3h0.85v0.85h-0.85zM356.6 333.3h0.85v0.85h-0.85zM188.3 338.4h0.85v0.85h-0.85zM135.7 331.6h0.85v0.85h-0.85zM387.5 334.6h0.85v0.85h-0.85zM339.6 326.4h0.85v0.85h-0.85zM328.6 335.6h0.85v0.85h-0.85zM149.7 337.1h0.85v0.85h-0.85zM300.3 335.9h0.85v0.85h-0.85zM117.3 320.2h0.85v0.85h-0.85zM263.1 333.9h0.85v0.85h-0.85zM360.9 336.0h0.85v0.85h-0.85zM467.6 338.1h0.85v0.85h-0.85zM27.5 335.8h0.85v0.85h-0.85zM340.4 337.4h0.85v0.85h-0.85zM393.8 333.7h0.85v0.85h-0.85zM113.9 338.4h0.85v0.85h-0.85zM302.3 337.8h0.85v0.85h-0.85zM61.5 317.7h0.85v0.85h-0.85zM334.3 329.5h0.85v0.85h-0.85zM344.7 337.2h0.85v0.85h-0.85zM136.5 318.7h0.85v0.85h-0.85zM46.4 326.5h0.85v0.85h-0.85zM395.1 335.7h0.85v0.85h-0.85zM108.9 337.8h0.85v0.85h-0.85zM232.1 332.4h0.85v0.85h-0.85zM409.8 337.9h0.85v0.85h-0.85zM330.9 337.8h0.85v0.85h-0.85zM93.1 334.5h0.85v0.85h-0.85zM310.8 338.4h0.85v0.85h-0.85zM223.0 333.8h0.85v0.85h-0.85zM386.0 321.4h0.85v0.85h-0.85zM57.2 319.8h0.85v0.85h-0.85zM337.4 334.6h0.85v0.85h-0.85zM141.9 335.7h0.85v0.85h-0.85zM114.7 332.5h0.85v0.85h-0.85zM188.9 337.9h0.85v0.85h-0.85zM368.1 316.0h0.85v0.85h-0.85zM349.1 337.8h0.85v0.85h-0.85zM408.0 316.1h0.85v0.85h-0.85zM26.9 334.5h0.85v0.85h-0.85zM144.8 332.1h0.85v0.85h-0.85zM259.5 313.9h0.85v0.85h-0.85zM176.3 327.2h0.85v0.85h-0.85zM447.7 337.4h0.85v0.85h-0.85zM86.6 337.0h0.85v0.85h-0.85zM231.3 320.0h0.85v0.85h-0.85zM190.9 323.1h0.85v0.85h-0.85zM164.3 326.4h0.85v0.85h-0.85zM207.8 337.5h0.85v0.85h-0.85zM222.4 331.9h0.85v0.85h-0.85zM239.5 337.7h0.85v0.85h-0.85zM406.5 334.5h0.85v0.85h-0.85zM234.3 335.9h0.85v0.85h-0.85zM240.7 334.7h0.85v0.85h-0.85zM295.6 336.9h0.85v0.85h-0.85zM88.5 313.3h0.85v0.85h-0.85zM376.2 317.0h0.85v0.85h-0.85zM37.9 338.3h0.85v0.85h-0.85zM236.5 335.1h0.85v0.85h-0.85zM197.9 327.4h0.85v0.85h-0.85zM241.4 313.1h0.85v0.85h-0.85zM102.4 319.9h0.85v0.85h-0.85zM343.0 321.2h0.85v0.85h-0.85zM43.9 336.5h0.85v0.85h-0.85zM25.9 331.4h0.85v0.85h-0.85zM230.9 337.3h0.85v0.85h-0.85zM343.6 337.7h0.85v0.85h-0.85zM362.4 319.5h0.85v0.85h-0.85zM364.0 329.6h0.85v0.85h-0.85zM412.0 313.3h0.85v0.85h-0.85zM186.5 323.4h0.85v0.85h-0.85zM401.4 332.6h0.85v0.85h-0.85zM165.7 329.3h0.85v0.85h-0.85zM261.1 336.3h0.85v0.85h-0.85zM425.2 331.7h0.85v0.85h-0.85zM317.1 319.7h0.85v0.85h-0.85zM89.1 335.0h0.85v0.85h-0.85zM131.9 333.7h0.85v0.85h-0.85zM320.7 334.2h0.85v0.85h-0.85zM266.2 336.0h0.85v0.85h-0.85zM262.3 327.1h0.85v0.85h-0.85zM122.7 336.7h0.85v0.85h-0.85zM122.2 319.0h0.85v0.85h-0.85zM171.7 332.7h0.85v0.85h-0.85zM342.9 320.8h0.85v0.85h-0.85zM108.3 332.2h0.85v0.85h-0.85zM291.0 337.5h0.85v0.85h-0.85zM391.7 323.3h0.85v0.85h-0.85zM139.6 332.9h0.85v0.85h-0.85zM144.7 332.6h0.85v0.85h-0.85zM34.2 319.2h0.85v0.85h-0.85zM472.9 324.6h0.85v0.85h-0.85zM222.0 323.0h0.85v0.85h-0.85zM23.4 318.3h0.85v0.85h-0.85zM391.4 337.6h0.85v0.85h-0.85zM218.7 332.8h0.85v0.85h-0.85zM138.6 332.7h0.85v0.85h-0.85zM188.9 331.7h0.85v0.85h-0.85zM149.0 319.0h0.85v0.85h-0.85zM119.7 333.1h0.85v0.85h-0.85zM29.1 336.4h0.85v0.85h-0.85zM36.2 326.9h0.85v0.85h-0.85zM45.1 334.3h0.85v0.85h-0.85zM188.1 332.7h0.85v0.85h-0.85zM195.3 337.0h0.85v0.85h-0.85zM365.9 334.3h0.85v0.85h-0.85zM120.9 336.9h0.85v0.85h-0.85zM302.2 334.2h0.85v0.85h-0.85zM213.0 323.6h0.85v0.85h-0.85zM440.9 335.4h0.85v0.85h-0.85zM281.4 333.0h0.85v0.85h-0.85zM351.1 338.4h0.85v0.85h-0.85zM232.1 338.4h0.85v0.85h-0.85zM386.7 331.1h0.85v0.85h-0.85zM383.7 331.5h0.85v0.85h-0.85zM371.3 319.3h0.85v0.85h-0.85zM297.8 326.5h0.85v0.85h-0.85zM410.1 336.3h0.85v0.85h-0.85zM373.0 315.0h0.85v0.85h-0.85zM259.4 322.4h0.85v0.85h-0.85zM253.8 325.8h0.85v0.85h-0.85zM211.4 316.5h0.85v0.85h-0.85zM313.7 313.8h0.85v0.85h-0.85zM351.3 335.5h0.85v0.85h-0.85zM104.8 334.7h0.85v0.85h-0.85zM339.8 336.4h0.85v0.85h-0.85zM247.1 332.1h0.85v0.85h-0.85zM211.8 337.1h0.85v0.85h-0.85zM63.6 331.6h0.85v0.85h-0.85zM411.2 333.7h0.85v0.85h-0.85zM404.1 335.2h0.85v0.85h-0.85zM292.9 338.2h0.85v0.85h-0.85zM394.6 332.5h0.85v0.85h-0.85zM63.0 334.6h0.85v0.85h-0.85zM229.5 332.4h0.85v0.85h-0.85zM22.9 335.3h0.85v0.85h-0.85zM269.7 335.9h0.85v0.85h-0.85zM408.2 320.8h0.85v0.85h-0.85zM144.7 338.0h0.85v0.85h-0.85zM117.2 313.6h0.85v0.85h-0.85zM335.1 329.0h0.85v0.85h-0.85zM23.2 313.9h0.85v0.85h-0.85zM433.6 334.9h0.85v0.85h-0.85zM125.8 321.1h0.85v0.85h-0.85zM144.2 330.9h0.85v0.85h-0.85zM353.5 315.6h0.85v0.85h-0.85zM397.4 336.8h0.85v0.85h-0.85zM260.2 333.0h0.85v0.85h-0.85zM240.8 324.2h0.85v0.85h-0.85zM308.8 325.4h0.85v0.85h-0.85zM490.1 334.8h0.85v0.85h-0.85zM242.1 320.6h0.85v0.85h-0.85zM31.9 320.1h0.85v0.85h-0.85zM164.6 337.0h0.85v0.85h-0.85zM80.7 333.7h0.85v0.85h-0.85zM78.4 318.2h0.85v0.85h-0.85zM158.1 333.5h0.85v0.85h-0.85zM159.3 335.9h0.85v0.85h-0.85zM158.0 333.5h0.85v0.85h-0.85zM365.1 316.2h0.85v0.85h-0.85zM73.2 334.9h0.85v0.85h-0.85zM220.6 332.3h0.85v0.85h-0.85zM348.7 331.9h0.85v0.85h-0.85zM225.3 337.1h0.85v0.85h-0.85zM131.2 334.8h0.85v0.85h-0.85zM135.0 337.5h0.85v0.85h-0.85zM164.1 332.1h0.85v0.85h-0.85zM137.1 337.2h0.85v0.85h-0.85zM244.5 333.2h0.85v0.85h-0.85zM133.7 333.2h0.85v0.85h-0.85zM514.3 333.5h0.85v0.85h-0.85zM291.2 331.2h0.85v0.85h-0.85zM138.8 336.1h0.85v0.85h-0.85zM71.2 322.5h0.85v0.85h-0.85zM381.0 315.2h0.85v0.85h-0.85zM335.6 331.3h0.85v0.85h-0.85zM84.2 324.3h0.85v0.85h-0.85zM378.2 332.5h0.85v0.85h-0.85zM112.8 333.8h0.85v0.85h-0.85zM382.1 315.3h0.85v0.85h-0.85zM160.2 337.2h0.85v0.85h-0.85zM152.4 325.7h0.85v0.85h-0.85zM153.9 332.0h0.85v0.85h-0.85zM77.9 322.2h0.85v0.85h-0.85zM372.0 323.0h0.85v0.85h-0.85zM337.8 327.8h0.85v0.85h-0.85zM248.2 334.1h0.85v0.85h-0.85zM30.8 332.2h0.85v0.85h-0.85zM107.2 317.5h0.85v0.85h-0.85zM443.2 328.4h0.85v0.85h-0.85zM535.1 332.0h0.85v0.85h-0.85zM441.6 334.9h0.85v0.85h-0.85zM332.3 325.9h0.85v0.85h-0.85zM49.2 337.5h0.85v0.85h-0.85zM171.7 334.9h0.85v0.85h-0.85zM75.4 336.2h0.85v0.85h-0.85zM169.1 337.1h0.85v0.85h-0.85zM51.6 323.2h0.85v0.85h-0.85zM96.1 318.4h0.85v0.85h-0.85zM78.6 338.3h0.85v0.85h-0.85zM111.4 322.9h0.85v0.85h-0.85zM49.2 318.6h0.85v0.85h-0.85zM72.9 335.0h0.85v0.85h-0.85zM279.2 322.2h0.85v0.85h-0.85zM250.1 334.5h0.85v0.85h-0.85zM271.6 337.7h0.85v0.85h-0.85zM403.9 321.6h0.85v0.85h-0.85zM88.4 335.3h0.85v0.85h-0.85zM257.8 316.4h0.85v0.85h-0.85zM61.0 337.5h0.85v0.85h-0.85zM358.3 332.7h0.85v0.85h-0.85zM136.8 332.5h0.85v0.85h-0.85zM65.9 333.3h0.85v0.85h-0.85zM368.9 332.5h0.85v0.85h-0.85zM103.4 328.3h0.85v0.85h-0.85zM497.1 332.7h0.85v0.85h-0.85zM217.7 324.1h0.85v0.85h-0.85zM155.3 336.2h0.85v0.85h-0.85zM84.2 318.7h0.85v0.85h-0.85zM193.1 326.6h0.85v0.85h-0.85zM432.3 335.0h0.85v0.85h-0.85zM152.4 336.9h0.85v0.85h-0.85zM146.3 324.1h0.85v0.85h-0.85zM535.6 333.0h0.85v0.85h-0.85zM201.0 326.9h0.85v0.85h-0.85zM421.0 316.5h0.85v0.85h-0.85zM105.4 331.5h0.85v0.85h-0.85zM291.1 334.4h0.85v0.85h-0.85zM121.4 338.4h0.85v0.85h-0.85zM31.6 333.7h0.85v0.85h-0.85zM361.8 334.8h0.85v0.85h-0.85zM55.0 333.2h0.85v0.85h-0.85zM323.0 325.4h0.85v0.85h-0.85zM223.6 333.1h0.85v0.85h-0.85zM184.0 333.7h0.85v0.85h-0.85zM194.6 336.5h0.85v0.85h-0.85zM254.6 333.0h0.85v0.85h-0.85zM289.4 335.5h0.85v0.85h-0.85zM325.1 331.1h0.85v0.85h-0.85zM273.3 338.3h0.85v0.85h-0.85zM72.8 328.9h0.85v0.85h-0.85zM408.8 335.5h0.85v0.85h-0.85zM98.3 322.2h0.85v0.85h-0.85zM323.4 338.4h0.85v0.85h-0.85zM362.5 327.1h0.85v0.85h-0.85zM289.1 336.6h0.85v0.85h-0.85zM61.6 331.1h0.85v0.85h-0.85zM533.9 331.2h0.85v0.85h-0.85zM230.2 336.0h0.85v0.85h-0.85zM280.7 313.0h0.85v0.85h-0.85zM307.0 335.3h0.85v0.85h-0.85zM235.4 313.7h0.85v0.85h-0.85zM91.8 333.1h0.85v0.85h-0.85zM190.4 337.2h0.85v0.85h-0.85zM125.2 333.0h0.85v0.85h-0.85zM189.9 335.6h0.85v0.85h-0.85zM149.1 332.1h0.85v0.85h-0.85zM79.2 316.7h0.85v0.85h-0.85zM66.3 338.2h0.85v0.85h-0.85zM136.7 333.3h0.85v0.85h-0.85zM415.3 329.6h0.85v0.85h-0.85zM71.9 336.4h0.85v0.85h-0.85zM121.0 332.9h0.85v0.85h-0.85zM272.1 334.8h0.85v0.85h-0.85zM252.8 334.3h0.85v0.85h-0.85zM44.3 329.1h0.85v0.85h-0.85zM38.3 333.3h0.85v0.85h-0.85zM253.8 334.0h0.85v0.85h-0.85zM112.6 328.4h0.85v0.85h-0.85zM334.7 323.2h0.85v0.85h-0.85zM147.6 335.5h0.85v0.85h-0.85zM183.6 333.9h0.85v0.85h-0.85z" fill="#c0b448" fill-opacity="0.55"/>
<path d="M23.6 335.0h0.85v0.85h-0.85zM132.1 335.8h0.85v0.85h-0.85zM94.1 334.2h0.85v0.85h-0.85zM180.4 334.2h0.85v0.85h-0.85zM164.0 334.5h0.85v0.85h-0.85zM416.8 332.7h0.85v0.85h-0.85zM274.1 338.1h0.85v0.85h-0.85zM187.5 319.5h0.85v0.85h-0.85zM294.4 334.6h0.85v0.85h-0.85zM112.3 332.9h0.85v0.85h-0.85zM108.1 336.4h0.85v0.85h-0.85zM233.9 334.4h0.85v0.85h-0.85zM134.3 335.2h0.85v0.85h-0.85zM156.4 335.6h0.85v0.85h-0.85zM311.6 338.4h0.85v0.85h-0.85zM21.7 332.4h0.85v0.85h-0.85zM157.2 332.6h0.85v0.85h-0.85zM140.0 337.6h0.85v0.85h-0.85zM133.2 333.5h0.85v0.85h-0.85zM331.9 321.4h0.85v0.85h-0.85zM252.1 324.4h0.85v0.85h-0.85zM43.6 337.5h0.85v0.85h-0.85zM476.9 337.7h0.85v0.85h-0.85zM370.9 335.5h0.85v0.85h-0.85zM99.0 323.8h0.85v0.85h-0.85zM161.9 337.5h0.85v0.85h-0.85zM352.4 336.1h0.85v0.85h-0.85zM132.8 336.7h0.85v0.85h-0.85zM21.2 332.8h0.85v0.85h-0.85zM127.1 336.5h0.85v0.85h-0.85zM40.5 335.4h0.85v0.85h-0.85zM146.0 337.4h0.85v0.85h-0.85zM145.6 337.9h0.85v0.85h-0.85zM183.3 335.9h0.85v0.85h-0.85zM334.6 337.5h0.85v0.85h-0.85zM86.7 326.1h0.85v0.85h-0.85zM330.0 334.8h0.85v0.85h-0.85zM61.9 333.8h0.85v0.85h-0.85zM177.9 336.6h0.85v0.85h-0.85zM71.0 335.8h0.85v0.85h-0.85zM229.4 334.7h0.85v0.85h-0.85zM529.3 334.3h0.85v0.85h-0.85zM285.1 332.9h0.85v0.85h-0.85zM167.8 335.7h0.85v0.85h-0.85zM343.2 336.4h0.85v0.85h-0.85zM316.3 336.8h0.85v0.85h-0.85zM395.5 333.1h0.85v0.85h-0.85zM481.0 335.4h0.85v0.85h-0.85zM261.1 337.8h0.85v0.85h-0.85zM237.7 334.3h0.85v0.85h-0.85zM326.2 337.1h0.85v0.85h-0.85zM39.5 333.1h0.85v0.85h-0.85zM95.1 332.7h0.85v0.85h-0.85zM358.7 332.9h0.85v0.85h-0.85zM60.9 336.2h0.85v0.85h-0.85zM315.3 336.2h0.85v0.85h-0.85zM61.6 336.5h0.85v0.85h-0.85zM165.4 336.2h0.85v0.85h-0.85zM284.9 337.5h0.85v0.85h-0.85zM29.1 323.9h0.85v0.85h-0.85zM112.6 325.0h0.85v0.85h-0.85zM284.8 334.2h0.85v0.85h-0.85zM271.2 335.3h0.85v0.85h-0.85zM254.9 333.7h0.85v0.85h-0.85zM314.7 336.3h0.85v0.85h-0.85zM249.8 328.5h0.85v0.85h-0.85zM177.5 336.8h0.85v0.85h-0.85zM146.5 335.2h0.85v0.85h-0.85zM281.1 334.0h0.85v0.85h-0.85zM209.8 317.6h0.85v0.85h-0.85zM124.2 335.0h0.85v0.85h-0.85zM249.7 336.4h0.85v0.85h-0.85zM218.3 327.9h0.85v0.85h-0.85zM266.7 332.7h0.85v0.85h-0.85zM95.9 335.5h0.85v0.85h-0.85zM53.5 332.4h0.85v0.85h-0.85zM105.4 320.8h0.85v0.85h-0.85zM66.6 336.7h0.85v0.85h-0.85zM449.6 333.2h0.85v0.85h-0.85zM527.7 338.3h0.85v0.85h-0.85zM241.3 337.1h0.85v0.85h-0.85zM411.9 334.4h0.85v0.85h-0.85zM90.5 334.0h0.85v0.85h-0.85zM232.5 336.6h0.85v0.85h-0.85zM403.1 334.3h0.85v0.85h-0.85zM297.3 334.8h0.85v0.85h-0.85zM113.1 337.7h0.85v0.85h-0.85zM177.7 334.7h0.85v0.85h-0.85zM198.5 332.6h0.85v0.85h-0.85zM144.7 335.6h0.85v0.85h-0.85zM144.7 335.9h0.85v0.85h-0.85zM110.9 336.1h0.85v0.85h-0.85zM45.9 332.7h0.85v0.85h-0.85zM318.3 336.5h0.85v0.85h-0.85zM513.3 324.3h0.85v0.85h-0.85zM419.1 337.5h0.85v0.85h-0.85zM71.2 324.3h0.85v0.85h-0.85zM411.6 333.8h0.85v0.85h-0.85zM27.3 334.0h0.85v0.85h-0.85zM59.3 332.8h0.85v0.85h-0.85zM90.4 333.9h0.85v0.85h-0.85zM335.7 335.5h0.85v0.85h-0.85zM363.1 335.0h0.85v0.85h-0.85zM317.8 324.4h0.85v0.85h-0.85zM254.6 337.6h0.85v0.85h-0.85zM284.3 336.4h0.85v0.85h-0.85zM118.0 337.1h0.85v0.85h-0.85zM214.7 335.7h0.85v0.85h-0.85zM98.5 324.5h0.85v0.85h-0.85zM22.0 337.7h0.85v0.85h-0.85zM94.3 332.9h0.85v0.85h-0.85zM105.0 337.5h0.85v0.85h-0.85zM403.5 324.0h0.85v0.85h-0.85zM213.1 337.2h0.85v0.85h-0.85zM430.5 332.4h0.85v0.85h-0.85zM399.3 328.2h0.85v0.85h-0.85zM127.8 333.4h0.85v0.85h-0.85zM330.3 333.7h0.85v0.85h-0.85zM334.4 333.5h0.85v0.85h-0.85zM192.6 338.1h0.85v0.85h-0.85zM283.1 335.1h0.85v0.85h-0.85zM95.7 336.1h0.85v0.85h-0.85zM42.3 335.0h0.85v0.85h-0.85zM52.8 335.2h0.85v0.85h-0.85zM336.4 334.1h0.85v0.85h-0.85zM327.1 326.1h0.85v0.85h-0.85zM107.3 338.0h0.85v0.85h-0.85zM32.9 334.8h0.85v0.85h-0.85zM35.2 317.3h0.85v0.85h-0.85zM404.3 319.2h0.85v0.85h-0.85zM293.1 335.3h0.85v0.85h-0.85zM349.2 318.3h0.85v0.85h-0.85zM285.1 333.4h0.85v0.85h-0.85zM250.1 335.4h0.85v0.85h-0.85zM38.1 336.0h0.85v0.85h-0.85zM82.9 337.8h0.85v0.85h-0.85zM303.9 322.7h0.85v0.85h-0.85zM120.1 337.4h0.85v0.85h-0.85zM112.6 332.9h0.85v0.85h-0.85zM128.3 333.4h0.85v0.85h-0.85zM118.6 336.9h0.85v0.85h-0.85zM213.5 333.0h0.85v0.85h-0.85zM346.0 336.4h0.85v0.85h-0.85zM539.7 337.4h0.85v0.85h-0.85zM366.8 335.8h0.85v0.85h-0.85zM37.8 332.6h0.85v0.85h-0.85zM252.5 336.2h0.85v0.85h-0.85zM148.7 334.3h0.85v0.85h-0.85zM305.9 333.5h0.85v0.85h-0.85zM175.6 337.9h0.85v0.85h-0.85zM21.5 334.3h0.85v0.85h-0.85zM285.3 336.8h0.85v0.85h-0.85zM169.7 336.0h0.85v0.85h-0.85zM389.4 334.9h0.85v0.85h-0.85zM388.3 333.0h0.85v0.85h-0.85zM377.4 333.7h0.85v0.85h-0.85zM50.6 335.1h0.85v0.85h-0.85zM195.1 336.8h0.85v0.85h-0.85zM500.8 335.3h0.85v0.85h-0.85zM368.2 337.8h0.85v0.85h-0.85zM129.7 334.2h0.85v0.85h-0.85zM247.5 332.7h0.85v0.85h-0.85zM21.5 334.3h0.85v0.85h-0.85zM111.5 319.8h0.85v0.85h-0.85zM279.3 330.7h0.85v0.85h-0.85zM191.0 336.8h0.85v0.85h-0.85zM391.9 337.7h0.85v0.85h-0.85zM210.3 334.0h0.85v0.85h-0.85zM173.3 329.9h0.85v0.85h-0.85zM229.0 337.4h0.85v0.85h-0.85zM83.1 334.8h0.85v0.85h-0.85zM432.3 326.1h0.85v0.85h-0.85zM415.6 333.3h0.85v0.85h-0.85zM156.5 332.9h0.85v0.85h-0.85zM258.2 333.8h0.85v0.85h-0.85zM247.4 333.7h0.85v0.85h-0.85zM37.1 318.8h0.85v0.85h-0.85zM208.3 336.8h0.85v0.85h-0.85zM156.2 317.4h0.85v0.85h-0.85zM190.0 317.4h0.85v0.85h-0.85zM519.7 336.4h0.85v0.85h-0.85zM366.5 319.7h0.85v0.85h-0.85zM74.8 336.9h0.85v0.85h-0.85zM187.9 338.0h0.85v0.85h-0.85zM136.0 338.1h0.85v0.85h-0.85zM264.0 338.3h0.85v0.85h-0.85zM405.5 332.9h0.85v0.85h-0.85zM287.5 333.0h0.85v0.85h-0.85zM61.5 333.7h0.85v0.85h-0.85zM456.2 336.8h0.85v0.85h-0.85zM323.9 335.4h0.85v0.85h-0.85zM28.4 336.7h0.85v0.85h-0.85zM32.6 335.0h0.85v0.85h-0.85zM159.2 334.9h0.85v0.85h-0.85zM81.4 335.7h0.85v0.85h-0.85zM74.5 337.2h0.85v0.85h-0.85zM28.7 338.1h0.85v0.85h-0.85zM308.8 334.6h0.85v0.85h-0.85zM44.5 336.6h0.85v0.85h-0.85zM320.9 337.7h0.85v0.85h-0.85zM383.1 334.5h0.85v0.85h-0.85zM276.5 317.2h0.85v0.85h-0.85zM177.1 336.2h0.85v0.85h-0.85zM103.8 337.4h0.85v0.85h-0.85zM199.8 334.3h0.85v0.85h-0.85zM335.6 337.7h0.85v0.85h-0.85zM29.1 336.5h0.85v0.85h-0.85zM254.7 338.4h0.85v0.85h-0.85zM304.7 327.2h0.85v0.85h-0.85zM99.4 317.6h0.85v0.85h-0.85zM242.5 336.2h0.85v0.85h-0.85zM284.6 335.0h0.85v0.85h-0.85zM52.6 334.9h0.85v0.85h-0.85zM186.7 332.4h0.85v0.85h-0.85zM182.0 337.4h0.85v0.85h-0.85zM188.0 334.1h0.85v0.85h-0.85zM99.8 333.9h0.85v0.85h-0.85zM275.3 330.7h0.85v0.85h-0.85zM105.3 337.6h0.85v0.85h-0.85zM90.0 335.9h0.85v0.85h-0.85zM60.9 336.7h0.85v0.85h-0.85zM269.2 334.8h0.85v0.85h-0.85zM382.7 332.7h0.85v0.85h-0.85zM232.7 332.9h0.85v0.85h-0.85zM323.7 336.9h0.85v0.85h-0.85zM241.7 334.7h0.85v0.85h-0.85zM65.4 320.8h0.85v0.85h-0.85zM400.9 333.6h0.85v0.85h-0.85zM350.3 334.4h0.85v0.85h-0.85zM358.5 337.8h0.85v0.85h-0.85zM95.6 333.7h0.85v0.85h-0.85zM97.1 323.0h0.85v0.85h-0.85zM225.8 336.6h0.85v0.85h-0.85zM85.1 335.9h0.85v0.85h-0.85zM277.6 335.7h0.85v0.85h-0.85zM95.4 332.8h0.85v0.85h-0.85zM39.1 333.2h0.85v0.85h-0.85zM61.6 336.1h0.85v0.85h-0.85zM170.7 334.6h0.85v0.85h-0.85zM534.0 330.1h0.85v0.85h-0.85zM258.9 337.5h0.85v0.85h-0.85zM170.6 334.0h0.85v0.85h-0.85zM284.4 337.5h0.85v0.85h-0.85zM260.7 332.5h0.85v0.85h-0.85zM196.0 337.0h0.85v0.85h-0.85zM325.2 336.7h0.85v0.85h-0.85zM22.3 337.2h0.85v0.85h-0.85zM349.6 333.2h0.85v0.85h-0.85zM331.2 337.2h0.85v0.85h-0.85zM44.4 335.7h0.85v0.85h-0.85zM314.7 337.6h0.85v0.85h-0.85zM36.8 334.8h0.85v0.85h-0.85zM138.7 335.1h0.85v0.85h-0.85zM244.4 332.9h0.85v0.85h-0.85zM227.0 333.7h0.85v0.85h-0.85zM257.7 335.3h0.85v0.85h-0.85zM117.1 337.3h0.85v0.85h-0.85zM105.0 337.2h0.85v0.85h-0.85zM213.0 335.9h0.85v0.85h-0.85zM331.6 337.6h0.85v0.85h-0.85zM212.4 336.2h0.85v0.85h-0.85zM73.0 336.1h0.85v0.85h-0.85zM321.3 332.8h0.85v0.85h-0.85zM48.0 334.5h0.85v0.85h-0.85zM184.1 335.4h0.85v0.85h-0.85zM203.6 335.5h0.85v0.85h-0.85zM117.1 318.1h0.85v0.85h-0.85zM57.8 334.7h0.85v0.85h-0.85zM208.3 332.8h0.85v0.85h-0.85zM45.4 328.7h0.85v0.85h-0.85zM41.3 333.9h0.85v0.85h-0.85zM196.5 336.5h0.85v0.85h-0.85zM364.5 337.5h0.85v0.85h-0.85zM331.6 323.8h0.85v0.85h-0.85zM444.9 336.3h0.85v0.85h-0.85zM158.2 333.0h0.85v0.85h-0.85zM412.0 337.2h0.85v0.85h-0.85zM205.0 332.7h0.85v0.85h-0.85zM352.0 333.9h0.85v0.85h-0.85zM299.0 334.5h0.85v0.85h-0.85zM448.9 336.3h0.85v0.85h-0.85zM298.4 333.2h0.85v0.85h-0.85zM216.4 332.6h0.85v0.85h-0.85zM314.9 333.9h0.85v0.85h-0.85zM143.3 327.3h0.85v0.85h-0.85zM252.1 335.9h0.85v0.85h-0.85zM396.3 336.4h0.85v0.85h-0.85zM284.4 331.5h0.85v0.85h-0.85zM142.6 338.1h0.85v0.85h-0.85zM103.2 325.3h0.85v0.85h-0.85zM265.2 338.3h0.85v0.85h-0.85zM106.5 333.3h0.85v0.85h-0.85zM462.9 336.6h0.85v0.85h-0.85zM28.6 338.4h0.85v0.85h-0.85zM280.9 333.7h0.85v0.85h-0.85zM40.5 337.9h0.85v0.85h-0.85zM112.4 335.6h0.85v0.85h-0.85zM169.1 318.5h0.85v0.85h-0.85zM27.5 320.0h0.85v0.85h-0.85zM299.2 338.2h0.85v0.85h-0.85zM237.0 338.1h0.85v0.85h-0.85zM70.3 336.7h0.85v0.85h-0.85zM374.5 335.6h0.85v0.85h-0.85zM133.5 338.3h0.85v0.85h-0.85zM261.3 332.8h0.85v0.85h-0.85zM273.6 323.0h0.85v0.85h-0.85zM31.5 335.2h0.85v0.85h-0.85zM265.1 335.9h0.85v0.85h-0.85zM384.2 337.7h0.85v0.85h-0.85zM108.0 334.5h0.85v0.85h-0.85zM226.8 334.7h0.85v0.85h-0.85zM86.5 338.4h0.85v0.85h-0.85zM85.7 334.5h0.85v0.85h-0.85zM249.4 333.7h0.85v0.85h-0.85zM250.6 337.0h0.85v0.85h-0.85zM115.9 332.6h0.85v0.85h-0.85zM58.8 335.1h0.85v0.85h-0.85zM24.3 338.3h0.85v0.85h-0.85zM396.3 335.9h0.85v0.85h-0.85zM94.6 336.4h0.85v0.85h-0.85zM106.9 332.5h0.85v0.85h-0.85zM107.7 333.0h0.85v0.85h-0.85zM203.0 334.7h0.85v0.85h-0.85zM407.1 332.6h0.85v0.85h-0.85zM205.0 336.5h0.85v0.85h-0.85zM179.1 322.0h0.85v0.85h-0.85zM70.1 333.8h0.85v0.85h-0.85zM132.8 337.4h0.85v0.85h-0.85zM141.8 336.5h0.85v0.85h-0.85zM60.6 335.9h0.85v0.85h-0.85zM184.4 332.4h0.85v0.85h-0.85zM33.3 334.7h0.85v0.85h-0.85zM354.9 332.5h0.85v0.85h-0.85zM362.9 337.1h0.85v0.85h-0.85zM465.6 335.3h0.85v0.85h-0.85zM239.4 337.8h0.85v0.85h-0.85zM315.4 335.0h0.85v0.85h-0.85zM505.1 332.7h0.85v0.85h-0.85zM199.2 331.4h0.85v0.85h-0.85zM268.7 320.6h0.85v0.85h-0.85zM74.7 333.8h0.85v0.85h-0.85zM32.4 335.6h0.85v0.85h-0.85zM254.6 335.7h0.85v0.85h-0.85zM189.8 333.6h0.85v0.85h-0.85zM271.6 334.1h0.85v0.85h-0.85zM137.2 337.4h0.85v0.85h-0.85zM135.9 337.4h0.85v0.85h-0.85zM238.0 334.6h0.85v0.85h-0.85zM305.1 332.8h0.85v0.85h-0.85zM98.2 334.2h0.85v0.85h-0.85zM465.7 335.8h0.85v0.85h-0.85zM76.9 335.6h0.85v0.85h-0.85zM214.4 338.2h0.85v0.85h-0.85zM218.7 337.6h0.85v0.85h-0.85zM379.7 332.7h0.85v0.85h-0.85zM149.5 336.4h0.85v0.85h-0.85zM100.3 325.9h0.85v0.85h-0.85zM114.7 334.7h0.85v0.85h-0.85zM346.3 334.4h0.85v0.85h-0.85zM389.0 338.3h0.85v0.85h-0.85zM359.6 333.7h0.85v0.85h-0.85zM115.6 336.1h0.85v0.85h-0.85zM254.5 332.5h0.85v0.85h-0.85zM235.1 321.4h0.85v0.85h-0.85zM262.4 335.3h0.85v0.85h-0.85zM147.2 337.6h0.85v0.85h-0.85zM132.4 338.3h0.85v0.85h-0.85zM165.8 326.0h0.85v0.85h-0.85zM158.8 337.4h0.85v0.85h-0.85zM113.8 333.9h0.85v0.85h-0.85zM508.6 334.3h0.85v0.85h-0.85zM268.6 334.8h0.85v0.85h-0.85zM133.9 338.4h0.85v0.85h-0.85zM367.1 337.7h0.85v0.85h-0.85zM115.0 336.7h0.85v0.85h-0.85zM373.8 335.1h0.85v0.85h-0.85zM280.0 336.3h0.85v0.85h-0.85zM291.2 330.1h0.85v0.85h-0.85zM238.2 331.7h0.85v0.85h-0.85zM48.6 336.0h0.85v0.85h-0.85zM172.7 335.8h0.85v0.85h-0.85zM536.8 336.1h0.85v0.85h-0.85zM249.3 334.9h0.85v0.85h-0.85zM271.6 336.3h0.85v0.85h-0.85zM308.6 335.0h0.85v0.85h-0.85zM468.9 333.2h0.85v0.85h-0.85zM148.6 337.9h0.85v0.85h-0.85zM366.4 323.4h0.85v0.85h-0.85zM196.5 334.4h0.85v0.85h-0.85zM37.7 334.4h0.85v0.85h-0.85zM367.9 333.5h0.85v0.85h-0.85zM311.5 338.1h0.85v0.85h-0.85zM383.4 335.9h0.85v0.85h-0.85zM311.6 323.3h0.85v0.85h-0.85zM305.2 336.7h0.85v0.85h-0.85zM315.4 335.1h0.85v0.85h-0.85zM343.6 338.4h0.85v0.85h-0.85zM288.4 337.3h0.85v0.85h-0.85zM507.1 337.5h0.85v0.85h-0.85zM392.4 334.6h0.85v0.85h-0.85zM309.4 335.3h0.85v0.85h-0.85zM261.5 335.1h0.85v0.85h-0.85zM349.0 337.9h0.85v0.85h-0.85zM75.8 331.1h0.85v0.85h-0.85zM29.1 332.8h0.85v0.85h-0.85zM343.4 336.8h0.85v0.85h-0.85zM419.8 335.3h0.85v0.85h-0.85zM239.9 336.9h0.85v0.85h-0.85zM155.9 333.1h0.85v0.85h-0.85zM371.0 329.6h0.85v0.85h-0.85zM188.0 332.7h0.85v0.85h-0.85zM242.7 331.2h0.85v0.85h-0.85zM223.9 335.7h0.85v0.85h-0.85zM307.2 325.2h0.85v0.85h-0.85zM171.1 337.8h0.85v0.85h-0.85zM179.5 334.2h0.85v0.85h-0.85zM42.2 334.4h0.85v0.85h-0.85zM342.8 322.6h0.85v0.85h-0.85zM90.0 334.0h0.85v0.85h-0.85zM391.1 333.6h0.85v0.85h-0.85zM133.9 329.0h0.85v0.85h-0.85zM117.8 332.5h0.85v0.85h-0.85zM280.2 333.2h0.85v0.85h-0.85zM341.6 338.1h0.85v0.85h-0.85zM267.1 333.8h0.85v0.85h-0.85zM322.9 334.5h0.85v0.85h-0.85zM196.9 337.2h0.85v0.85h-0.85zM107.3 332.7h0.85v0.85h-0.85zM58.7 332.4h0.85v0.85h-0.85zM215.4 336.1h0.85v0.85h-0.85zM150.7 326.2h0.85v0.85h-0.85zM228.2 336.3h0.85v0.85h-0.85zM391.8 331.3h0.85v0.85h-0.85zM462.8 335.0h0.85v0.85h-0.85zM184.9 337.4h0.85v0.85h-0.85zM171.3 334.1h0.85v0.85h-0.85zM72.0 332.5h0.85v0.85h-0.85zM234.5 318.9h0.85v0.85h-0.85zM181.7 337.7h0.85v0.85h-0.85zM360.3 332.5h0.85v0.85h-0.85zM132.2 332.6h0.85v0.85h-0.85zM41.5 336.1h0.85v0.85h-0.85zM486.3 334.5h0.85v0.85h-0.85zM106.6 333.7h0.85v0.85h-0.85zM250.8 326.3h0.85v0.85h-0.85zM412.8 337.8h0.85v0.85h-0.85zM29.8 336.7h0.85v0.85h-0.85zM134.4 337.1h0.85v0.85h-0.85zM96.5 334.1h0.85v0.85h-0.85zM318.4 335.2h0.85v0.85h-0.85zM273.4 337.5h0.85v0.85h-0.85zM199.4 334.6h0.85v0.85h-0.85zM345.8 333.8h0.85v0.85h-0.85zM23.5 337.9h0.85v0.85h-0.85zM525.7 336.3h0.85v0.85h-0.85zM478.4 334.1h0.85v0.85h-0.85zM438.3 335.8h0.85v0.85h-0.85zM139.2 337.0h0.85v0.85h-0.85zM268.3 338.4h0.85v0.85h-0.85zM119.3 336.7h0.85v0.85h-0.85zM345.9 319.8h0.85v0.85h-0.85zM537.8 338.1h0.85v0.85h-0.85zM130.0 332.6h0.85v0.85h-0.85zM306.9 333.8h0.85v0.85h-0.85zM314.2 336.5h0.85v0.85h-0.85zM232.5 334.5h0.85v0.85h-0.85zM321.1 333.8h0.85v0.85h-0.85zM496.1 334.1h0.85v0.85h-0.85zM175.7 337.8h0.85v0.85h-0.85zM66.6 337.6h0.85v0.85h-0.85zM180.7 333.5h0.85v0.85h-0.85zM264.2 332.7h0.85v0.85h-0.85zM84.8 324.6h0.85v0.85h-0.85zM295.0 336.5h0.85v0.85h-0.85zM109.1 334.3h0.85v0.85h-0.85zM218.3 335.6h0.85v0.85h-0.85zM278.8 337.9h0.85v0.85h-0.85zM198.1 336.6h0.85v0.85h-0.85zM405.9 336.7h0.85v0.85h-0.85zM114.2 334.1h0.85v0.85h-0.85zM523.8 333.6h0.85v0.85h-0.85zM232.5 337.1h0.85v0.85h-0.85zM286.7 334.4h0.85v0.85h-0.85zM247.5 337.7h0.85v0.85h-0.85zM399.4 336.3h0.85v0.85h-0.85zM177.9 332.4h0.85v0.85h-0.85zM224.5 333.7h0.85v0.85h-0.85zM139.4 336.8h0.85v0.85h-0.85zM206.2 336.0h0.85v0.85h-0.85zM242.3 334.2h0.85v0.85h-0.85zM231.9 337.2h0.85v0.85h-0.85zM341.7 332.4h0.85v0.85h-0.85zM194.6 335.6h0.85v0.85h-0.85zM207.5 335.3h0.85v0.85h-0.85zM347.6 338.0h0.85v0.85h-0.85zM95.1 337.6h0.85v0.85h-0.85zM411.7 335.0h0.85v0.85h-0.85zM204.8 336.4h0.85v0.85h-0.85zM302.3 318.3h0.85v0.85h-0.85zM383.8 336.4h0.85v0.85h-0.85zM364.3 333.0h0.85v0.85h-0.85zM186.3 338.4h0.85v0.85h-0.85zM230.7 337.6h0.85v0.85h-0.85zM135.0 338.3h0.85v0.85h-0.85zM341.6 329.6h0.85v0.85h-0.85zM57.4 334.3h0.85v0.85h-0.85zM321.4 334.6h0.85v0.85h-0.85zM171.1 319.7h0.85v0.85h-0.85zM202.8 332.4h0.85v0.85h-0.85zM134.0 332.4h0.85v0.85h-0.85zM228.8 337.2h0.85v0.85h-0.85zM165.0 334.5h0.85v0.85h-0.85zM474.9 336.0h0.85v0.85h-0.85zM461.1 333.8h0.85v0.85h-0.85zM172.0 333.2h0.85v0.85h-0.85zM175.9 333.2h0.85v0.85h-0.85zM313.5 338.0h0.85v0.85h-0.85zM306.6 321.9h0.85v0.85h-0.85zM111.9 333.3h0.85v0.85h-0.85zM130.2 337.3h0.85v0.85h-0.85zM480.9 338.0h0.85v0.85h-0.85zM391.5 334.8h0.85v0.85h-0.85zM126.3 338.1h0.85v0.85h-0.85zM122.7 338.1h0.85v0.85h-0.85zM342.2 334.3h0.85v0.85h-0.85zM214.4 336.1h0.85v0.85h-0.85zM361.4 337.9h0.85v0.85h-0.85zM57.3 332.6h0.85v0.85h-0.85zM52.3 330.8h0.85v0.85h-0.85zM206.0 336.8h0.85v0.85h-0.85zM192.8 337.0h0.85v0.85h-0.85zM310.8 334.1h0.85v0.85h-0.85zM227.6 332.5h0.85v0.85h-0.85zM461.5 336.5h0.85v0.85h-0.85zM182.2 319.2h0.85v0.85h-0.85zM54.0 337.3h0.85v0.85h-0.85zM235.6 332.4h0.85v0.85h-0.85zM420.5 338.1h0.85v0.85h-0.85zM56.8 337.1h0.85v0.85h-0.85zM209.7 325.7h0.85v0.85h-0.85zM81.1 333.8h0.85v0.85h-0.85zM38.7 336.0h0.85v0.85h-0.85zM423.4 332.4h0.85v0.85h-0.85zM84.0 332.5h0.85v0.85h-0.85zM152.6 332.5h0.85v0.85h-0.85zM308.6 338.1h0.85v0.85h-0.85zM159.4 337.0h0.85v0.85h-0.85zM96.7 336.2h0.85v0.85h-0.85zM27.0 332.4h0.85v0.85h-0.85zM469.9 335.3h0.85v0.85h-0.85zM105.3 337.4h0.85v0.85h-0.85zM278.7 331.3h0.85v0.85h-0.85zM138.1 338.2h0.85v0.85h-0.85zM169.7 337.3h0.85v0.85h-0.85zM61.8 337.0h0.85v0.85h-0.85zM35.4 328.5h0.85v0.85h-0.85zM194.2 334.8h0.85v0.85h-0.85zM222.8 335.3h0.85v0.85h-0.85zM193.6 333.2h0.85v0.85h-0.85zM410.7 334.1h0.85v0.85h-0.85zM538.0 335.0h0.85v0.85h-0.85zM196.4 335.6h0.85v0.85h-0.85zM250.8 337.4h0.85v0.85h-0.85zM295.6 319.5h0.85v0.85h-0.85zM319.3 333.3h0.85v0.85h-0.85zM363.8 335.6h0.85v0.85h-0.85zM516.2 336.6h0.85v0.85h-0.85zM153.3 332.9h0.85v0.85h-0.85zM168.0 322.3h0.85v0.85h-0.85zM165.8 338.1h0.85v0.85h-0.85zM298.1 335.5h0.85v0.85h-0.85zM151.0 323.4h0.85v0.85h-0.85zM462.7 334.2h0.85v0.85h-0.85zM299.4 334.8h0.85v0.85h-0.85zM250.9 336.8h0.85v0.85h-0.85zM90.0 337.8h0.85v0.85h-0.85zM464.4 337.1h0.85v0.85h-0.85zM139.4 334.6h0.85v0.85h-0.85zM34.1 334.8h0.85v0.85h-0.85zM347.6 333.7h0.85v0.85h-0.85zM301.4 319.9h0.85v0.85h-0.85zM49.6 333.6h0.85v0.85h-0.85zM70.6 335.8h0.85v0.85h-0.85zM136.0 334.5h0.85v0.85h-0.85zM407.9 334.2h0.85v0.85h-0.85zM520.8 326.1h0.85v0.85h-0.85zM290.4 333.2h0.85v0.85h-0.85zM146.4 334.5h0.85v0.85h-0.85zM366.9 332.7h0.85v0.85h-0.85zM28.6 336.0h0.85v0.85h-0.85zM230.8 335.7h0.85v0.85h-0.85zM111.4 333.4h0.85v0.85h-0.85zM146.1 333.3h0.85v0.85h-0.85zM222.2 334.3h0.85v0.85h-0.85zM169.4 331.4h0.85v0.85h-0.85zM334.9 327.0h0.85v0.85h-0.85zM344.4 335.0h0.85v0.85h-0.85zM248.3 336.8h0.85v0.85h-0.85zM316.0 335.1h0.85v0.85h-0.85zM371.6 333.5h0.85v0.85h-0.85zM193.2 336.8h0.85v0.85h-0.85zM201.7 338.0h0.85v0.85h-0.85zM301.4 332.6h0.85v0.85h-0.85zM109.0 335.6h0.85v0.85h-0.85zM179.4 333.5h0.85v0.85h-0.85zM84.7 333.9h0.85v0.85h-0.85zM203.5 336.2h0.85v0.85h-0.85zM125.6 332.4h0.85v0.85h-0.85zM292.0 332.5h0.85v0.85h-0.85zM489.2 336.7h0.85v0.85h-0.85zM277.2 325.7h0.85v0.85h-0.85zM276.8 337.8h0.85v0.85h-0.85zM409.5 329.2h0.85v0.85h-0.85zM166.2 337.0h0.85v0.85h-0.85zM472.0 325.8h0.85v0.85h-0.85zM464.8 337.1h0.85v0.85h-0.85zM144.7 336.1h0.85v0.85h-0.85zM95.0 333.5h0.85v0.85h-0.85zM410.7 338.1h0.85v0.85h-0.85zM296.6 336.2h0.85v0.85h-0.85zM136.7 336.3h0.85v0.85h-0.85zM463.4 338.2h0.85v0.85h-0.85zM259.7 334.1h0.85v0.85h-0.85zM144.6 336.3h0.85v0.85h-0.85zM23.9 323.5h0.85v0.85h-0.85zM133.8 333.1h0.85v0.85h-0.85zM40.2 337.7h0.85v0.85h-0.85zM424.3 337.9h0.85v0.85h-0.85zM353.8 337.4h0.85v0.85h-0.85zM86.9 328.8h0.85v0.85h-0.85zM277.9 335.3h0.85v0.85h-0.85zM87.0 325.5h0.85v0.85h-0.85zM206.9 332.6h0.85v0.85h-0.85zM239.9 338.4h0.85v0.85h-0.85zM294.9 327.8h0.85v0.85h-0.85zM211.9 335.3h0.85v0.85h-0.85zM207.3 337.8h0.85v0.85h-0.85zM508.5 327.9h0.85v0.85h-0.85zM343.4 333.8h0.85v0.85h-0.85zM78.8 333.4h0.85v0.85h-0.85zM427.6 334.8h0.85v0.85h-0.85zM418.8 333.7h0.85v0.85h-0.85zM192.3 333.0h0.85v0.85h-0.85zM244.3 333.8h0.85v0.85h-0.85zM53.4 338.1h0.85v0.85h-0.85zM395.2 335.4h0.85v0.85h-0.85zM55.7 335.5h0.85v0.85h-0.85zM381.9 333.3h0.85v0.85h-0.85zM262.3 328.4h0.85v0.85h-0.85zM387.2 333.2h0.85v0.85h-0.85zM92.1 334.8h0.85v0.85h-0.85zM499.3 318.6h0.85v0.85h-0.85zM126.9 332.4h0.85v0.85h-0.85zM332.6 321.3h0.85v0.85h-0.85zM362.7 336.4h0.85v0.85h-0.85zM157.6 337.8h0.85v0.85h-0.85zM72.0 322.3h0.85v0.85h-0.85zM459.5 333.1h0.85v0.85h-0.85zM352.4 332.9h0.85v0.85h-0.85zM100.2 334.9h0.85v0.85h-0.85zM154.0 336.3h0.85v0.85h-0.85zM283.1 337.9h0.85v0.85h-0.85zM52.7 319.0h0.85v0.85h-0.85zM232.0 337.0h0.85v0.85h-0.85zM432.3 335.5h0.85v0.85h-0.85zM221.1 335.7h0.85v0.85h-0.85zM447.6 336.7h0.85v0.85h-0.85zM265.2 332.8h0.85v0.85h-0.85zM340.2 336.4h0.85v0.85h-0.85zM122.5 329.5h0.85v0.85h-0.85zM377.2 334.4h0.85v0.85h-0.85zM75.8 322.1h0.85v0.85h-0.85zM285.5 335.5h0.85v0.85h-0.85zM80.3 338.1h0.85v0.85h-0.85zM382.0 334.1h0.85v0.85h-0.85zM30.1 333.9h0.85v0.85h-0.85zM186.7 333.7h0.85v0.85h-0.85zM23.6 334.6h0.85v0.85h-0.85zM298.9 330.4h0.85v0.85h-0.85zM185.0 332.4h0.85v0.85h-0.85zM139.2 337.1h0.85v0.85h-0.85zM77.7 332.8h0.85v0.85h-0.85zM28.2 334.7h0.85v0.85h-0.85zM190.0 334.3h0.85v0.85h-0.85zM296.3 329.2h0.85v0.85h-0.85zM393.3 333.3h0.85v0.85h-0.85zM215.0 326.0h0.85v0.85h-0.85zM288.5 333.6h0.85v0.85h-0.85zM172.8 332.7h0.85v0.85h-0.85zM275.6 335.5h0.85v0.85h-0.85zM251.5 330.5h0.85v0.85h-0.85zM150.9 334.0h0.85v0.85h-0.85zM220.2 337.9h0.85v0.85h-0.85zM175.1 336.7h0.85v0.85h-0.85zM391.7 333.3h0.85v0.85h-0.85zM140.7 318.7h0.85v0.85h-0.85zM275.7 332.7h0.85v0.85h-0.85zM53.8 326.9h0.85v0.85h-0.85zM531.4 338.3h0.85v0.85h-0.85zM368.2 338.2h0.85v0.85h-0.85zM407.0 333.7h0.85v0.85h-0.85zM350.9 323.3h0.85v0.85h-0.85zM233.3 336.3h0.85v0.85h-0.85zM273.7 338.4h0.85v0.85h-0.85zM28.1 333.8h0.85v0.85h-0.85zM116.8 334.9h0.85v0.85h-0.85zM88.2 338.3h0.85v0.85h-0.85zM248.7 336.6h0.85v0.85h-0.85zM331.8 337.1h0.85v0.85h-0.85zM409.3 325.1h0.85v0.85h-0.85zM312.4 336.8h0.85v0.85h-0.85zM203.6 334.9h0.85v0.85h-0.85zM136.8 337.7h0.85v0.85h-0.85zM387.7 332.6h0.85v0.85h-0.85zM274.5 337.0h0.85v0.85h-0.85zM539.6 332.9h0.85v0.85h-0.85zM137.9 337.5h0.85v0.85h-0.85zM198.9 336.3h0.85v0.85h-0.85zM179.8 338.3h0.85v0.85h-0.85zM536.7 336.5h0.85v0.85h-0.85zM246.2 338.4h0.85v0.85h-0.85zM85.2 335.3h0.85v0.85h-0.85zM98.7 337.8h0.85v0.85h-0.85zM69.5 334.7h0.85v0.85h-0.85zM96.4 336.9h0.85v0.85h-0.85zM260.6 333.0h0.85v0.85h-0.85zM59.9 334.4h0.85v0.85h-0.85zM73.9 333.4h0.85v0.85h-0.85zM315.0 336.1h0.85v0.85h-0.85zM300.8 335.6h0.85v0.85h-0.85zM302.0 333.8h0.85v0.85h-0.85zM103.0 338.2h0.85v0.85h-0.85zM27.3 334.1h0.85v0.85h-0.85zM200.8 338.2h0.85v0.85h-0.85zM210.9 334.4h0.85v0.85h-0.85zM48.2 334.3h0.85v0.85h-0.85zM124.2 333.2h0.85v0.85h-0.85zM190.0 335.2h0.85v0.85h-0.85zM193.6 334.4h0.85v0.85h-0.85zM94.8 333.4h0.85v0.85h-0.85zM47.3 333.0h0.85v0.85h-0.85zM94.7 333.0h0.85v0.85h-0.85zM196.9 335.8h0.85v0.85h-0.85zM329.4 337.3h0.85v0.85h-0.85zM253.9 335.7h0.85v0.85h-0.85zM294.7 333.5h0.85v0.85h-0.85zM194.1 323.0h0.85v0.85h-0.85zM84.2 333.4h0.85v0.85h-0.85zM347.7 337.9h0.85v0.85h-0.85zM452.9 334.2h0.85v0.85h-0.85z" fill="#a03a2a" fill-opacity="0.5"/>
<path d="M240.8 336.3h0.85v0.85h-0.85zM84.5 335.8h0.85v0.85h-0.85zM117.1 334.9h0.85v0.85h-0.85zM132.3 329.6h0.85v0.85h-0.85zM163.9 328.8h0.85v0.85h-0.85zM141.9 335.4h0.85v0.85h-0.85zM153.3 331.5h0.85v0.85h-0.85zM153.2 335.2h0.85v0.85h-0.85zM410.6 330.0h0.85v0.85h-0.85zM187.2 327.8h0.85v0.85h-0.85zM132.0 334.1h0.85v0.85h-0.85zM322.1 333.8h0.85v0.85h-0.85zM104.4 336.2h0.85v0.85h-0.85zM246.5 336.8h0.85v0.85h-0.85zM191.3 333.3h0.85v0.85h-0.85zM183.9 336.8h0.85v0.85h-0.85zM259.9 337.4h0.85v0.85h-0.85zM30.5 336.2h0.85v0.85h-0.85zM276.3 338.0h0.85v0.85h-0.85zM210.2 330.1h0.85v0.85h-0.85zM377.0 332.7h0.85v0.85h-0.85zM341.8 335.8h0.85v0.85h-0.85zM329.5 335.4h0.85v0.85h-0.85zM188.2 333.4h0.85v0.85h-0.85zM224.9 333.6h0.85v0.85h-0.85zM311.6 332.9h0.85v0.85h-0.85zM319.0 335.2h0.85v0.85h-0.85zM59.4 335.5h0.85v0.85h-0.85zM304.6 334.0h0.85v0.85h-0.85zM253.9 333.3h0.85v0.85h-0.85zM37.3 333.6h0.85v0.85h-0.85zM120.7 326.8h0.85v0.85h-0.85zM341.7 332.2h0.85v0.85h-0.85zM72.1 337.8h0.85v0.85h-0.85zM66.7 326.5h0.85v0.85h-0.85zM87.4 328.5h0.85v0.85h-0.85zM146.5 332.3h0.85v0.85h-0.85zM212.3 327.1h0.85v0.85h-0.85zM402.0 334.4h0.85v0.85h-0.85zM48.2 335.7h0.85v0.85h-0.85zM46.2 336.1h0.85v0.85h-0.85zM249.3 334.6h0.85v0.85h-0.85zM230.6 332.1h0.85v0.85h-0.85zM231.6 335.9h0.85v0.85h-0.85zM187.9 329.9h0.85v0.85h-0.85zM376.5 334.9h0.85v0.85h-0.85zM240.0 335.9h0.85v0.85h-0.85zM313.0 337.2h0.85v0.85h-0.85zM235.5 338.1h0.85v0.85h-0.85zM222.2 335.8h0.85v0.85h-0.85zM249.6 333.2h0.85v0.85h-0.85zM173.7 334.9h0.85v0.85h-0.85zM389.9 336.0h0.85v0.85h-0.85zM373.2 338.1h0.85v0.85h-0.85zM224.4 336.5h0.85v0.85h-0.85zM253.8 336.7h0.85v0.85h-0.85zM388.6 328.7h0.85v0.85h-0.85zM50.8 338.1h0.85v0.85h-0.85zM75.0 337.6h0.85v0.85h-0.85zM52.4 332.1h0.85v0.85h-0.85zM222.2 337.7h0.85v0.85h-0.85zM281.4 335.3h0.85v0.85h-0.85zM216.7 337.0h0.85v0.85h-0.85zM256.3 333.1h0.85v0.85h-0.85zM147.3 336.6h0.85v0.85h-0.85zM238.1 335.1h0.85v0.85h-0.85zM90.9 335.9h0.85v0.85h-0.85zM134.8 333.6h0.85v0.85h-0.85zM165.7 337.0h0.85v0.85h-0.85zM116.3 333.3h0.85v0.85h-0.85zM128.5 337.6h0.85v0.85h-0.85zM115.6 332.7h0.85v0.85h-0.85zM444.9 337.2h0.85v0.85h-0.85zM355.3 332.5h0.85v0.85h-0.85zM251.3 333.9h0.85v0.85h-0.85zM340.3 335.9h0.85v0.85h-0.85zM129.7 338.1h0.85v0.85h-0.85zM154.1 337.3h0.85v0.85h-0.85zM64.3 327.4h0.85v0.85h-0.85zM283.1 328.5h0.85v0.85h-0.85zM100.5 333.4h0.85v0.85h-0.85zM520.5 333.0h0.85v0.85h-0.85zM130.6 326.7h0.85v0.85h-0.85zM320.9 332.1h0.85v0.85h-0.85zM190.9 336.7h0.85v0.85h-0.85zM78.0 338.2h0.85v0.85h-0.85zM133.0 334.1h0.85v0.85h-0.85zM59.7 326.1h0.85v0.85h-0.85zM192.9 325.9h0.85v0.85h-0.85zM420.0 329.1h0.85v0.85h-0.85zM52.2 334.3h0.85v0.85h-0.85zM384.5 332.1h0.85v0.85h-0.85zM111.2 330.8h0.85v0.85h-0.85zM146.2 333.8h0.85v0.85h-0.85zM410.9 330.2h0.85v0.85h-0.85zM46.1 333.0h0.85v0.85h-0.85zM36.7 334.9h0.85v0.85h-0.85zM59.8 330.2h0.85v0.85h-0.85zM367.8 333.7h0.85v0.85h-0.85zM66.1 336.5h0.85v0.85h-0.85zM149.9 327.6h0.85v0.85h-0.85zM258.8 337.9h0.85v0.85h-0.85zM217.2 327.6h0.85v0.85h-0.85zM218.8 337.0h0.85v0.85h-0.85zM189.7 332.2h0.85v0.85h-0.85zM179.3 333.3h0.85v0.85h-0.85zM165.5 335.8h0.85v0.85h-0.85zM359.6 334.7h0.85v0.85h-0.85zM243.4 334.0h0.85v0.85h-0.85zM162.3 334.4h0.85v0.85h-0.85zM295.8 330.6h0.85v0.85h-0.85zM384.6 332.2h0.85v0.85h-0.85zM148.5 332.8h0.85v0.85h-0.85zM246.3 336.3h0.85v0.85h-0.85zM273.9 336.4h0.85v0.85h-0.85zM115.5 332.6h0.85v0.85h-0.85zM309.2 338.2h0.85v0.85h-0.85zM351.0 336.8h0.85v0.85h-0.85zM329.6 335.5h0.85v0.85h-0.85zM379.5 328.9h0.85v0.85h-0.85zM290.2 332.9h0.85v0.85h-0.85zM413.0 333.6h0.85v0.85h-0.85zM214.8 335.2h0.85v0.85h-0.85zM80.5 329.8h0.85v0.85h-0.85zM314.6 337.3h0.85v0.85h-0.85zM132.8 338.3h0.85v0.85h-0.85zM247.1 329.3h0.85v0.85h-0.85zM41.9 335.9h0.85v0.85h-0.85zM413.0 337.0h0.85v0.85h-0.85zM389.5 333.4h0.85v0.85h-0.85zM174.0 334.0h0.85v0.85h-0.85zM342.6 338.4h0.85v0.85h-0.85zM214.5 332.3h0.85v0.85h-0.85zM145.4 333.4h0.85v0.85h-0.85zM320.7 332.4h0.85v0.85h-0.85zM162.0 332.5h0.85v0.85h-0.85zM51.1 337.8h0.85v0.85h-0.85zM204.2 335.1h0.85v0.85h-0.85zM200.0 337.5h0.85v0.85h-0.85zM280.9 334.7h0.85v0.85h-0.85zM68.2 337.9h0.85v0.85h-0.85zM136.3 336.0h0.85v0.85h-0.85zM406.0 337.3h0.85v0.85h-0.85zM206.2 330.6h0.85v0.85h-0.85zM367.4 328.1h0.85v0.85h-0.85zM367.1 333.5h0.85v0.85h-0.85zM167.4 328.0h0.85v0.85h-0.85zM162.3 335.6h0.85v0.85h-0.85zM231.3 327.2h0.85v0.85h-0.85zM196.3 337.9h0.85v0.85h-0.85zM46.3 329.4h0.85v0.85h-0.85zM216.7 332.9h0.85v0.85h-0.85zM350.7 327.2h0.85v0.85h-0.85zM75.1 326.0h0.85v0.85h-0.85zM241.8 334.9h0.85v0.85h-0.85zM385.1 337.1h0.85v0.85h-0.85zM259.6 336.7h0.85v0.85h-0.85zM340.5 334.3h0.85v0.85h-0.85zM313.6 333.0h0.85v0.85h-0.85zM414.5 337.5h0.85v0.85h-0.85zM68.4 334.5h0.85v0.85h-0.85zM327.1 325.8h0.85v0.85h-0.85zM24.7 335.3h0.85v0.85h-0.85zM137.5 329.8h0.85v0.85h-0.85zM344.9 337.6h0.85v0.85h-0.85zM191.0 336.1h0.85v0.85h-0.85zM324.3 336.1h0.85v0.85h-0.85zM286.4 332.3h0.85v0.85h-0.85zM236.3 337.0h0.85v0.85h-0.85zM378.1 332.8h0.85v0.85h-0.85zM372.6 334.2h0.85v0.85h-0.85zM125.8 327.3h0.85v0.85h-0.85zM102.2 338.1h0.85v0.85h-0.85zM275.5 334.3h0.85v0.85h-0.85zM229.9 325.9h0.85v0.85h-0.85zM286.4 333.1h0.85v0.85h-0.85zM345.7 335.2h0.85v0.85h-0.85zM232.9 337.2h0.85v0.85h-0.85zM153.0 333.5h0.85v0.85h-0.85zM106.0 327.2h0.85v0.85h-0.85zM319.0 338.3h0.85v0.85h-0.85zM96.5 335.9h0.85v0.85h-0.85zM476.6 335.0h0.85v0.85h-0.85zM136.8 335.7h0.85v0.85h-0.85zM320.1 333.8h0.85v0.85h-0.85zM330.2 333.6h0.85v0.85h-0.85zM50.9 334.1h0.85v0.85h-0.85zM354.7 332.1h0.85v0.85h-0.85zM225.0 326.4h0.85v0.85h-0.85zM535.7 335.9h0.85v0.85h-0.85zM344.8 327.4h0.85v0.85h-0.85zM316.4 337.5h0.85v0.85h-0.85zM213.7 336.0h0.85v0.85h-0.85zM307.4 334.1h0.85v0.85h-0.85zM404.9 337.0h0.85v0.85h-0.85zM42.4 336.4h0.85v0.85h-0.85zM405.6 337.3h0.85v0.85h-0.85zM203.3 332.6h0.85v0.85h-0.85zM328.9 338.3h0.85v0.85h-0.85zM255.3 335.5h0.85v0.85h-0.85zM43.8 332.0h0.85v0.85h-0.85zM404.9 333.8h0.85v0.85h-0.85zM161.8 337.5h0.85v0.85h-0.85zM368.1 335.1h0.85v0.85h-0.85zM41.3 338.4h0.85v0.85h-0.85zM287.3 336.0h0.85v0.85h-0.85zM238.5 337.4h0.85v0.85h-0.85zM315.9 338.0h0.85v0.85h-0.85zM89.0 335.4h0.85v0.85h-0.85zM289.2 329.0h0.85v0.85h-0.85zM54.5 338.4h0.85v0.85h-0.85zM432.8 328.9h0.85v0.85h-0.85zM427.2 337.6h0.85v0.85h-0.85zM215.2 327.4h0.85v0.85h-0.85zM370.5 331.8h0.85v0.85h-0.85zM221.0 336.6h0.85v0.85h-0.85zM65.0 331.5h0.85v0.85h-0.85zM430.2 335.2h0.85v0.85h-0.85zM230.2 337.4h0.85v0.85h-0.85zM410.6 330.4h0.85v0.85h-0.85zM258.4 333.7h0.85v0.85h-0.85zM353.7 336.3h0.85v0.85h-0.85zM422.6 333.6h0.85v0.85h-0.85zM394.8 338.3h0.85v0.85h-0.85zM361.2 335.9h0.85v0.85h-0.85zM133.4 336.7h0.85v0.85h-0.85zM286.8 326.1h0.85v0.85h-0.85zM264.9 338.0h0.85v0.85h-0.85zM203.4 334.1h0.85v0.85h-0.85zM148.5 326.2h0.85v0.85h-0.85zM97.3 333.9h0.85v0.85h-0.85zM210.6 333.2h0.85v0.85h-0.85zM230.6 336.7h0.85v0.85h-0.85zM52.9 332.6h0.85v0.85h-0.85zM38.8 334.9h0.85v0.85h-0.85zM271.4 329.5h0.85v0.85h-0.85zM202.4 337.5h0.85v0.85h-0.85zM165.8 335.5h0.85v0.85h-0.85zM209.9 335.7h0.85v0.85h-0.85zM144.3 334.7h0.85v0.85h-0.85zM43.7 333.6h0.85v0.85h-0.85zM158.8 335.5h0.85v0.85h-0.85zM217.3 334.7h0.85v0.85h-0.85zM38.4 332.3h0.85v0.85h-0.85zM261.2 335.7h0.85v0.85h-0.85zM350.8 333.3h0.85v0.85h-0.85zM175.4 337.9h0.85v0.85h-0.85zM84.0 337.1h0.85v0.85h-0.85zM290.4 338.4h0.85v0.85h-0.85zM359.1 335.6h0.85v0.85h-0.85zM76.9 332.6h0.85v0.85h-0.85zM154.0 336.0h0.85v0.85h-0.85zM275.8 332.9h0.85v0.85h-0.85zM345.0 333.4h0.85v0.85h-0.85zM80.0 328.4h0.85v0.85h-0.85zM303.6 336.3h0.85v0.85h-0.85zM166.2 332.1h0.85v0.85h-0.85zM228.7 330.0h0.85v0.85h-0.85zM191.1 327.7h0.85v0.85h-0.85zM284.3 336.0h0.85v0.85h-0.85zM127.1 337.6h0.85v0.85h-0.85zM236.6 337.4h0.85v0.85h-0.85zM51.8 326.7h0.85v0.85h-0.85zM55.2 327.2h0.85v0.85h-0.85zM36.3 338.2h0.85v0.85h-0.85zM378.2 335.8h0.85v0.85h-0.85zM299.4 334.3h0.85v0.85h-0.85zM255.5 329.9h0.85v0.85h-0.85zM31.0 332.5h0.85v0.85h-0.85zM109.1 332.4h0.85v0.85h-0.85zM198.1 335.9h0.85v0.85h-0.85zM300.5 332.7h0.85v0.85h-0.85zM332.5 332.1h0.85v0.85h-0.85zM41.8 332.4h0.85v0.85h-0.85zM201.8 334.4h0.85v0.85h-0.85zM58.6 335.7h0.85v0.85h-0.85zM56.8 337.9h0.85v0.85h-0.85zM49.6 336.0h0.85v0.85h-0.85zM341.0 335.3h0.85v0.85h-0.85zM232.9 329.4h0.85v0.85h-0.85zM122.9 335.9h0.85v0.85h-0.85zM311.4 336.9h0.85v0.85h-0.85zM100.2 334.5h0.85v0.85h-0.85zM432.1 331.1h0.85v0.85h-0.85zM125.9 330.8h0.85v0.85h-0.85zM370.5 333.6h0.85v0.85h-0.85zM253.7 334.9h0.85v0.85h-0.85zM156.7 335.4h0.85v0.85h-0.85zM204.9 332.2h0.85v0.85h-0.85zM327.3 337.7h0.85v0.85h-0.85zM302.7 328.7h0.85v0.85h-0.85zM261.9 335.8h0.85v0.85h-0.85zM362.7 338.0h0.85v0.85h-0.85zM361.2 338.1h0.85v0.85h-0.85zM115.7 328.7h0.85v0.85h-0.85zM381.6 338.4h0.85v0.85h-0.85zM49.4 333.8h0.85v0.85h-0.85zM32.1 336.9h0.85v0.85h-0.85zM493.2 336.3h0.85v0.85h-0.85zM168.2 337.7h0.85v0.85h-0.85zM395.1 333.7h0.85v0.85h-0.85zM106.1 331.8h0.85v0.85h-0.85zM237.6 337.8h0.85v0.85h-0.85zM265.0 328.4h0.85v0.85h-0.85zM262.5 338.3h0.85v0.85h-0.85zM58.3 338.3h0.85v0.85h-0.85zM249.8 332.4h0.85v0.85h-0.85zM346.5 336.6h0.85v0.85h-0.85zM161.5 334.4h0.85v0.85h-0.85zM260.3 335.6h0.85v0.85h-0.85zM118.3 335.0h0.85v0.85h-0.85zM127.1 333.0h0.85v0.85h-0.85zM74.0 332.4h0.85v0.85h-0.85zM49.6 336.5h0.85v0.85h-0.85zM241.2 331.9h0.85v0.85h-0.85zM246.0 335.2h0.85v0.85h-0.85zM371.2 333.0h0.85v0.85h-0.85zM37.4 333.1h0.85v0.85h-0.85zM166.2 333.7h0.85v0.85h-0.85zM23.4 335.4h0.85v0.85h-0.85zM79.5 338.3h0.85v0.85h-0.85zM90.6 334.2h0.85v0.85h-0.85zM86.7 333.7h0.85v0.85h-0.85zM281.0 326.0h0.85v0.85h-0.85zM173.9 335.9h0.85v0.85h-0.85zM240.0 335.7h0.85v0.85h-0.85zM161.1 337.1h0.85v0.85h-0.85zM377.0 334.3h0.85v0.85h-0.85zM121.3 334.2h0.85v0.85h-0.85zM451.5 336.1h0.85v0.85h-0.85zM137.1 328.4h0.85v0.85h-0.85zM48.2 335.1h0.85v0.85h-0.85zM213.8 337.3h0.85v0.85h-0.85zM60.6 329.1h0.85v0.85h-0.85zM264.4 325.8h0.85v0.85h-0.85zM260.5 328.1h0.85v0.85h-0.85zM323.4 333.9h0.85v0.85h-0.85zM136.0 338.4h0.85v0.85h-0.85zM87.2 334.0h0.85v0.85h-0.85zM336.9 335.9h0.85v0.85h-0.85zM336.6 334.3h0.85v0.85h-0.85zM23.0 329.1h0.85v0.85h-0.85zM94.9 333.7h0.85v0.85h-0.85zM142.3 333.0h0.85v0.85h-0.85zM363.2 335.0h0.85v0.85h-0.85zM167.9 328.4h0.85v0.85h-0.85zM287.3 337.4h0.85v0.85h-0.85zM185.7 338.4h0.85v0.85h-0.85zM138.5 334.1h0.85v0.85h-0.85zM85.5 336.3h0.85v0.85h-0.85zM42.0 338.2h0.85v0.85h-0.85zM259.0 331.4h0.85v0.85h-0.85zM191.7 338.3h0.85v0.85h-0.85zM360.5 337.8h0.85v0.85h-0.85zM102.6 336.8h0.85v0.85h-0.85zM190.8 333.2h0.85v0.85h-0.85zM359.7 336.8h0.85v0.85h-0.85zM337.1 332.7h0.85v0.85h-0.85zM389.3 334.8h0.85v0.85h-0.85zM114.8 335.1h0.85v0.85h-0.85zM466.3 336.5h0.85v0.85h-0.85zM428.5 329.2h0.85v0.85h-0.85zM363.4 335.7h0.85v0.85h-0.85zM274.4 331.4h0.85v0.85h-0.85zM344.9 327.6h0.85v0.85h-0.85zM21.5 333.8h0.85v0.85h-0.85zM51.0 338.5h0.85v0.85h-0.85zM423.5 333.7h0.85v0.85h-0.85zM202.2 337.5h0.85v0.85h-0.85zM237.7 335.7h0.85v0.85h-0.85zM159.3 338.4h0.85v0.85h-0.85zM102.9 335.8h0.85v0.85h-0.85zM39.8 332.8h0.85v0.85h-0.85zM305.8 336.1h0.85v0.85h-0.85zM163.4 326.2h0.85v0.85h-0.85zM53.9 326.6h0.85v0.85h-0.85zM145.9 332.9h0.85v0.85h-0.85zM233.6 333.9h0.85v0.85h-0.85zM116.2 333.7h0.85v0.85h-0.85zM169.2 338.1h0.85v0.85h-0.85zM174.3 328.3h0.85v0.85h-0.85zM130.5 332.6h0.85v0.85h-0.85zM69.6 336.2h0.85v0.85h-0.85zM404.3 337.0h0.85v0.85h-0.85zM292.0 326.2h0.85v0.85h-0.85zM279.3 326.7h0.85v0.85h-0.85zM57.5 333.4h0.85v0.85h-0.85zM171.4 330.2h0.85v0.85h-0.85zM363.6 335.5h0.85v0.85h-0.85zM158.2 330.4h0.85v0.85h-0.85zM355.3 332.1h0.85v0.85h-0.85zM149.2 333.9h0.85v0.85h-0.85zM36.8 333.4h0.85v0.85h-0.85zM301.2 336.1h0.85v0.85h-0.85zM223.1 330.6h0.85v0.85h-0.85zM295.7 334.3h0.85v0.85h-0.85zM385.5 328.1h0.85v0.85h-0.85zM191.8 337.7h0.85v0.85h-0.85zM95.0 332.2h0.85v0.85h-0.85zM132.4 337.7h0.85v0.85h-0.85zM35.8 332.6h0.85v0.85h-0.85zM332.5 333.1h0.85v0.85h-0.85zM155.0 332.3h0.85v0.85h-0.85zM377.7 335.0h0.85v0.85h-0.85zM57.9 333.5h0.85v0.85h-0.85zM40.9 332.6h0.85v0.85h-0.85zM71.2 338.0h0.85v0.85h-0.85zM422.7 338.0h0.85v0.85h-0.85zM184.3 337.1h0.85v0.85h-0.85zM35.4 332.8h0.85v0.85h-0.85zM271.0 336.1h0.85v0.85h-0.85zM181.1 336.6h0.85v0.85h-0.85zM198.7 328.5h0.85v0.85h-0.85zM175.7 326.3h0.85v0.85h-0.85zM210.4 332.1h0.85v0.85h-0.85zM28.7 336.9h0.85v0.85h-0.85zM354.7 325.9h0.85v0.85h-0.85zM227.3 334.0h0.85v0.85h-0.85zM421.6 333.9h0.85v0.85h-0.85zM268.9 335.7h0.85v0.85h-0.85zM66.1 332.8h0.85v0.85h-0.85zM276.0 335.9h0.85v0.85h-0.85zM92.4 333.2h0.85v0.85h-0.85zM344.2 335.8h0.85v0.85h-0.85zM316.6 338.1h0.85v0.85h-0.85zM404.3 335.7h0.85v0.85h-0.85zM94.2 337.8h0.85v0.85h-0.85zM41.5 331.4h0.85v0.85h-0.85zM61.6 333.2h0.85v0.85h-0.85zM187.5 336.4h0.85v0.85h-0.85zM369.7 336.1h0.85v0.85h-0.85zM263.2 335.7h0.85v0.85h-0.85zM131.2 337.5h0.85v0.85h-0.85zM61.1 337.5h0.85v0.85h-0.85zM67.9 333.2h0.85v0.85h-0.85zM95.8 336.8h0.85v0.85h-0.85zM236.9 336.2h0.85v0.85h-0.85zM79.5 338.4h0.85v0.85h-0.85zM206.2 338.0h0.85v0.85h-0.85zM288.4 336.3h0.85v0.85h-0.85zM170.8 337.0h0.85v0.85h-0.85zM92.9 325.7h0.85v0.85h-0.85zM149.6 334.6h0.85v0.85h-0.85zM88.2 333.0h0.85v0.85h-0.85zM38.6 332.3h0.85v0.85h-0.85zM396.8 333.0h0.85v0.85h-0.85zM366.0 335.6h0.85v0.85h-0.85zM78.2 333.0h0.85v0.85h-0.85zM180.4 330.8h0.85v0.85h-0.85zM128.3 334.8h0.85v0.85h-0.85zM421.1 336.2h0.85v0.85h-0.85zM247.2 333.7h0.85v0.85h-0.85zM291.2 332.6h0.85v0.85h-0.85zM220.8 337.2h0.85v0.85h-0.85zM63.7 335.8h0.85v0.85h-0.85zM118.1 337.6h0.85v0.85h-0.85zM417.0 335.3h0.85v0.85h-0.85zM21.6 338.1h0.85v0.85h-0.85zM98.6 333.6h0.85v0.85h-0.85zM271.2 328.1h0.85v0.85h-0.85zM136.3 329.1h0.85v0.85h-0.85zM201.3 333.5h0.85v0.85h-0.85zM207.0 338.0h0.85v0.85h-0.85zM395.7 337.4h0.85v0.85h-0.85zM299.7 335.4h0.85v0.85h-0.85zM236.8 337.0h0.85v0.85h-0.85zM242.8 336.8h0.85v0.85h-0.85zM280.2 329.2h0.85v0.85h-0.85zM202.1 337.3h0.85v0.85h-0.85zM287.4 336.4h0.85v0.85h-0.85zM39.1 333.1h0.85v0.85h-0.85zM378.4 334.3h0.85v0.85h-0.85zM267.5 333.5h0.85v0.85h-0.85zM152.9 335.0h0.85v0.85h-0.85zM311.8 335.6h0.85v0.85h-0.85zM75.9 335.4h0.85v0.85h-0.85zM222.2 335.7h0.85v0.85h-0.85zM221.5 327.5h0.85v0.85h-0.85zM166.8 333.5h0.85v0.85h-0.85zM85.0 332.8h0.85v0.85h-0.85zM256.0 337.3h0.85v0.85h-0.85zM382.6 337.0h0.85v0.85h-0.85zM76.6 334.9h0.85v0.85h-0.85zM28.9 333.7h0.85v0.85h-0.85zM115.8 333.5h0.85v0.85h-0.85zM372.3 331.0h0.85v0.85h-0.85zM59.5 332.8h0.85v0.85h-0.85zM211.7 333.6h0.85v0.85h-0.85zM195.5 336.3h0.85v0.85h-0.85zM121.4 328.5h0.85v0.85h-0.85zM331.6 331.5h0.85v0.85h-0.85zM229.1 335.8h0.85v0.85h-0.85zM138.6 338.1h0.85v0.85h-0.85zM99.2 336.0h0.85v0.85h-0.85zM371.8 336.5h0.85v0.85h-0.85zM193.3 332.9h0.85v0.85h-0.85zM140.4 333.3h0.85v0.85h-0.85zM170.7 335.2h0.85v0.85h-0.85zM250.3 334.4h0.85v0.85h-0.85zM183.4 336.1h0.85v0.85h-0.85zM222.6 334.5h0.85v0.85h-0.85zM33.7 333.3h0.85v0.85h-0.85zM302.4 335.1h0.85v0.85h-0.85zM129.5 338.3h0.85v0.85h-0.85zM411.4 332.3h0.85v0.85h-0.85zM228.4 334.1h0.85v0.85h-0.85zM123.1 335.9h0.85v0.85h-0.85zM225.7 338.2h0.85v0.85h-0.85zM176.0 337.5h0.85v0.85h-0.85zM411.5 334.2h0.85v0.85h-0.85zM238.1 333.1h0.85v0.85h-0.85zM34.9 336.2h0.85v0.85h-0.85zM367.8 335.6h0.85v0.85h-0.85zM191.9 338.2h0.85v0.85h-0.85zM244.9 326.6h0.85v0.85h-0.85zM368.7 333.0h0.85v0.85h-0.85zM424.9 332.7h0.85v0.85h-0.85zM182.8 333.2h0.85v0.85h-0.85zM388.2 331.0h0.85v0.85h-0.85zM46.1 334.9h0.85v0.85h-0.85zM164.4 328.5h0.85v0.85h-0.85zM345.8 332.5h0.85v0.85h-0.85zM76.7 329.9h0.85v0.85h-0.85zM101.0 329.7h0.85v0.85h-0.85zM67.4 335.5h0.85v0.85h-0.85zM57.2 337.6h0.85v0.85h-0.85zM207.8 333.5h0.85v0.85h-0.85zM312.6 326.2h0.85v0.85h-0.85zM266.5 337.7h0.85v0.85h-0.85zM264.5 336.8h0.85v0.85h-0.85zM40.7 336.1h0.85v0.85h-0.85zM329.0 336.9h0.85v0.85h-0.85zM252.1 338.2h0.85v0.85h-0.85zM131.7 333.2h0.85v0.85h-0.85zM262.5 336.7h0.85v0.85h-0.85zM243.3 335.1h0.85v0.85h-0.85zM352.9 334.7h0.85v0.85h-0.85zM94.7 338.3h0.85v0.85h-0.85zM58.6 332.3h0.85v0.85h-0.85zM35.5 336.2h0.85v0.85h-0.85zM42.9 334.4h0.85v0.85h-0.85zM484.3 334.0h0.85v0.85h-0.85zM241.6 338.2h0.85v0.85h-0.85zM422.8 335.2h0.85v0.85h-0.85zM385.1 338.2h0.85v0.85h-0.85zM315.0 333.7h0.85v0.85h-0.85zM115.0 337.6h0.85v0.85h-0.85zM213.2 334.6h0.85v0.85h-0.85zM62.2 334.2h0.85v0.85h-0.85zM419.7 334.4h0.85v0.85h-0.85zM364.1 335.0h0.85v0.85h-0.85zM327.8 326.3h0.85v0.85h-0.85zM363.8 334.8h0.85v0.85h-0.85zM379.5 333.9h0.85v0.85h-0.85zM425.5 337.1h0.85v0.85h-0.85zM482.0 333.2h0.85v0.85h-0.85zM28.6 336.4h0.85v0.85h-0.85zM239.1 334.3h0.85v0.85h-0.85zM373.7 334.2h0.85v0.85h-0.85zM397.3 338.2h0.85v0.85h-0.85zM199.1 335.8h0.85v0.85h-0.85zM114.3 336.5h0.85v0.85h-0.85zM330.6 329.8h0.85v0.85h-0.85zM234.8 334.5h0.85v0.85h-0.85zM216.0 337.9h0.85v0.85h-0.85zM435.5 335.7h0.85v0.85h-0.85zM404.4 337.2h0.85v0.85h-0.85zM532.5 336.1h0.85v0.85h-0.85zM256.2 334.9h0.85v0.85h-0.85zM92.3 334.0h0.85v0.85h-0.85zM390.2 336.3h0.85v0.85h-0.85zM36.4 337.9h0.85v0.85h-0.85zM364.3 333.3h0.85v0.85h-0.85zM161.3 335.2h0.85v0.85h-0.85zM247.1 338.4h0.85v0.85h-0.85zM98.2 337.5h0.85v0.85h-0.85zM328.0 333.2h0.85v0.85h-0.85zM301.8 333.5h0.85v0.85h-0.85zM74.1 337.0h0.85v0.85h-0.85zM89.1 335.2h0.85v0.85h-0.85zM190.3 334.1h0.85v0.85h-0.85zM125.8 337.4h0.85v0.85h-0.85zM530.8 335.1h0.85v0.85h-0.85zM145.5 336.0h0.85v0.85h-0.85zM421.6 333.8h0.85v0.85h-0.85zM71.4 333.1h0.85v0.85h-0.85zM190.9 333.6h0.85v0.85h-0.85zM103.3 331.5h0.85v0.85h-0.85zM387.6 332.2h0.85v0.85h-0.85zM70.2 334.0h0.85v0.85h-0.85zM348.1 338.3h0.85v0.85h-0.85zM207.6 336.3h0.85v0.85h-0.85zM192.8 330.8h0.85v0.85h-0.85zM341.2 335.0h0.85v0.85h-0.85zM142.7 329.6h0.85v0.85h-0.85zM98.3 332.8h0.85v0.85h-0.85zM28.0 331.6h0.85v0.85h-0.85zM22.4 335.9h0.85v0.85h-0.85zM211.5 333.3h0.85v0.85h-0.85zM301.8 335.4h0.85v0.85h-0.85zM484.6 330.3h0.85v0.85h-0.85zM403.3 336.6h0.85v0.85h-0.85zM239.4 336.0h0.85v0.85h-0.85zM265.3 338.4h0.85v0.85h-0.85zM521.1 335.2h0.85v0.85h-0.85zM367.7 334.5h0.85v0.85h-0.85zM331.2 327.4h0.85v0.85h-0.85zM335.1 334.7h0.85v0.85h-0.85zM157.2 332.8h0.85v0.85h-0.85zM286.0 336.5h0.85v0.85h-0.85zM162.8 336.1h0.85v0.85h-0.85zM207.0 333.4h0.85v0.85h-0.85zM174.2 334.4h0.85v0.85h-0.85zM180.8 327.7h0.85v0.85h-0.85zM200.7 337.0h0.85v0.85h-0.85zM64.5 338.3h0.85v0.85h-0.85zM307.8 333.7h0.85v0.85h-0.85zM325.8 336.7h0.85v0.85h-0.85zM263.3 333.8h0.85v0.85h-0.85zM347.6 327.9h0.85v0.85h-0.85zM56.7 336.1h0.85v0.85h-0.85zM275.7 334.4h0.85v0.85h-0.85zM269.5 336.4h0.85v0.85h-0.85zM82.7 336.2h0.85v0.85h-0.85zM49.9 334.4h0.85v0.85h-0.85zM43.3 327.9h0.85v0.85h-0.85zM347.4 325.9h0.85v0.85h-0.85zM295.1 332.4h0.85v0.85h-0.85zM354.8 334.1h0.85v0.85h-0.85zM290.8 337.7h0.85v0.85h-0.85zM323.4 328.7h0.85v0.85h-0.85zM182.6 336.3h0.85v0.85h-0.85zM317.4 336.0h0.85v0.85h-0.85zM346.9 325.9h0.85v0.85h-0.85zM208.2 338.3h0.85v0.85h-0.85zM164.9 335.3h0.85v0.85h-0.85zM93.1 336.0h0.85v0.85h-0.85zM379.3 337.7h0.85v0.85h-0.85zM338.2 326.3h0.85v0.85h-0.85zM161.1 338.3h0.85v0.85h-0.85zM21.3 335.0h0.85v0.85h-0.85zM334.1 336.7h0.85v0.85h-0.85zM242.6 333.1h0.85v0.85h-0.85zM346.0 333.9h0.85v0.85h-0.85zM269.4 337.4h0.85v0.85h-0.85zM238.4 334.4h0.85v0.85h-0.85zM65.1 333.4h0.85v0.85h-0.85zM269.4 337.9h0.85v0.85h-0.85zM240.9 333.3h0.85v0.85h-0.85zM74.4 325.8h0.85v0.85h-0.85zM522.3 327.7h0.85v0.85h-0.85zM225.0 336.8h0.85v0.85h-0.85zM147.8 336.0h0.85v0.85h-0.85zM468.1 332.2h0.85v0.85h-0.85zM296.1 335.5h0.85v0.85h-0.85zM27.6 333.2h0.85v0.85h-0.85zM47.9 336.0h0.85v0.85h-0.85zM215.7 338.1h0.85v0.85h-0.85zM333.6 328.6h0.85v0.85h-0.85zM203.8 335.0h0.85v0.85h-0.85zM272.0 329.7h0.85v0.85h-0.85zM411.1 336.4h0.85v0.85h-0.85zM109.5 332.5h0.85v0.85h-0.85zM430.2 330.6h0.85v0.85h-0.85zM313.2 336.9h0.85v0.85h-0.85zM404.4 334.2h0.85v0.85h-0.85zM265.6 334.9h0.85v0.85h-0.85zM406.9 334.6h0.85v0.85h-0.85zM247.1 333.5h0.85v0.85h-0.85zM132.9 334.1h0.85v0.85h-0.85zM344.6 327.3h0.85v0.85h-0.85zM338.8 336.4h0.85v0.85h-0.85zM217.1 335.8h0.85v0.85h-0.85zM189.4 336.5h0.85v0.85h-0.85zM397.8 333.8h0.85v0.85h-0.85zM327.4 330.6h0.85v0.85h-0.85zM129.9 337.7h0.85v0.85h-0.85zM76.4 333.0h0.85v0.85h-0.85zM220.4 327.3h0.85v0.85h-0.85zM273.0 335.5h0.85v0.85h-0.85zM166.7 330.1h0.85v0.85h-0.85zM48.6 330.7h0.85v0.85h-0.85zM194.3 334.0h0.85v0.85h-0.85zM29.2 337.3h0.85v0.85h-0.85zM209.9 336.2h0.85v0.85h-0.85zM359.6 332.2h0.85v0.85h-0.85zM269.6 332.7h0.85v0.85h-0.85zM229.8 336.2h0.85v0.85h-0.85zM176.9 334.2h0.85v0.85h-0.85zM374.8 337.5h0.85v0.85h-0.85zM133.8 333.9h0.85v0.85h-0.85zM128.0 328.7h0.85v0.85h-0.85zM337.2 337.9h0.85v0.85h-0.85zM295.8 333.1h0.85v0.85h-0.85zM176.4 337.1h0.85v0.85h-0.85zM196.8 338.3h0.85v0.85h-0.85zM367.2 337.2h0.85v0.85h-0.85zM180.4 331.1h0.85v0.85h-0.85zM341.3 333.7h0.85v0.85h-0.85zM209.9 333.6h0.85v0.85h-0.85zM175.2 332.9h0.85v0.85h-0.85zM65.0 335.2h0.85v0.85h-0.85zM366.6 338.2h0.85v0.85h-0.85zM182.6 336.9h0.85v0.85h-0.85zM184.8 337.3h0.85v0.85h-0.85zM301.2 336.3h0.85v0.85h-0.85zM136.4 333.7h0.85v0.85h-0.85zM86.9 337.5h0.85v0.85h-0.85zM53.7 337.6h0.85v0.85h-0.85zM95.3 333.5h0.85v0.85h-0.85zM133.8 334.7h0.85v0.85h-0.85zM333.6 334.8h0.85v0.85h-0.85zM387.4 332.3h0.85v0.85h-0.85zM346.0 338.0h0.85v0.85h-0.85zM286.7 333.1h0.85v0.85h-0.85zM71.3 329.6h0.85v0.85h-0.85zM24.7 330.5h0.85v0.85h-0.85zM335.9 336.8h0.85v0.85h-0.85zM164.2 337.1h0.85v0.85h-0.85zM184.3 333.4h0.85v0.85h-0.85zM384.7 332.9h0.85v0.85h-0.85zM434.5 337.5h0.85v0.85h-0.85zM159.1 327.5h0.85v0.85h-0.85zM237.5 336.9h0.85v0.85h-0.85zM91.1 336.5h0.85v0.85h-0.85zM210.7 328.5h0.85v0.85h-0.85zM164.9 334.3h0.85v0.85h-0.85zM383.3 337.2h0.85v0.85h-0.85zM237.8 336.1h0.85v0.85h-0.85zM398.8 335.9h0.85v0.85h-0.85zM139.6 326.8h0.85v0.85h-0.85zM151.8 337.1h0.85v0.85h-0.85zM120.1 333.5h0.85v0.85h-0.85zM237.5 334.8h0.85v0.85h-0.85zM82.5 336.0h0.85v0.85h-0.85zM81.6 334.5h0.85v0.85h-0.85zM125.1 326.6h0.85v0.85h-0.85zM79.4 334.7h0.85v0.85h-0.85zM393.1 334.7h0.85v0.85h-0.85zM21.7 333.5h0.85v0.85h-0.85zM315.1 333.1h0.85v0.85h-0.85zM404.4 335.1h0.85v0.85h-0.85zM341.6 334.7h0.85v0.85h-0.85zM259.6 335.6h0.85v0.85h-0.85zM264.7 335.0h0.85v0.85h-0.85zM268.6 326.8h0.85v0.85h-0.85zM410.3 335.9h0.85v0.85h-0.85zM124.4 333.2h0.85v0.85h-0.85zM181.9 335.6h0.85v0.85h-0.85zM292.7 326.0h0.85v0.85h-0.85zM108.6 338.1h0.85v0.85h-0.85zM268.1 337.7h0.85v0.85h-0.85zM349.1 338.1h0.85v0.85h-0.85zM349.9 334.7h0.85v0.85h-0.85zM440.5 332.2h0.85v0.85h-0.85zM461.0 334.8h0.85v0.85h-0.85zM393.6 336.5h0.85v0.85h-0.85zM274.4 327.7h0.85v0.85h-0.85zM224.8 332.7h0.85v0.85h-0.85zM69.0 334.4h0.85v0.85h-0.85zM79.4 336.9h0.85v0.85h-0.85zM377.8 336.1h0.85v0.85h-0.85zM205.4 337.1h0.85v0.85h-0.85zM298.0 332.2h0.85v0.85h-0.85zM261.6 327.6h0.85v0.85h-0.85zM316.8 336.6h0.85v0.85h-0.85zM325.7 335.9h0.85v0.85h-0.85zM289.0 337.9h0.85v0.85h-0.85zM58.5 336.4h0.85v0.85h-0.85zM283.9 326.6h0.85v0.85h-0.85zM68.7 337.9h0.85v0.85h-0.85zM104.5 333.8h0.85v0.85h-0.85zM317.7 336.2h0.85v0.85h-0.85zM425.5 335.1h0.85v0.85h-0.85zM211.5 334.8h0.85v0.85h-0.85zM128.1 335.2h0.85v0.85h-0.85zM49.1 338.0h0.85v0.85h-0.85zM373.6 335.0h0.85v0.85h-0.85zM532.6 326.9h0.85v0.85h-0.85zM61.4 336.6h0.85v0.85h-0.85zM84.9 336.6h0.85v0.85h-0.85zM315.0 335.4h0.85v0.85h-0.85zM168.3 333.7h0.85v0.85h-0.85zM283.7 338.3h0.85v0.85h-0.85zM21.3 338.0h0.85v0.85h-0.85zM439.8 338.4h0.85v0.85h-0.85zM261.1 333.3h0.85v0.85h-0.85zM225.4 336.3h0.85v0.85h-0.85zM274.5 335.4h0.85v0.85h-0.85zM62.5 335.5h0.85v0.85h-0.85zM291.1 327.4h0.85v0.85h-0.85zM508.0 329.5h0.85v0.85h-0.85zM312.2 332.4h0.85v0.85h-0.85zM392.0 334.8h0.85v0.85h-0.85zM162.6 325.9h0.85v0.85h-0.85zM370.5 334.0h0.85v0.85h-0.85zM332.5 330.7h0.85v0.85h-0.85zM353.1 335.9h0.85v0.85h-0.85zM326.1 335.5h0.85v0.85h-0.85zM200.1 332.7h0.85v0.85h-0.85zM207.1 332.2h0.85v0.85h-0.85zM256.9 336.6h0.85v0.85h-0.85zM63.6 333.2h0.85v0.85h-0.85zM319.4 337.9h0.85v0.85h-0.85zM23.7 334.1h0.85v0.85h-0.85zM56.8 335.3h0.85v0.85h-0.85zM292.7 337.1h0.85v0.85h-0.85zM225.8 333.0h0.85v0.85h-0.85zM418.7 327.6h0.85v0.85h-0.85zM63.9 333.3h0.85v0.85h-0.85zM36.4 335.5h0.85v0.85h-0.85zM145.2 336.5h0.85v0.85h-0.85zM143.1 335.2h0.85v0.85h-0.85zM508.0 334.7h0.85v0.85h-0.85zM299.1 338.4h0.85v0.85h-0.85zM77.0 336.4h0.85v0.85h-0.85zM369.5 334.9h0.85v0.85h-0.85zM314.5 331.9h0.85v0.85h-0.85zM534.7 331.7h0.85v0.85h-0.85zM117.5 329.6h0.85v0.85h-0.85zM141.9 334.7h0.85v0.85h-0.85zM27.4 333.1h0.85v0.85h-0.85zM221.5 329.8h0.85v0.85h-0.85zM399.3 332.8h0.85v0.85h-0.85zM199.5 337.8h0.85v0.85h-0.85zM133.6 337.9h0.85v0.85h-0.85zM255.3 334.4h0.85v0.85h-0.85zM258.9 335.6h0.85v0.85h-0.85zM334.0 336.8h0.85v0.85h-0.85zM155.6 335.2h0.85v0.85h-0.85zM310.8 336.2h0.85v0.85h-0.85zM305.1 335.6h0.85v0.85h-0.85zM296.4 336.7h0.85v0.85h-0.85zM247.9 334.6h0.85v0.85h-0.85zM224.3 333.0h0.85v0.85h-0.85zM287.2 326.0h0.85v0.85h-0.85zM186.8 335.9h0.85v0.85h-0.85zM252.6 333.4h0.85v0.85h-0.85zM143.1 331.7h0.85v0.85h-0.85zM454.5 337.8h0.85v0.85h-0.85zM174.6 338.1h0.85v0.85h-0.85zM111.2 326.8h0.85v0.85h-0.85zM186.2 338.3h0.85v0.85h-0.85zM207.5 333.3h0.85v0.85h-0.85zM421.5 336.3h0.85v0.85h-0.85zM420.7 336.1h0.85v0.85h-0.85zM179.2 335.2h0.85v0.85h-0.85zM197.6 329.8h0.85v0.85h-0.85zM232.7 337.0h0.85v0.85h-0.85zM228.3 337.9h0.85v0.85h-0.85zM93.4 335.2h0.85v0.85h-0.85zM411.3 331.2h0.85v0.85h-0.85zM403.5 335.3h0.85v0.85h-0.85zM37.9 331.1h0.85v0.85h-0.85zM380.1 332.7h0.85v0.85h-0.85zM261.9 338.3h0.85v0.85h-0.85zM33.3 337.0h0.85v0.85h-0.85zM298.3 334.6h0.85v0.85h-0.85zM493.4 338.2h0.85v0.85h-0.85zM162.5 336.3h0.85v0.85h-0.85zM537.8 333.4h0.85v0.85h-0.85zM315.3 334.4h0.85v0.85h-0.85zM81.2 331.6h0.85v0.85h-0.85zM215.4 337.1h0.85v0.85h-0.85zM104.4 327.8h0.85v0.85h-0.85zM24.2 333.5h0.85v0.85h-0.85zM223.2 332.4h0.85v0.85h-0.85zM104.9 335.2h0.85v0.85h-0.85zM373.0 333.3h0.85v0.85h-0.85zM397.4 335.8h0.85v0.85h-0.85zM38.1 332.3h0.85v0.85h-0.85zM240.1 335.2h0.85v0.85h-0.85zM300.4 337.5h0.85v0.85h-0.85zM49.8 338.1h0.85v0.85h-0.85zM300.6 337.5h0.85v0.85h-0.85zM251.6 336.4h0.85v0.85h-0.85zM155.3 334.0h0.85v0.85h-0.85zM256.9 332.5h0.85v0.85h-0.85zM57.5 336.1h0.85v0.85h-0.85zM191.0 336.4h0.85v0.85h-0.85zM63.5 328.1h0.85v0.85h-0.85zM396.9 325.7h0.85v0.85h-0.85zM287.8 336.8h0.85v0.85h-0.85zM111.0 336.9h0.85v0.85h-0.85zM417.4 338.4h0.85v0.85h-0.85zM95.0 332.6h0.85v0.85h-0.85zM267.9 333.3h0.85v0.85h-0.85zM157.4 327.3h0.85v0.85h-0.85zM69.6 332.3h0.85v0.85h-0.85zM186.2 336.3h0.85v0.85h-0.85zM254.5 326.1h0.85v0.85h-0.85zM337.1 329.6h0.85v0.85h-0.85zM314.0 328.6h0.85v0.85h-0.85zM238.6 333.3h0.85v0.85h-0.85zM346.6 331.3h0.85v0.85h-0.85zM304.9 333.6h0.85v0.85h-0.85zM260.7 336.4h0.85v0.85h-0.85zM83.2 328.7h0.85v0.85h-0.85zM26.9 333.3h0.85v0.85h-0.85zM90.3 337.2h0.85v0.85h-0.85zM414.5 326.0h0.85v0.85h-0.85zM188.5 335.7h0.85v0.85h-0.85zM45.6 335.8h0.85v0.85h-0.85zM313.4 335.0h0.85v0.85h-0.85zM148.5 337.6h0.85v0.85h-0.85zM309.3 332.1h0.85v0.85h-0.85zM214.9 335.3h0.85v0.85h-0.85zM114.8 334.9h0.85v0.85h-0.85zM228.1 337.2h0.85v0.85h-0.85zM122.1 338.0h0.85v0.85h-0.85zM213.1 328.9h0.85v0.85h-0.85zM138.1 333.6h0.85v0.85h-0.85zM201.1 332.1h0.85v0.85h-0.85zM275.8 326.6h0.85v0.85h-0.85zM74.8 338.3h0.85v0.85h-0.85zM292.9 334.0h0.85v0.85h-0.85zM291.1 325.8h0.85v0.85h-0.85zM111.7 333.5h0.85v0.85h-0.85zM261.4 333.8h0.85v0.85h-0.85zM55.5 333.8h0.85v0.85h-0.85zM298.8 327.2h0.85v0.85h-0.85zM197.9 334.9h0.85v0.85h-0.85zM313.3 335.1h0.85v0.85h-0.85zM369.8 333.5h0.85v0.85h-0.85zM273.8 337.8h0.85v0.85h-0.85zM216.7 333.5h0.85v0.85h-0.85zM80.5 337.3h0.85v0.85h-0.85zM94.1 335.4h0.85v0.85h-0.85zM247.9 334.1h0.85v0.85h-0.85zM253.0 336.4h0.85v0.85h-0.85zM94.1 336.0h0.85v0.85h-0.85zM224.5 332.2h0.85v0.85h-0.85zM115.8 335.7h0.85v0.85h-0.85zM303.6 335.5h0.85v0.85h-0.85zM75.2 327.8h0.85v0.85h-0.85zM363.1 334.6h0.85v0.85h-0.85zM69.9 336.8h0.85v0.85h-0.85zM400.9 338.3h0.85v0.85h-0.85zM400.5 336.0h0.85v0.85h-0.85zM34.8 334.2h0.85v0.85h-0.85zM417.7 332.1h0.85v0.85h-0.85zM46.2 337.7h0.85v0.85h-0.85zM217.7 335.8h0.85v0.85h-0.85zM390.0 328.6h0.85v0.85h-0.85zM332.1 337.3h0.85v0.85h-0.85zM292.6 335.2h0.85v0.85h-0.85zM72.4 337.4h0.85v0.85h-0.85zM228.0 337.7h0.85v0.85h-0.85zM187.3 334.7h0.85v0.85h-0.85zM170.2 330.1h0.85v0.85h-0.85zM182.5 331.7h0.85v0.85h-0.85zM207.4 334.9h0.85v0.85h-0.85zM112.4 332.2h0.85v0.85h-0.85zM206.3 333.7h0.85v0.85h-0.85zM345.1 337.3h0.85v0.85h-0.85zM386.9 335.1h0.85v0.85h-0.85zM288.8 337.0h0.85v0.85h-0.85zM170.6 332.5h0.85v0.85h-0.85zM247.9 336.4h0.85v0.85h-0.85zM242.0 338.3h0.85v0.85h-0.85zM172.2 333.7h0.85v0.85h-0.85zM261.2 330.2h0.85v0.85h-0.85zM357.6 336.3h0.85v0.85h-0.85zM87.2 332.9h0.85v0.85h-0.85zM80.5 338.2h0.85v0.85h-0.85zM150.1 333.5h0.85v0.85h-0.85zM162.2 333.9h0.85v0.85h-0.85zM303.4 334.2h0.85v0.85h-0.85zM325.9 333.3h0.85v0.85h-0.85zM371.6 337.1h0.85v0.85h-0.85zM399.5 336.8h0.85v0.85h-0.85zM415.8 335.2h0.85v0.85h-0.85zM177.7 332.4h0.85v0.85h-0.85zM308.9 336.1h0.85v0.85h-0.85zM44.4 336.2h0.85v0.85h-0.85zM530.0 333.7h0.85v0.85h-0.85zM197.4 328.3h0.85v0.85h-0.85zM45.5 338.1h0.85v0.85h-0.85zM248.7 333.3h0.85v0.85h-0.85zM319.8 332.1h0.85v0.85h-0.85zM311.9 336.0h0.85v0.85h-0.85zM313.8 336.6h0.85v0.85h-0.85zM221.7 327.4h0.85v0.85h-0.85zM127.5 335.1h0.85v0.85h-0.85zM130.6 335.4h0.85v0.85h-0.85zM202.0 335.7h0.85v0.85h-0.85zM113.6 334.3h0.85v0.85h-0.85zM218.2 333.1h0.85v0.85h-0.85zM75.2 335.8h0.85v0.85h-0.85zM90.2 335.6h0.85v0.85h-0.85zM59.4 337.1h0.85v0.85h-0.85zM348.7 338.2h0.85v0.85h-0.85zM186.0 332.8h0.85v0.85h-0.85zM21.2 333.7h0.85v0.85h-0.85zM262.2 333.1h0.85v0.85h-0.85zM497.5 327.5h0.85v0.85h-0.85zM208.5 337.9h0.85v0.85h-0.85zM311.6 334.4h0.85v0.85h-0.85zM274.2 334.6h0.85v0.85h-0.85zM75.9 337.5h0.85v0.85h-0.85zM255.4 331.0h0.85v0.85h-0.85zM128.0 337.1h0.85v0.85h-0.85zM328.4 331.5h0.85v0.85h-0.85zM67.4 337.9h0.85v0.85h-0.85zM244.4 333.9h0.85v0.85h-0.85zM339.4 331.8h0.85v0.85h-0.85zM258.2 335.1h0.85v0.85h-0.85zM217.2 335.2h0.85v0.85h-0.85zM236.0 338.0h0.85v0.85h-0.85zM116.4 337.7h0.85v0.85h-0.85zM291.3 338.2h0.85v0.85h-0.85zM152.5 333.0h0.85v0.85h-0.85zM269.1 326.4h0.85v0.85h-0.85zM37.1 334.8h0.85v0.85h-0.85zM236.3 338.4h0.85v0.85h-0.85zM396.3 332.5h0.85v0.85h-0.85zM32.3 326.1h0.85v0.85h-0.85zM25.6 337.4h0.85v0.85h-0.85zM50.2 335.8h0.85v0.85h-0.85zM258.4 336.3h0.85v0.85h-0.85zM79.2 329.6h0.85v0.85h-0.85zM286.2 333.2h0.85v0.85h-0.85zM108.6 334.9h0.85v0.85h-0.85zM22.6 338.2h0.85v0.85h-0.85zM329.2 335.4h0.85v0.85h-0.85zM299.4 334.9h0.85v0.85h-0.85zM166.4 333.4h0.85v0.85h-0.85zM337.4 332.5h0.85v0.85h-0.85zM350.0 327.0h0.85v0.85h-0.85zM315.7 332.3h0.85v0.85h-0.85zM396.5 336.7h0.85v0.85h-0.85zM389.2 329.0h0.85v0.85h-0.85zM92.4 335.2h0.85v0.85h-0.85zM75.3 335.9h0.85v0.85h-0.85zM43.0 332.5h0.85v0.85h-0.85zM501.4 333.1h0.85v0.85h-0.85zM297.5 334.2h0.85v0.85h-0.85zM150.1 334.6h0.85v0.85h-0.85zM129.4 335.2h0.85v0.85h-0.85zM234.7 336.2h0.85v0.85h-0.85zM464.1 326.0h0.85v0.85h-0.85zM110.6 338.2h0.85v0.85h-0.85zM399.7 335.5h0.85v0.85h-0.85zM215.8 331.7h0.85v0.85h-0.85zM63.6 336.6h0.85v0.85h-0.85zM487.0 330.0h0.85v0.85h-0.85zM124.5 336.2h0.85v0.85h-0.85zM88.7 335.1h0.85v0.85h-0.85zM181.8 333.2h0.85v0.85h-0.85zM126.7 334.5h0.85v0.85h-0.85zM290.3 334.7h0.85v0.85h-0.85zM90.1 333.7h0.85v0.85h-0.85zM364.9 338.2h0.85v0.85h-0.85zM169.7 336.9h0.85v0.85h-0.85zM151.1 328.3h0.85v0.85h-0.85zM148.3 333.7h0.85v0.85h-0.85zM36.7 334.7h0.85v0.85h-0.85zM269.1 335.2h0.85v0.85h-0.85zM185.8 337.3h0.85v0.85h-0.85zM240.4 333.7h0.85v0.85h-0.85zM40.8 334.6h0.85v0.85h-0.85zM69.4 335.0h0.85v0.85h-0.85zM74.5 337.2h0.85v0.85h-0.85zM103.7 335.1h0.85v0.85h-0.85zM218.9 333.2h0.85v0.85h-0.85zM291.9 335.0h0.85v0.85h-0.85zM127.4 337.6h0.85v0.85h-0.85zM304.1 336.1h0.85v0.85h-0.85zM261.1 331.2h0.85v0.85h-0.85zM271.5 325.8h0.85v0.85h-0.85zM208.3 336.3h0.85v0.85h-0.85zM144.9 336.6h0.85v0.85h-0.85zM300.1 338.0h0.85v0.85h-0.85zM341.2 327.4h0.85v0.85h-0.85zM36.9 332.9h0.85v0.85h-0.85zM397.3 334.3h0.85v0.85h-0.85zM294.4 326.9h0.85v0.85h-0.85zM29.2 337.6h0.85v0.85h-0.85zM117.4 333.5h0.85v0.85h-0.85zM243.2 338.2h0.85v0.85h-0.85zM26.3 335.1h0.85v0.85h-0.85zM400.0 330.0h0.85v0.85h-0.85zM360.3 336.6h0.85v0.85h-0.85zM413.0 335.9h0.85v0.85h-0.85zM98.8 336.3h0.85v0.85h-0.85zM220.2 336.2h0.85v0.85h-0.85zM415.0 327.2h0.85v0.85h-0.85zM66.2 328.8h0.85v0.85h-0.85zM45.5 332.7h0.85v0.85h-0.85zM358.5 336.0h0.85v0.85h-0.85zM324.9 330.8h0.85v0.85h-0.85zM96.8 336.2h0.85v0.85h-0.85zM117.1 333.4h0.85v0.85h-0.85zM192.5 327.7h0.85v0.85h-0.85zM332.1 337.2h0.85v0.85h-0.85zM124.3 331.9h0.85v0.85h-0.85zM40.5 330.0h0.85v0.85h-0.85zM394.3 335.0h0.85v0.85h-0.85zM86.1 326.2h0.85v0.85h-0.85zM91.5 335.5h0.85v0.85h-0.85zM327.3 329.3h0.85v0.85h-0.85zM122.1 329.4h0.85v0.85h-0.85zM391.3 332.9h0.85v0.85h-0.85zM279.4 325.8h0.85v0.85h-0.85zM321.0 335.9h0.85v0.85h-0.85zM380.3 337.9h0.85v0.85h-0.85zM193.8 337.7h0.85v0.85h-0.85zM270.7 333.1h0.85v0.85h-0.85zM384.3 334.1h0.85v0.85h-0.85zM282.5 332.1h0.85v0.85h-0.85zM253.9 334.3h0.85v0.85h-0.85zM233.7 334.2h0.85v0.85h-0.85zM339.7 336.2h0.85v0.85h-0.85zM367.1 338.2h0.85v0.85h-0.85zM51.3 338.1h0.85v0.85h-0.85zM147.5 332.6h0.85v0.85h-0.85zM251.8 330.3h0.85v0.85h-0.85zM110.8 337.0h0.85v0.85h-0.85zM174.8 338.4h0.85v0.85h-0.85zM112.7 332.8h0.85v0.85h-0.85zM128.6 334.3h0.85v0.85h-0.85zM176.8 337.0h0.85v0.85h-0.85zM358.6 332.8h0.85v0.85h-0.85zM311.9 332.9h0.85v0.85h-0.85zM404.2 328.8h0.85v0.85h-0.85zM203.3 332.3h0.85v0.85h-0.85zM275.1 334.1h0.85v0.85h-0.85zM194.1 334.4h0.85v0.85h-0.85zM152.5 338.3h0.85v0.85h-0.85zM137.9 326.3h0.85v0.85h-0.85zM265.5 326.5h0.85v0.85h-0.85zM194.3 336.1h0.85v0.85h-0.85zM281.4 328.6h0.85v0.85h-0.85zM473.7 334.8h0.85v0.85h-0.85zM289.1 337.8h0.85v0.85h-0.85zM496.3 330.1h0.85v0.85h-0.85zM108.4 337.1h0.85v0.85h-0.85zM52.6 329.3h0.85v0.85h-0.85zM394.7 334.0h0.85v0.85h-0.85zM39.3 329.3h0.85v0.85h-0.85zM218.6 325.8h0.85v0.85h-0.85zM81.5 335.7h0.85v0.85h-0.85zM236.5 336.0h0.85v0.85h-0.85zM295.2 336.3h0.85v0.85h-0.85zM56.9 332.5h0.85v0.85h-0.85zM80.1 336.4h0.85v0.85h-0.85zM387.6 333.0h0.85v0.85h-0.85zM424.8 335.8h0.85v0.85h-0.85zM301.9 332.0h0.85v0.85h-0.85zM105.4 333.4h0.85v0.85h-0.85zM97.5 329.8h0.85v0.85h-0.85zM170.5 334.6h0.85v0.85h-0.85zM236.8 334.8h0.85v0.85h-0.85zM182.6 337.4h0.85v0.85h-0.85zM279.7 335.1h0.85v0.85h-0.85zM52.5 333.8h0.85v0.85h-0.85zM280.7 327.6h0.85v0.85h-0.85zM315.6 330.2h0.85v0.85h-0.85zM402.5 333.0h0.85v0.85h-0.85zM185.7 332.5h0.85v0.85h-0.85zM210.7 333.3h0.85v0.85h-0.85zM410.4 333.5h0.85v0.85h-0.85zM273.1 328.0h0.85v0.85h-0.85zM312.0 331.2h0.85v0.85h-0.85zM228.1 336.9h0.85v0.85h-0.85zM358.2 332.2h0.85v0.85h-0.85zM423.6 333.1h0.85v0.85h-0.85zM416.2 332.1h0.85v0.85h-0.85zM265.0 333.5h0.85v0.85h-0.85zM191.1 330.5h0.85v0.85h-0.85zM298.8 333.2h0.85v0.85h-0.85zM43.2 332.1h0.85v0.85h-0.85zM151.2 332.7h0.85v0.85h-0.85zM60.1 330.7h0.85v0.85h-0.85zM177.3 332.2h0.85v0.85h-0.85zM482.9 335.3h0.85v0.85h-0.85zM380.6 332.2h0.85v0.85h-0.85zM504.3 326.9h0.85v0.85h-0.85zM280.8 336.1h0.85v0.85h-0.85zM361.3 337.8h0.85v0.85h-0.85zM444.5 337.5h0.85v0.85h-0.85zM123.3 331.7h0.85v0.85h-0.85zM274.4 332.4h0.85v0.85h-0.85zM190.5 336.8h0.85v0.85h-0.85zM241.0 337.6h0.85v0.85h-0.85zM143.8 333.9h0.85v0.85h-0.85zM287.9 331.8h0.85v0.85h-0.85zM306.2 336.0h0.85v0.85h-0.85zM176.7 330.8h0.85v0.85h-0.85zM423.0 335.1h0.85v0.85h-0.85zM247.4 332.6h0.85v0.85h-0.85zM345.1 329.3h0.85v0.85h-0.85zM277.9 333.6h0.85v0.85h-0.85zM120.0 325.8h0.85v0.85h-0.85zM349.9 332.1h0.85v0.85h-0.85zM315.3 335.3h0.85v0.85h-0.85zM365.9 332.3h0.85v0.85h-0.85zM195.6 337.9h0.85v0.85h-0.85zM380.1 333.3h0.85v0.85h-0.85zM73.9 333.8h0.85v0.85h-0.85zM269.9 334.6h0.85v0.85h-0.85zM320.8 336.3h0.85v0.85h-0.85zM50.7 334.2h0.85v0.85h-0.85zM390.9 334.4h0.85v0.85h-0.85zM290.1 337.0h0.85v0.85h-0.85zM351.6 334.0h0.85v0.85h-0.85zM418.8 334.4h0.85v0.85h-0.85zM252.1 327.7h0.85v0.85h-0.85zM63.1 333.1h0.85v0.85h-0.85zM250.6 337.5h0.85v0.85h-0.85zM110.4 336.8h0.85v0.85h-0.85zM344.8 330.1h0.85v0.85h-0.85zM21.5 338.2h0.85v0.85h-0.85zM145.1 329.0h0.85v0.85h-0.85zM263.6 336.4h0.85v0.85h-0.85zM399.1 333.6h0.85v0.85h-0.85zM416.1 337.8h0.85v0.85h-0.85zM343.7 329.0h0.85v0.85h-0.85zM278.4 331.2h0.85v0.85h-0.85zM310.4 335.2h0.85v0.85h-0.85zM110.2 333.9h0.85v0.85h-0.85zM237.1 337.6h0.85v0.85h-0.85zM220.5 335.9h0.85v0.85h-0.85zM58.2 334.6h0.85v0.85h-0.85zM326.7 334.8h0.85v0.85h-0.85zM306.5 333.2h0.85v0.85h-0.85zM158.8 336.0h0.85v0.85h-0.85zM240.0 335.2h0.85v0.85h-0.85zM109.5 336.3h0.85v0.85h-0.85zM261.7 337.4h0.85v0.85h-0.85zM131.3 334.8h0.85v0.85h-0.85zM149.5 338.2h0.85v0.85h-0.85zM54.7 331.3h0.85v0.85h-0.85zM477.6 335.3h0.85v0.85h-0.85zM303.0 338.4h0.85v0.85h-0.85zM29.5 338.2h0.85v0.85h-0.85zM107.1 335.7h0.85v0.85h-0.85zM221.7 332.7h0.85v0.85h-0.85zM44.2 336.3h0.85v0.85h-0.85zM385.9 334.2h0.85v0.85h-0.85zM157.6 331.2h0.85v0.85h-0.85zM244.6 337.4h0.85v0.85h-0.85zM144.6 330.1h0.85v0.85h-0.85zM71.1 330.3h0.85v0.85h-0.85zM356.6 333.6h0.85v0.85h-0.85zM20.9 332.1h0.85v0.85h-0.85zM534.1 334.4h0.85v0.85h-0.85zM246.0 325.9h0.85v0.85h-0.85zM293.9 330.4h0.85v0.85h-0.85zM283.3 332.3h0.85v0.85h-0.85zM210.4 337.0h0.85v0.85h-0.85zM167.7 335.1h0.85v0.85h-0.85zM139.8 326.2h0.85v0.85h-0.85zM383.8 334.0h0.85v0.85h-0.85zM95.4 333.3h0.85v0.85h-0.85zM130.0 334.5h0.85v0.85h-0.85zM413.9 333.9h0.85v0.85h-0.85zM381.2 338.2h0.85v0.85h-0.85zM229.6 332.7h0.85v0.85h-0.85zM185.9 337.4h0.85v0.85h-0.85zM28.6 338.1h0.85v0.85h-0.85zM359.5 335.9h0.85v0.85h-0.85zM149.7 333.6h0.85v0.85h-0.85zM290.0 334.3h0.85v0.85h-0.85zM36.7 333.9h0.85v0.85h-0.85zM241.5 334.2h0.85v0.85h-0.85zM43.3 333.5h0.85v0.85h-0.85zM202.2 334.9h0.85v0.85h-0.85zM357.7 329.5h0.85v0.85h-0.85zM226.4 333.9h0.85v0.85h-0.85zM413.8 336.7h0.85v0.85h-0.85zM334.9 335.1h0.85v0.85h-0.85zM133.5 336.6h0.85v0.85h-0.85zM156.4 326.3h0.85v0.85h-0.85zM392.9 335.9h0.85v0.85h-0.85zM92.8 335.8h0.85v0.85h-0.85zM390.8 337.6h0.85v0.85h-0.85zM35.6 330.6h0.85v0.85h-0.85zM134.0 328.1h0.85v0.85h-0.85zM390.7 334.7h0.85v0.85h-0.85zM229.9 336.1h0.85v0.85h-0.85zM268.3 338.3h0.85v0.85h-0.85zM58.4 334.0h0.85v0.85h-0.85zM147.5 333.0h0.85v0.85h-0.85zM105.1 337.9h0.85v0.85h-0.85zM156.8 329.0h0.85v0.85h-0.85zM311.6 333.6h0.85v0.85h-0.85zM106.0 327.9h0.85v0.85h-0.85zM167.7 333.9h0.85v0.85h-0.85zM275.4 332.8h0.85v0.85h-0.85zM328.5 338.0h0.85v0.85h-0.85zM333.7 332.8h0.85v0.85h-0.85zM191.8 336.6h0.85v0.85h-0.85zM130.7 337.4h0.85v0.85h-0.85zM340.2 334.5h0.85v0.85h-0.85zM229.7 337.6h0.85v0.85h-0.85zM316.3 326.5h0.85v0.85h-0.85zM48.4 332.7h0.85v0.85h-0.85zM383.4 334.5h0.85v0.85h-0.85zM413.7 335.7h0.85v0.85h-0.85zM215.1 335.9h0.85v0.85h-0.85zM505.3 337.4h0.85v0.85h-0.85zM29.7 330.7h0.85v0.85h-0.85zM109.7 337.9h0.85v0.85h-0.85zM185.6 336.0h0.85v0.85h-0.85zM354.4 334.2h0.85v0.85h-0.85zM169.5 326.4h0.85v0.85h-0.85zM310.8 336.2h0.85v0.85h-0.85zM248.0 334.9h0.85v0.85h-0.85zM36.1 334.9h0.85v0.85h-0.85zM405.5 337.0h0.85v0.85h-0.85zM137.7 333.5h0.85v0.85h-0.85zM143.3 334.3h0.85v0.85h-0.85zM165.5 338.4h0.85v0.85h-0.85zM64.2 335.6h0.85v0.85h-0.85zM388.7 333.0h0.85v0.85h-0.85zM112.0 333.1h0.85v0.85h-0.85zM48.0 333.9h0.85v0.85h-0.85zM98.2 333.9h0.85v0.85h-0.85zM128.7 336.8h0.85v0.85h-0.85zM265.6 338.3h0.85v0.85h-0.85zM166.2 333.8h0.85v0.85h-0.85zM28.1 334.1h0.85v0.85h-0.85zM296.7 337.4h0.85v0.85h-0.85zM212.5 334.2h0.85v0.85h-0.85zM421.9 332.8h0.85v0.85h-0.85zM73.9 335.4h0.85v0.85h-0.85zM89.4 335.4h0.85v0.85h-0.85zM184.3 334.7h0.85v0.85h-0.85zM304.0 335.2h0.85v0.85h-0.85zM353.8 335.0h0.85v0.85h-0.85zM299.7 336.0h0.85v0.85h-0.85zM206.2 337.4h0.85v0.85h-0.85zM219.2 332.5h0.85v0.85h-0.85zM411.7 332.4h0.85v0.85h-0.85zM411.3 336.5h0.85v0.85h-0.85zM103.1 327.5h0.85v0.85h-0.85zM350.5 336.4h0.85v0.85h-0.85zM277.9 326.2h0.85v0.85h-0.85zM390.5 334.8h0.85v0.85h-0.85zM356.3 332.3h0.85v0.85h-0.85zM30.0 330.5h0.85v0.85h-0.85zM245.6 338.0h0.85v0.85h-0.85zM106.3 328.6h0.85v0.85h-0.85zM294.4 334.2h0.85v0.85h-0.85zM261.5 329.9h0.85v0.85h-0.85zM262.2 332.6h0.85v0.85h-0.85zM297.4 335.8h0.85v0.85h-0.85zM78.5 334.5h0.85v0.85h-0.85zM352.2 328.8h0.85v0.85h-0.85zM95.4 329.0h0.85v0.85h-0.85zM174.1 333.2h0.85v0.85h-0.85zM233.2 329.2h0.85v0.85h-0.85zM40.6 334.8h0.85v0.85h-0.85zM219.5 337.5h0.85v0.85h-0.85zM202.1 332.5h0.85v0.85h-0.85zM61.5 329.6h0.85v0.85h-0.85zM75.9 335.6h0.85v0.85h-0.85zM348.9 335.6h0.85v0.85h-0.85zM305.5 334.9h0.85v0.85h-0.85zM126.1 333.0h0.85v0.85h-0.85zM307.9 334.4h0.85v0.85h-0.85zM154.9 326.4h0.85v0.85h-0.85zM49.3 334.2h0.85v0.85h-0.85zM74.4 337.4h0.85v0.85h-0.85zM57.3 337.2h0.85v0.85h-0.85zM148.4 335.8h0.85v0.85h-0.85zM52.4 333.6h0.85v0.85h-0.85zM301.3 337.6h0.85v0.85h-0.85zM207.9 336.4h0.85v0.85h-0.85zM338.3 334.3h0.85v0.85h-0.85zM366.8 336.6h0.85v0.85h-0.85zM358.7 333.6h0.85v0.85h-0.85zM390.3 331.3h0.85v0.85h-0.85zM31.7 332.3h0.85v0.85h-0.85zM24.0 329.3h0.85v0.85h-0.85zM58.6 335.5h0.85v0.85h-0.85zM162.2 337.4h0.85v0.85h-0.85zM366.1 335.3h0.85v0.85h-0.85zM360.4 325.9h0.85v0.85h-0.85zM393.7 334.0h0.85v0.85h-0.85zM522.0 334.8h0.85v0.85h-0.85zM154.1 335.4h0.85v0.85h-0.85zM21.7 336.3h0.85v0.85h-0.85zM255.6 330.3h0.85v0.85h-0.85zM320.4 332.7h0.85v0.85h-0.85zM214.8 332.9h0.85v0.85h-0.85zM118.7 336.8h0.85v0.85h-0.85zM29.7 333.5h0.85v0.85h-0.85zM343.6 336.4h0.85v0.85h-0.85zM361.6 334.3h0.85v0.85h-0.85zM94.5 334.8h0.85v0.85h-0.85zM264.5 329.0h0.85v0.85h-0.85zM43.2 333.3h0.85v0.85h-0.85zM24.6 326.0h0.85v0.85h-0.85zM76.1 333.4h0.85v0.85h-0.85zM193.5 332.2h0.85v0.85h-0.85zM42.6 332.5h0.85v0.85h-0.85zM196.9 336.4h0.85v0.85h-0.85zM262.0 333.6h0.85v0.85h-0.85zM439.5 338.2h0.85v0.85h-0.85zM169.5 337.8h0.85v0.85h-0.85zM136.9 336.4h0.85v0.85h-0.85zM332.8 335.5h0.85v0.85h-0.85zM194.7 336.2h0.85v0.85h-0.85zM338.5 335.1h0.85v0.85h-0.85zM188.3 332.3h0.85v0.85h-0.85zM364.8 326.4h0.85v0.85h-0.85zM158.7 332.4h0.85v0.85h-0.85zM205.0 336.8h0.85v0.85h-0.85zM388.9 332.9h0.85v0.85h-0.85zM38.7 335.7h0.85v0.85h-0.85zM117.6 338.3h0.85v0.85h-0.85zM311.0 333.0h0.85v0.85h-0.85zM123.6 334.8h0.85v0.85h-0.85zM378.2 333.5h0.85v0.85h-0.85zM98.4 329.5h0.85v0.85h-0.85zM418.8 337.1h0.85v0.85h-0.85zM43.1 333.9h0.85v0.85h-0.85zM172.1 332.9h0.85v0.85h-0.85zM191.1 334.1h0.85v0.85h-0.85zM173.6 337.7h0.85v0.85h-0.85zM134.8 334.1h0.85v0.85h-0.85zM161.8 330.2h0.85v0.85h-0.85zM231.2 336.4h0.85v0.85h-0.85zM183.7 332.2h0.85v0.85h-0.85zM393.7 332.6h0.85v0.85h-0.85zM133.6 332.0h0.85v0.85h-0.85zM346.4 336.6h0.85v0.85h-0.85zM141.2 337.1h0.85v0.85h-0.85zM427.4 336.7h0.85v0.85h-0.85zM319.5 333.0h0.85v0.85h-0.85zM328.1 336.6h0.85v0.85h-0.85zM242.7 333.0h0.85v0.85h-0.85zM186.4 335.5h0.85v0.85h-0.85zM279.0 331.6h0.85v0.85h-0.85zM95.7 336.1h0.85v0.85h-0.85zM155.0 335.9h0.85v0.85h-0.85zM193.4 336.5h0.85v0.85h-0.85zM152.8 330.5h0.85v0.85h-0.85zM84.8 332.4h0.85v0.85h-0.85zM60.8 332.6h0.85v0.85h-0.85zM26.5 337.5h0.85v0.85h-0.85zM374.8 338.4h0.85v0.85h-0.85zM331.3 335.1h0.85v0.85h-0.85zM219.0 325.7h0.85v0.85h-0.85zM282.0 334.5h0.85v0.85h-0.85zM345.9 335.9h0.85v0.85h-0.85zM110.8 334.3h0.85v0.85h-0.85zM94.1 333.8h0.85v0.85h-0.85zM184.6 338.2h0.85v0.85h-0.85zM73.5 338.4h0.85v0.85h-0.85zM31.8 327.9h0.85v0.85h-0.85zM130.8 334.5h0.85v0.85h-0.85zM29.1 333.5h0.85v0.85h-0.85zM201.1 337.4h0.85v0.85h-0.85zM234.1 333.5h0.85v0.85h-0.85zM49.6 330.3h0.85v0.85h-0.85zM108.0 333.3h0.85v0.85h-0.85zM69.7 335.0h0.85v0.85h-0.85zM83.3 334.6h0.85v0.85h-0.85zM272.2 337.7h0.85v0.85h-0.85zM346.3 337.6h0.85v0.85h-0.85zM95.1 333.6h0.85v0.85h-0.85zM471.8 337.1h0.85v0.85h-0.85zM173.8 332.8h0.85v0.85h-0.85zM80.2 336.0h0.85v0.85h-0.85zM315.8 336.9h0.85v0.85h-0.85zM320.5 338.4h0.85v0.85h-0.85zM137.2 333.2h0.85v0.85h-0.85zM357.0 333.1h0.85v0.85h-0.85zM371.5 334.3h0.85v0.85h-0.85zM340.4 332.1h0.85v0.85h-0.85zM286.1 334.9h0.85v0.85h-0.85zM161.2 334.6h0.85v0.85h-0.85zM394.4 333.3h0.85v0.85h-0.85zM338.6 334.0h0.85v0.85h-0.85zM276.3 337.4h0.85v0.85h-0.85zM63.9 335.8h0.85v0.85h-0.85zM74.4 332.8h0.85v0.85h-0.85zM38.5 337.8h0.85v0.85h-0.85zM154.9 332.0h0.85v0.85h-0.85zM286.6 332.1h0.85v0.85h-0.85zM32.3 331.0h0.85v0.85h-0.85zM36.8 334.7h0.85v0.85h-0.85zM111.0 334.3h0.85v0.85h-0.85zM170.4 332.6h0.85v0.85h-0.85zM249.8 330.3h0.85v0.85h-0.85zM52.1 329.8h0.85v0.85h-0.85zM255.4 333.3h0.85v0.85h-0.85zM450.7 332.1h0.85v0.85h-0.85zM412.2 338.3h0.85v0.85h-0.85zM67.9 332.0h0.85v0.85h-0.85zM99.9 337.0h0.85v0.85h-0.85zM141.2 338.3h0.85v0.85h-0.85zM350.3 326.7h0.85v0.85h-0.85zM33.9 331.6h0.85v0.85h-0.85zM72.3 333.0h0.85v0.85h-0.85zM328.7 334.7h0.85v0.85h-0.85zM318.4 336.0h0.85v0.85h-0.85zM143.6 333.1h0.85v0.85h-0.85zM235.4 337.7h0.85v0.85h-0.85zM274.2 335.1h0.85v0.85h-0.85zM127.8 334.2h0.85v0.85h-0.85zM172.7 327.9h0.85v0.85h-0.85zM22.7 333.5h0.85v0.85h-0.85zM414.4 338.4h0.85v0.85h-0.85zM20.8 337.5h0.85v0.85h-0.85zM343.5 337.5h0.85v0.85h-0.85zM392.0 333.4h0.85v0.85h-0.85zM227.2 331.1h0.85v0.85h-0.85zM64.6 335.7h0.85v0.85h-0.85zM281.6 330.0h0.85v0.85h-0.85zM222.2 334.7h0.85v0.85h-0.85zM34.0 333.5h0.85v0.85h-0.85zM242.4 334.3h0.85v0.85h-0.85zM169.0 330.5h0.85v0.85h-0.85zM253.3 327.0h0.85v0.85h-0.85zM289.2 337.9h0.85v0.85h-0.85zM438.8 334.7h0.85v0.85h-0.85zM52.8 333.6h0.85v0.85h-0.85zM331.8 338.3h0.85v0.85h-0.85zM265.6 334.6h0.85v0.85h-0.85zM34.6 334.2h0.85v0.85h-0.85zM276.0 331.8h0.85v0.85h-0.85zM309.9 327.4h0.85v0.85h-0.85zM303.4 332.7h0.85v0.85h-0.85zM84.9 325.9h0.85v0.85h-0.85zM137.4 329.9h0.85v0.85h-0.85zM245.4 338.2h0.85v0.85h-0.85zM270.4 338.2h0.85v0.85h-0.85zM135.5 337.7h0.85v0.85h-0.85zM92.5 336.7h0.85v0.85h-0.85zM194.2 332.8h0.85v0.85h-0.85zM58.3 326.8h0.85v0.85h-0.85zM373.0 337.4h0.85v0.85h-0.85zM217.2 333.9h0.85v0.85h-0.85zM195.8 335.3h0.85v0.85h-0.85zM303.9 333.7h0.85v0.85h-0.85zM272.1 328.2h0.85v0.85h-0.85zM20.3 335.3h0.85v0.85h-0.85zM358.7 335.1h0.85v0.85h-0.85zM394.4 336.5h0.85v0.85h-0.85zM261.5 332.7h0.85v0.85h-0.85zM52.5 327.6h0.85v0.85h-0.85zM372.0 336.2h0.85v0.85h-0.85zM125.5 330.1h0.85v0.85h-0.85zM334.7 334.2h0.85v0.85h-0.85zM224.5 336.5h0.85v0.85h-0.85zM88.0 336.7h0.85v0.85h-0.85zM91.9 336.9h0.85v0.85h-0.85zM97.2 330.7h0.85v0.85h-0.85zM29.6 333.6h0.85v0.85h-0.85zM248.2 338.4h0.85v0.85h-0.85zM236.6 334.2h0.85v0.85h-0.85zM260.9 330.5h0.85v0.85h-0.85zM309.3 336.6h0.85v0.85h-0.85zM65.9 329.8h0.85v0.85h-0.85zM35.3 331.4h0.85v0.85h-0.85zM50.0 334.2h0.85v0.85h-0.85zM28.3 328.0h0.85v0.85h-0.85zM263.3 337.6h0.85v0.85h-0.85zM92.4 334.4h0.85v0.85h-0.85zM305.3 334.7h0.85v0.85h-0.85zM85.1 337.0h0.85v0.85h-0.85zM373.6 336.9h0.85v0.85h-0.85zM260.1 337.1h0.85v0.85h-0.85zM389.3 336.3h0.85v0.85h-0.85zM35.2 332.2h0.85v0.85h-0.85zM395.0 335.1h0.85v0.85h-0.85zM349.6 337.3h0.85v0.85h-0.85zM358.0 331.0h0.85v0.85h-0.85zM427.2 335.0h0.85v0.85h-0.85zM51.1 335.5h0.85v0.85h-0.85zM73.8 328.7h0.85v0.85h-0.85zM84.5 333.7h0.85v0.85h-0.85zM420.8 337.0h0.85v0.85h-0.85zM314.5 335.0h0.85v0.85h-0.85zM437.1 334.8h0.85v0.85h-0.85zM412.5 337.9h0.85v0.85h-0.85zM99.7 336.7h0.85v0.85h-0.85zM253.7 326.0h0.85v0.85h-0.85zM49.7 332.8h0.85v0.85h-0.85zM212.4 332.5h0.85v0.85h-0.85zM384.6 329.8h0.85v0.85h-0.85zM221.5 336.5h0.85v0.85h-0.85zM86.6 335.0h0.85v0.85h-0.85zM120.6 333.8h0.85v0.85h-0.85zM294.1 332.9h0.85v0.85h-0.85zM318.4 337.0h0.85v0.85h-0.85zM340.0 332.5h0.85v0.85h-0.85zM217.7 336.5h0.85v0.85h-0.85zM347.4 337.6h0.85v0.85h-0.85zM30.7 330.8h0.85v0.85h-0.85zM275.9 334.7h0.85v0.85h-0.85zM144.0 334.1h0.85v0.85h-0.85zM380.0 334.9h0.85v0.85h-0.85zM79.8 336.9h0.85v0.85h-0.85zM44.7 332.8h0.85v0.85h-0.85zM106.5 336.0h0.85v0.85h-0.85zM170.3 334.7h0.85v0.85h-0.85zM41.6 337.6h0.85v0.85h-0.85zM32.6 338.0h0.85v0.85h-0.85zM116.8 334.0h0.85v0.85h-0.85zM229.5 334.1h0.85v0.85h-0.85zM348.4 332.8h0.85v0.85h-0.85zM312.0 336.7h0.85v0.85h-0.85zM344.5 327.6h0.85v0.85h-0.85zM160.1 336.7h0.85v0.85h-0.85zM372.9 332.5h0.85v0.85h-0.85zM281.0 332.3h0.85v0.85h-0.85zM101.9 331.7h0.85v0.85h-0.85zM57.6 333.1h0.85v0.85h-0.85zM99.5 331.0h0.85v0.85h-0.85zM235.2 334.8h0.85v0.85h-0.85zM182.2 337.5h0.85v0.85h-0.85zM113.5 337.7h0.85v0.85h-0.85zM405.8 333.2h0.85v0.85h-0.85zM393.5 326.4h0.85v0.85h-0.85zM228.3 335.8h0.85v0.85h-0.85zM260.4 334.1h0.85v0.85h-0.85zM42.1 330.0h0.85v0.85h-0.85zM228.9 335.4h0.85v0.85h-0.85zM322.6 327.2h0.85v0.85h-0.85zM178.6 335.9h0.85v0.85h-0.85zM348.0 333.7h0.85v0.85h-0.85zM81.5 328.4h0.85v0.85h-0.85zM112.4 337.2h0.85v0.85h-0.85zM66.7 336.4h0.85v0.85h-0.85zM325.7 334.5h0.85v0.85h-0.85zM376.9 336.8h0.85v0.85h-0.85zM138.4 335.5h0.85v0.85h-0.85zM229.0 337.0h0.85v0.85h-0.85zM426.6 334.2h0.85v0.85h-0.85zM24.0 329.2h0.85v0.85h-0.85zM279.2 338.0h0.85v0.85h-0.85zM376.4 332.4h0.85v0.85h-0.85zM334.6 330.0h0.85v0.85h-0.85zM308.1 337.2h0.85v0.85h-0.85zM329.7 330.4h0.85v0.85h-0.85zM234.4 326.7h0.85v0.85h-0.85zM129.5 328.2h0.85v0.85h-0.85zM59.4 328.5h0.85v0.85h-0.85zM29.1 332.9h0.85v0.85h-0.85zM386.8 336.3h0.85v0.85h-0.85zM295.7 333.5h0.85v0.85h-0.85zM206.4 333.0h0.85v0.85h-0.85zM397.7 333.0h0.85v0.85h-0.85zM172.1 325.8h0.85v0.85h-0.85zM205.7 334.8h0.85v0.85h-0.85zM116.0 329.7h0.85v0.85h-0.85zM399.6 325.8h0.85v0.85h-0.85zM328.9 333.5h0.85v0.85h-0.85zM40.2 333.0h0.85v0.85h-0.85zM296.7 329.3h0.85v0.85h-0.85zM361.3 335.8h0.85v0.85h-0.85zM370.4 332.7h0.85v0.85h-0.85zM197.5 337.5h0.85v0.85h-0.85zM190.6 336.5h0.85v0.85h-0.85zM62.1 334.7h0.85v0.85h-0.85zM147.7 334.4h0.85v0.85h-0.85zM229.5 333.9h0.85v0.85h-0.85zM302.3 330.9h0.85v0.85h-0.85zM241.5 332.3h0.85v0.85h-0.85zM430.3 334.8h0.85v0.85h-0.85zM229.5 333.3h0.85v0.85h-0.85zM210.7 332.9h0.85v0.85h-0.85zM275.4 332.4h0.85v0.85h-0.85zM122.3 337.3h0.85v0.85h-0.85zM235.9 332.1h0.85v0.85h-0.85zM110.9 332.9h0.85v0.85h-0.85zM98.0 337.9h0.85v0.85h-0.85zM252.7 330.2h0.85v0.85h-0.85zM31.2 335.8h0.85v0.85h-0.85zM294.2 333.2h0.85v0.85h-0.85zM28.1 327.3h0.85v0.85h-0.85zM315.5 335.6h0.85v0.85h-0.85zM294.4 328.8h0.85v0.85h-0.85zM172.6 337.4h0.85v0.85h-0.85zM185.6 337.4h0.85v0.85h-0.85zM60.7 336.6h0.85v0.85h-0.85zM171.9 332.9h0.85v0.85h-0.85zM44.2 336.7h0.85v0.85h-0.85zM537.8 338.1h0.85v0.85h-0.85zM392.4 332.0h0.85v0.85h-0.85zM171.0 337.9h0.85v0.85h-0.85zM151.0 330.0h0.85v0.85h-0.85zM42.7 332.8h0.85v0.85h-0.85zM386.5 330.6h0.85v0.85h-0.85zM405.3 336.7h0.85v0.85h-0.85zM381.9 337.0h0.85v0.85h-0.85zM387.9 338.2h0.85v0.85h-0.85zM197.9 332.3h0.85v0.85h-0.85zM324.5 331.9h0.85v0.85h-0.85zM130.2 333.1h0.85v0.85h-0.85zM45.1 336.3h0.85v0.85h-0.85zM218.4 334.9h0.85v0.85h-0.85zM26.2 327.4h0.85v0.85h-0.85zM288.5 337.1h0.85v0.85h-0.85zM194.2 331.0h0.85v0.85h-0.85z" fill="#4cb044" fill-opacity="0.45"/>
<path d="M360.0 339.1h0.9v0.9h-0.9zM115.2 339.3h0.9v0.9h-0.9zM83.2 339.2h0.9v0.9h-0.9zM130.8 339.5h0.9v0.9h-0.9zM248.4 339.2h0.9v0.9h-0.9zM70.0 339.3h0.9v0.9h-0.9zM267.2 339.2h0.9v0.9h-0.9zM413.5 339.4h0.9v0.9h-0.9zM33.6 339.3h0.9v0.9h-0.9zM268.4 339.2h0.9v0.9h-0.9zM353.8 339.2h0.9v0.9h-0.9zM51.2 339.4h0.9v0.9h-0.9zM276.6 339.2h0.9v0.9h-0.9zM72.2 339.3h0.9v0.9h-0.9zM269.3 339.4h0.9v0.9h-0.9zM336.5 339.2h0.9v0.9h-0.9zM265.1 339.5h0.9v0.9h-0.9zM384.0 339.2h0.9v0.9h-0.9zM131.0 339.3h0.9v0.9h-0.9zM161.9 339.2h0.9v0.9h-0.9zM317.6 339.3h0.9v0.9h-0.9zM156.4 339.5h0.9v0.9h-0.9zM199.1 339.5h0.9v0.9h-0.9zM383.9 339.3h0.9v0.9h-0.9zM235.9 339.4h0.9v0.9h-0.9zM221.2 339.1h0.9v0.9h-0.9zM85.3 339.4h0.9v0.9h-0.9zM462.7 339.5h0.9v0.9h-0.9zM329.1 339.3h0.9v0.9h-0.9zM494.8 339.3h0.9v0.9h-0.9zM323.1 339.3h0.9v0.9h-0.9zM68.9 339.3h0.9v0.9h-0.9zM306.8 339.2h0.9v0.9h-0.9zM497.4 339.3h0.9v0.9h-0.9zM49.2 339.4h0.9v0.9h-0.9zM375.7 339.4h0.9v0.9h-0.9zM283.0 339.4h0.9v0.9h-0.9zM127.2 339.5h0.9v0.9h-0.9zM83.6 339.6h0.9v0.9h-0.9zM390.0 339.2h0.9v0.9h-0.9zM255.1 339.3h0.9v0.9h-0.9zM164.6 339.2h0.9v0.9h-0.9zM125.1 339.3h0.9v0.9h-0.9zM319.3 339.3h0.9v0.9h-0.9zM195.7 339.2h0.9v0.9h-0.9zM374.4 339.3h0.9v0.9h-0.9zM127.5 339.4h0.9v0.9h-0.9zM22.8 339.4h0.9v0.9h-0.9zM192.2 339.4h0.9v0.9h-0.9zM177.7 339.3h0.9v0.9h-0.9zM134.6 339.3h0.9v0.9h-0.9zM86.6 339.4h0.9v0.9h-0.9zM124.4 339.4h0.9v0.9h-0.9zM318.3 339.2h0.9v0.9h-0.9zM426.1 339.2h0.9v0.9h-0.9zM343.5 339.3h0.9v0.9h-0.9zM415.0 339.4h0.9v0.9h-0.9zM347.4 339.5h0.9v0.9h-0.9zM332.3 339.2h0.9v0.9h-0.9zM326.5 339.6h0.9v0.9h-0.9zM115.3 339.1h0.9v0.9h-0.9zM432.3 339.5h0.9v0.9h-0.9zM376.4 339.5h0.9v0.9h-0.9zM33.6 339.2h0.9v0.9h-0.9zM327.3 339.2h0.9v0.9h-0.9zM433.9 339.2h0.9v0.9h-0.9zM336.6 339.3h0.9v0.9h-0.9zM110.5 339.3h0.9v0.9h-0.9zM236.8 339.4h0.9v0.9h-0.9zM268.5 339.2h0.9v0.9h-0.9zM33.3 339.5h0.9v0.9h-0.9zM490.9 339.4h0.9v0.9h-0.9zM24.5 339.4h0.9v0.9h-0.9zM128.8 339.5h0.9v0.9h-0.9zM167.0 339.3h0.9v0.9h-0.9zM30.1 339.3h0.9v0.9h-0.9zM301.7 339.2h0.9v0.9h-0.9zM408.3 339.3h0.9v0.9h-0.9zM22.3 339.3h0.9v0.9h-0.9zM159.7 339.5h0.9v0.9h-0.9zM431.9 339.3h0.9v0.9h-0.9zM220.2 339.5h0.9v0.9h-0.9zM369.5 339.5h0.9v0.9h-0.9zM307.6 339.4h0.9v0.9h-0.9zM130.3 339.3h0.9v0.9h-0.9zM180.2 339.4h0.9v0.9h-0.9zM232.9 339.4h0.9v0.9h-0.9zM67.5 339.5h0.9v0.9h-0.9zM31.4 339.4h0.9v0.9h-0.9zM128.4 339.5h0.9v0.9h-0.9zM62.2 339.6h0.9v0.9h-0.9zM397.2 339.5h0.9v0.9h-0.9zM340.2 339.3h0.9v0.9h-0.9zM135.8 339.2h0.9v0.9h-0.9zM303.3 339.3h0.9v0.9h-0.9zM24.5 339.3h0.9v0.9h-0.9zM113.2 339.3h0.9v0.9h-0.9zM269.7 339.2h0.9v0.9h-0.9zM505.7 339.4h0.9v0.9h-0.9zM219.3 339.3h0.9v0.9h-0.9zM56.4 339.5h0.9v0.9h-0.9zM198.0 339.4h0.9v0.9h-0.9zM154.6 339.3h0.9v0.9h-0.9zM222.8 339.2h0.9v0.9h-0.9zM222.4 339.4h0.9v0.9h-0.9zM25.3 339.5h0.9v0.9h-0.9zM434.7 339.6h0.9v0.9h-0.9zM130.9 339.1h0.9v0.9h-0.9zM399.7 339.2h0.9v0.9h-0.9zM112.0 339.3h0.9v0.9h-0.9zM298.9 339.6h0.9v0.9h-0.9zM59.5 339.3h0.9v0.9h-0.9zM232.8 339.3h0.9v0.9h-0.9zM211.5 339.2h0.9v0.9h-0.9zM116.3 339.4h0.9v0.9h-0.9zM370.4 339.3h0.9v0.9h-0.9zM362.7 339.4h0.9v0.9h-0.9zM50.4 339.3h0.9v0.9h-0.9zM302.2 339.2h0.9v0.9h-0.9zM222.6 339.3h0.9v0.9h-0.9zM210.5 339.2h0.9v0.9h-0.9zM43.4 339.2h0.9v0.9h-0.9zM324.1 339.4h0.9v0.9h-0.9zM190.4 339.5h0.9v0.9h-0.9zM271.1 339.2h0.9v0.9h-0.9zM136.2 339.1h0.9v0.9h-0.9zM249.5 339.5h0.9v0.9h-0.9zM53.3 339.5h0.9v0.9h-0.9zM187.0 339.5h0.9v0.9h-0.9zM413.2 339.5h0.9v0.9h-0.9zM288.9 339.5h0.9v0.9h-0.9zM421.7 339.3h0.9v0.9h-0.9zM134.7 339.5h0.9v0.9h-0.9zM29.6 339.2h0.9v0.9h-0.9zM426.6 339.2h0.9v0.9h-0.9zM513.4 339.3h0.9v0.9h-0.9zM480.4 339.5h0.9v0.9h-0.9zM197.0 339.5h0.9v0.9h-0.9zM100.5 339.3h0.9v0.9h-0.9zM204.4 339.3h0.9v0.9h-0.9zM113.5 339.4h0.9v0.9h-0.9zM203.6 339.2h0.9v0.9h-0.9zM228.4 339.5h0.9v0.9h-0.9zM173.2 339.4h0.9v0.9h-0.9zM91.6 339.3h0.9v0.9h-0.9zM536.2 339.4h0.9v0.9h-0.9zM234.8 339.6h0.9v0.9h-0.9zM58.9 339.5h0.9v0.9h-0.9zM304.0 339.4h0.9v0.9h-0.9zM430.4 339.5h0.9v0.9h-0.9zM362.5 339.3h0.9v0.9h-0.9zM282.9 339.5h0.9v0.9h-0.9zM187.8 339.3h0.9v0.9h-0.9zM445.1 339.3h0.9v0.9h-0.9zM92.0 339.3h0.9v0.9h-0.9zM114.5 339.2h0.9v0.9h-0.9zM221.2 339.3h0.9v0.9h-0.9zM97.0 339.5h0.9v0.9h-0.9zM114.2 339.6h0.9v0.9h-0.9zM298.8 339.6h0.9v0.9h-0.9zM76.0 339.5h0.9v0.9h-0.9zM125.8 339.3h0.9v0.9h-0.9zM29.7 339.3h0.9v0.9h-0.9zM221.5 339.6h0.9v0.9h-0.9zM94.3 339.2h0.9v0.9h-0.9zM272.7 339.2h0.9v0.9h-0.9zM388.9 339.5h0.9v0.9h-0.9zM321.0 339.5h0.9v0.9h-0.9zM483.1 339.3h0.9v0.9h-0.9zM522.3 339.2h0.9v0.9h-0.9zM50.6 339.4h0.9v0.9h-0.9zM340.2 339.2h0.9v0.9h-0.9zM216.0 339.2h0.9v0.9h-0.9zM407.4 339.2h0.9v0.9h-0.9zM322.9 339.3h0.9v0.9h-0.9zM219.3 339.3h0.9v0.9h-0.9zM61.4 339.1h0.9v0.9h-0.9zM279.5 339.3h0.9v0.9h-0.9zM106.9 339.2h0.9v0.9h-0.9zM337.0 339.4h0.9v0.9h-0.9zM166.2 339.4h0.9v0.9h-0.9zM125.5 339.2h0.9v0.9h-0.9zM36.1 339.3h0.9v0.9h-0.9zM84.6 339.6h0.9v0.9h-0.9zM53.2 339.4h0.9v0.9h-0.9zM366.3 339.4h0.9v0.9h-0.9zM262.7 339.4h0.9v0.9h-0.9zM206.3 339.4h0.9v0.9h-0.9zM258.7 339.2h0.9v0.9h-0.9zM276.3 339.4h0.9v0.9h-0.9zM326.8 339.2h0.9v0.9h-0.9zM311.7 339.6h0.9v0.9h-0.9zM260.3 339.4h0.9v0.9h-0.9zM219.2 339.4h0.9v0.9h-0.9zM109.5 339.2h0.9v0.9h-0.9zM210.7 339.4h0.9v0.9h-0.9zM400.6 339.3h0.9v0.9h-0.9zM254.2 339.2h0.9v0.9h-0.9zM270.7 339.5h0.9v0.9h-0.9zM224.3 339.4h0.9v0.9h-0.9zM349.1 339.4h0.9v0.9h-0.9zM197.0 339.2h0.9v0.9h-0.9zM360.6 339.2h0.9v0.9h-0.9zM216.4 339.5h0.9v0.9h-0.9zM375.3 339.2h0.9v0.9h-0.9zM195.0 339.2h0.9v0.9h-0.9zM279.7 339.2h0.9v0.9h-0.9zM414.7 339.5h0.9v0.9h-0.9zM209.9 339.4h0.9v0.9h-0.9zM266.7 339.3h0.9v0.9h-0.9zM335.3 339.4h0.9v0.9h-0.9zM230.9 339.4h0.9v0.9h-0.9zM197.1 339.2h0.9v0.9h-0.9zM21.8 339.3h0.9v0.9h-0.9zM205.6 339.4h0.9v0.9h-0.9zM281.2 339.1h0.9v0.9h-0.9zM25.8 339.5h0.9v0.9h-0.9zM275.7 339.2h0.9v0.9h-0.9zM301.4 339.4h0.9v0.9h-0.9zM365.4 339.5h0.9v0.9h-0.9zM430.5 339.6h0.9v0.9h-0.9zM25.5 339.5h0.9v0.9h-0.9zM450.7 339.2h0.9v0.9h-0.9zM431.1 339.4h0.9v0.9h-0.9zM287.8 339.3h0.9v0.9h-0.9zM320.6 339.4h0.9v0.9h-0.9zM134.9 339.5h0.9v0.9h-0.9zM279.6 339.4h0.9v0.9h-0.9zM305.4 339.2h0.9v0.9h-0.9zM110.3 339.3h0.9v0.9h-0.9zM253.1 339.2h0.9v0.9h-0.9zM168.0 339.2h0.9v0.9h-0.9zM311.0 339.5h0.9v0.9h-0.9zM128.0 339.3h0.9v0.9h-0.9zM43.4 339.2h0.9v0.9h-0.9zM43.7 339.5h0.9v0.9h-0.9zM474.9 339.4h0.9v0.9h-0.9zM371.5 339.3h0.9v0.9h-0.9zM217.9 339.4h0.9v0.9h-0.9zM205.2 339.2h0.9v0.9h-0.9zM399.0 339.1h0.9v0.9h-0.9zM62.8 339.3h0.9v0.9h-0.9zM393.1 339.5h0.9v0.9h-0.9zM198.3 339.3h0.9v0.9h-0.9zM319.7 339.4h0.9v0.9h-0.9zM273.8 339.2h0.9v0.9h-0.9zM128.1 339.3h0.9v0.9h-0.9zM92.7 339.5h0.9v0.9h-0.9zM484.8 339.3h0.9v0.9h-0.9zM26.7 339.6h0.9v0.9h-0.9zM378.0 339.5h0.9v0.9h-0.9zM291.5 339.4h0.9v0.9h-0.9zM313.7 339.4h0.9v0.9h-0.9zM423.7 339.3h0.9v0.9h-0.9zM138.5 339.5h0.9v0.9h-0.9zM178.8 339.2h0.9v0.9h-0.9zM290.2 339.3h0.9v0.9h-0.9zM73.8 339.3h0.9v0.9h-0.9zM388.0 339.5h0.9v0.9h-0.9zM237.5 339.3h0.9v0.9h-0.9zM191.8 339.5h0.9v0.9h-0.9zM96.3 339.4h0.9v0.9h-0.9zM324.4 339.3h0.9v0.9h-0.9zM20.4 339.5h0.9v0.9h-0.9zM398.9 339.3h0.9v0.9h-0.9zM132.5 339.2h0.9v0.9h-0.9zM321.1 339.2h0.9v0.9h-0.9zM244.9 339.4h0.9v0.9h-0.9zM179.7 339.5h0.9v0.9h-0.9zM266.8 339.2h0.9v0.9h-0.9zM231.6 339.4h0.9v0.9h-0.9zM417.4 339.2h0.9v0.9h-0.9zM122.6 339.2h0.9v0.9h-0.9zM92.5 339.4h0.9v0.9h-0.9zM77.7 339.4h0.9v0.9h-0.9zM108.8 339.4h0.9v0.9h-0.9zM281.1 339.2h0.9v0.9h-0.9zM210.0 339.5h0.9v0.9h-0.9zM187.9 339.4h0.9v0.9h-0.9zM230.6 339.4h0.9v0.9h-0.9zM359.6 339.4h0.9v0.9h-0.9zM402.4 339.6h0.9v0.9h-0.9zM160.0 339.4h0.9v0.9h-0.9zM126.3 339.6h0.9v0.9h-0.9zM47.0 339.3h0.9v0.9h-0.9zM59.0 339.4h0.9v0.9h-0.9zM88.8 339.5h0.9v0.9h-0.9zM98.6 339.5h0.9v0.9h-0.9zM383.2 339.4h0.9v0.9h-0.9zM350.6 339.5h0.9v0.9h-0.9zM212.2 339.2h0.9v0.9h-0.9zM337.8 339.3h0.9v0.9h-0.9zM224.1 339.4h0.9v0.9h-0.9zM71.6 339.2h0.9v0.9h-0.9zM175.2 339.2h0.9v0.9h-0.9zM393.5 339.2h0.9v0.9h-0.9zM105.3 339.2h0.9v0.9h-0.9zM119.3 339.5h0.9v0.9h-0.9zM282.1 339.4h0.9v0.9h-0.9zM57.2 339.3h0.9v0.9h-0.9zM45.1 339.2h0.9v0.9h-0.9zM392.7 339.3h0.9v0.9h-0.9zM192.6 339.6h0.9v0.9h-0.9zM138.2 339.4h0.9v0.9h-0.9zM199.1 339.2h0.9v0.9h-0.9zM187.7 339.5h0.9v0.9h-0.9zM352.4 339.4h0.9v0.9h-0.9zM100.1 339.2h0.9v0.9h-0.9zM225.8 339.4h0.9v0.9h-0.9zM64.9 339.3h0.9v0.9h-0.9zM200.7 339.3h0.9v0.9h-0.9zM175.6 339.5h0.9v0.9h-0.9zM422.0 339.2h0.9v0.9h-0.9zM25.7 339.1h0.9v0.9h-0.9zM117.5 339.2h0.9v0.9h-0.9zM453.5 339.6h0.9v0.9h-0.9zM254.4 339.6h0.9v0.9h-0.9zM252.4 339.2h0.9v0.9h-0.9zM125.1 339.2h0.9v0.9h-0.9zM63.3 339.4h0.9v0.9h-0.9zM97.0 339.4h0.9v0.9h-0.9zM295.7 339.4h0.9v0.9h-0.9zM314.1 339.6h0.9v0.9h-0.9zM62.3 339.2h0.9v0.9h-0.9zM487.7 339.4h0.9v0.9h-0.9zM114.6 339.3h0.9v0.9h-0.9zM172.3 339.4h0.9v0.9h-0.9zM32.2 339.5h0.9v0.9h-0.9zM418.9 339.4h0.9v0.9h-0.9zM394.9 339.6h0.9v0.9h-0.9zM287.2 339.3h0.9v0.9h-0.9zM316.0 339.3h0.9v0.9h-0.9zM52.1 339.3h0.9v0.9h-0.9zM336.3 339.3h0.9v0.9h-0.9zM290.4 339.2h0.9v0.9h-0.9zM247.8 339.4h0.9v0.9h-0.9zM326.8 339.4h0.9v0.9h-0.9zM133.7 339.5h0.9v0.9h-0.9zM218.6 339.5h0.9v0.9h-0.9zM47.4 339.4h0.9v0.9h-0.9zM264.9 339.5h0.9v0.9h-0.9zM27.1 339.5h0.9v0.9h-0.9zM240.4 339.2h0.9v0.9h-0.9zM395.7 339.4h0.9v0.9h-0.9zM291.3 339.4h0.9v0.9h-0.9zM213.3 339.4h0.9v0.9h-0.9zM398.4 339.5h0.9v0.9h-0.9zM279.2 339.1h0.9v0.9h-0.9zM257.6 339.2h0.9v0.9h-0.9zM313.0 339.5h0.9v0.9h-0.9zM114.9 339.2h0.9v0.9h-0.9zM63.3 339.3h0.9v0.9h-0.9zM94.4 339.3h0.9v0.9h-0.9zM359.7 339.2h0.9v0.9h-0.9zM422.8 339.2h0.9v0.9h-0.9zM287.0 339.2h0.9v0.9h-0.9zM378.0 339.2h0.9v0.9h-0.9zM356.3 339.3h0.9v0.9h-0.9zM151.3 339.4h0.9v0.9h-0.9zM344.2 339.4h0.9v0.9h-0.9zM325.2 339.4h0.9v0.9h-0.9zM220.3 339.2h0.9v0.9h-0.9zM250.0 339.3h0.9v0.9h-0.9zM372.0 339.2h0.9v0.9h-0.9zM172.1 339.2h0.9v0.9h-0.9zM231.1 339.6h0.9v0.9h-0.9zM177.4 339.2h0.9v0.9h-0.9zM143.6 339.3h0.9v0.9h-0.9zM318.7 339.3h0.9v0.9h-0.9zM200.3 339.2h0.9v0.9h-0.9zM383.9 339.5h0.9v0.9h-0.9zM441.4 339.2h0.9v0.9h-0.9zM83.1 339.1h0.9v0.9h-0.9zM73.7 339.2h0.9v0.9h-0.9zM329.6 339.3h0.9v0.9h-0.9zM465.6 339.4h0.9v0.9h-0.9zM253.7 339.5h0.9v0.9h-0.9zM105.6 339.5h0.9v0.9h-0.9zM313.9 339.5h0.9v0.9h-0.9zM273.9 339.4h0.9v0.9h-0.9zM133.7 339.2h0.9v0.9h-0.9zM523.3 339.3h0.9v0.9h-0.9zM400.4 339.2h0.9v0.9h-0.9zM204.2 339.5h0.9v0.9h-0.9zM162.1 339.2h0.9v0.9h-0.9zM210.1 339.4h0.9v0.9h-0.9zM277.5 339.2h0.9v0.9h-0.9zM136.1 339.6h0.9v0.9h-0.9zM261.3 339.2h0.9v0.9h-0.9zM343.6 339.4h0.9v0.9h-0.9zM88.6 339.4h0.9v0.9h-0.9zM361.1 339.4h0.9v0.9h-0.9zM140.6 339.4h0.9v0.9h-0.9zM415.0 339.6h0.9v0.9h-0.9zM435.8 339.6h0.9v0.9h-0.9zM260.7 339.2h0.9v0.9h-0.9zM95.3 339.5h0.9v0.9h-0.9zM165.8 339.3h0.9v0.9h-0.9zM369.9 339.4h0.9v0.9h-0.9zM415.1 339.4h0.9v0.9h-0.9zM152.2 339.3h0.9v0.9h-0.9zM427.0 339.4h0.9v0.9h-0.9zM281.1 339.5h0.9v0.9h-0.9zM139.7 339.1h0.9v0.9h-0.9zM300.2 339.5h0.9v0.9h-0.9zM307.7 339.5h0.9v0.9h-0.9zM151.0 339.2h0.9v0.9h-0.9zM229.6 339.5h0.9v0.9h-0.9zM183.6 339.3h0.9v0.9h-0.9zM191.4 339.3h0.9v0.9h-0.9zM367.4 339.4h0.9v0.9h-0.9zM181.0 339.3h0.9v0.9h-0.9zM355.0 339.5h0.9v0.9h-0.9zM528.2 339.2h0.9v0.9h-0.9zM210.4 339.4h0.9v0.9h-0.9zM190.9 339.2h0.9v0.9h-0.9zM28.1 339.4h0.9v0.9h-0.9zM102.9 339.2h0.9v0.9h-0.9zM499.5 339.5h0.9v0.9h-0.9zM157.3 339.2h0.9v0.9h-0.9zM133.1 339.5h0.9v0.9h-0.9zM61.5 339.4h0.9v0.9h-0.9zM195.5 339.5h0.9v0.9h-0.9zM407.0 339.3h0.9v0.9h-0.9zM131.2 339.2h0.9v0.9h-0.9zM141.3 339.5h0.9v0.9h-0.9zM109.7 339.3h0.9v0.9h-0.9zM310.5 339.4h0.9v0.9h-0.9zM254.0 339.5h0.9v0.9h-0.9zM125.3 339.3h0.9v0.9h-0.9zM140.1 339.3h0.9v0.9h-0.9zM160.6 339.3h0.9v0.9h-0.9zM251.2 339.3h0.9v0.9h-0.9zM202.4 339.5h0.9v0.9h-0.9zM396.6 339.2h0.9v0.9h-0.9zM160.6 339.3h0.9v0.9h-0.9zM248.9 339.5h0.9v0.9h-0.9zM420.0 339.2h0.9v0.9h-0.9zM420.2 339.4h0.9v0.9h-0.9zM374.9 339.4h0.9v0.9h-0.9zM128.7 339.2h0.9v0.9h-0.9zM193.2 339.3h0.9v0.9h-0.9zM35.6 339.6h0.9v0.9h-0.9zM418.7 339.1h0.9v0.9h-0.9zM392.6 339.3h0.9v0.9h-0.9zM312.3 339.5h0.9v0.9h-0.9zM342.8 339.2h0.9v0.9h-0.9zM324.3 339.2h0.9v0.9h-0.9zM153.9 339.2h0.9v0.9h-0.9zM284.8 339.4h0.9v0.9h-0.9z" fill="#b8c8b8" fill-opacity="0.4"/>
<text x="18.50" y="57.90" font-size="4.6" text-anchor="end" fill="#1a1a1a" font-weight="normal" stroke="#1a1a1a" stroke-width="0.08">200.0</text>
<text x="18.50" y="86.30" font-size="4.6" text-anchor="end" fill="#1a1a1a" font-weight="normal" stroke="#1a1a1a" stroke-width="0.08">180.0</text>
<text x="18.50" y="114.70" font-size="4.6" text-anchor="end" fill="#1a1a1a" font-weight="normal" stroke="#1a1a1a" stroke-width="0.08">160.0</text>
<text x="18.50" y="143.10" font-size="4.6" text-anchor="end" fill="#1a1a1a" font-weight="normal" stroke="#1a1a1a" stroke-width="0.08">140.0</text>
<text x="18.50" y="171.50" font-size="4.6" text-anchor="end" fill="#1a1a1a" font-weight="normal" stroke="#1a1a1a" stroke-width="0.08">120.0</text>
<text x="18.50" y="199.90" font-size="4.6" text-anchor="end" fill="#1a1a1a" font-weight="normal" stroke="#1a1a1a" stroke-width="0.08">100.0</text>
<text x="18.50" y="228.30" font-size="4.6" text-anchor="end" fill="#1a1a1a" font-weight="normal" stroke="#1a1a1a" stroke-width="0.08">80.0</text>
<text x="18.50" y="256.70" font-size="4.6" text-anchor="end" fill="#1a1a1a" font-weight="normal" stroke="#1a1a1a" stroke-width="0.08">60.0</text>
<text x="18.50" y="285.10" font-size="4.6" text-anchor="end" fill="#1a1a1a" font-weight="normal" stroke="#1a1a1a" stroke-width="0.08">40.0</text>
<text x="18.50" y="313.50" font-size="4.6" text-anchor="end" fill="#1a1a1a" font-weight="normal" stroke="#1a1a1a" stroke-width="0.08">20.0</text>
<text x="20.30" y="54.80" font-size="3.6" textLength="4.90" lengthAdjust="spacingAndGlyphs" fill="#555" font-weight="normal" stroke="#555" stroke-width="0.14">ms</text>
<line x1="17.6" y1="70.50" x2="19.2" y2="70.50" stroke="#888" stroke-width="0.7"/>
<line x1="17.6" y1="98.90" x2="19.2" y2="98.90" stroke="#888" stroke-width="0.7"/>
<line x1="17.6" y1="127.30" x2="19.2" y2="127.30" stroke="#888" stroke-width="0.7"/>
<line x1="17.6" y1="155.70" x2="19.2" y2="155.70" stroke="#888" stroke-width="0.7"/>
<line x1="17.6" y1="184.10" x2="19.2" y2="184.10" stroke="#888" stroke-width="0.7"/>
<line x1="17.6" y1="212.50" x2="19.2" y2="212.50" stroke="#888" stroke-width="0.7"/>
<line x1="17.6" y1="240.90" x2="19.2" y2="240.90" stroke="#888" stroke-width="0.7"/>
<line x1="17.6" y1="269.30" x2="19.2" y2="269.30" stroke="#888" stroke-width="0.7"/>
<line x1="17.6" y1="297.70" x2="19.2" y2="297.70" stroke="#888" stroke-width="0.7"/>
<line x1="17.6" y1="326.10" x2="19.2" y2="326.10" stroke="#888" stroke-width="0.7"/>
<text x="19.60" y="346.20" font-size="4.5" text-anchor="middle" fill="#333" font-weight="normal">0</text>
<text x="72.00" y="346.20" font-size="4.5" text-anchor="middle" fill="#333" font-weight="normal">1600</text>
<text x="124.10" y="346.20" font-size="4.5" text-anchor="middle" fill="#333" font-weight="normal">3200</text>
<text x="176.20" y="346.20" font-size="4.5" text-anchor="middle" fill="#333" font-weight="normal">4800</text>
<text x="228.30" y="346.20" font-size="4.5" text-anchor="middle" fill="#333" font-weight="normal">6400</text>
<text x="280.40" y="346.20" font-size="4.5" text-anchor="middle" fill="#333" font-weight="normal">8000</text>
<text x="332.50" y="346.20" font-size="4.5" text-anchor="middle" fill="#333" font-weight="normal">9600</text>
<text x="384.60" y="346.20" font-size="4.5" text-anchor="middle" fill="#333" font-weight="normal">11200</text>
<text x="436.70" y="346.20" font-size="4.5" text-anchor="middle" fill="#333" font-weight="normal">12800</text>
<text x="488.80" y="346.20" font-size="4.5" text-anchor="middle" fill="#333" font-weight="normal">14400</text>
<text x="531.80" y="346.20" font-size="4.5" text-anchor="start" fill="#333" font-weight="normal">16000gB</text>
<rect x="555.1" y="55.1" width="30.3" height="8.5" fill="#e1e1e1" stroke="#2f6ca6" stroke-width="0.8" />
<text x="570.20" y="61.50" font-size="4.8" text-anchor="middle" fill="#1a1a1a" font-weight="normal">Start</text>
<line x1="551" y1="67.9" x2="593" y2="67.9" stroke="#dadada" stroke-width="0.8"/>
<circle cx="555.5" cy="72.9" r="2.15" fill="#fff" stroke="#333" stroke-width="0.5"/>
<text x="560.20" y="74.85" font-size="4.6" textLength="14.60" lengthAdjust="spacingAndGlyphs" fill="#1a1a1a" font-weight="normal" stroke="#1a1a1a" stroke-width="0.14">Чтение</text>
<circle cx="555.5" cy="79.5" r="2.15" fill="#fff" stroke="#333" stroke-width="0.5"/><circle cx="555.5" cy="79.5" r="1.1" fill="#1a1a1a"/>
<text x="560.20" y="81.75" font-size="4.6" textLength="14.30" lengthAdjust="spacingAndGlyphs" fill="#1a1a1a" font-weight="normal" stroke="#1a1a1a" stroke-width="0.14">Запись</text>
<line x1="551" y1="84.4" x2="593" y2="84.4" stroke="#dadada" stroke-width="0.8"/>
<rect x="553.5" y="87.4" width="4.8" height="4.9" fill="#fff" stroke="#333" stroke-width="0.5" />
<text x="560.20" y="91.90" font-size="4.6" textLength="28.80" lengthAdjust="spacingAndGlyphs" fill="#1a1a1a" font-weight="normal" stroke="#1a1a1a" stroke-width="0.14">Короткий шаг</text>
<rect x="553.5" y="95" width="25" height="8.6" fill="#fff" stroke="#cfcfcf" stroke-width="0.6" />
<line x1="572.2" y1="95.3" x2="572.2" y2="103.3" stroke="#dedede" stroke-width="0.6"/>
<path d="M574.4 98.4 L575.3 97.1 L576.2 98.4z M574.4 100.3 L575.3 101.6 L576.2 100.3z" fill="#555"/>
<text x="555.00" y="101.20" font-size="4.6" text-anchor="start" fill="#9a9a9a" font-weight="normal">40</text>
<text x="583.20" y="101.80" font-size="4.6" text-anchor="start" fill="#1a1a1a" font-weight="normal">gB</text>
<line x1="551" y1="107.8" x2="593" y2="107.8" stroke="#dadada" stroke-width="0.8"/>
<rect x="553.5" y="112.4" width="4.8" height="4.9" fill="#fff" stroke="#333" stroke-width="0.5" />
<path d="M554.4 114.8 L555.7 116.2 L557.7 113.3" fill="none" stroke="#222" stroke-width="0.5"/>
<text x="560.20" y="116.80" font-size="4.6" textLength="32.80" lengthAdjust="spacingAndGlyphs" fill="#1a1a1a" font-weight="normal" stroke="#1a1a1a" stroke-width="0.14">4 KB выравнив.</text>
<line x1="15" y1="356.9" x2="234" y2="356.9" stroke="#a8a8a8" stroke-width="1.3"/>
<line x1="53" y1="350.5" x2="53" y2="393.8" stroke="#9a9a9a" stroke-width="0.9"/>
<line x1="98.8" y1="350.5" x2="98.8" y2="393.8" stroke="#9a9a9a" stroke-width="0.9"/>
<line x1="146.4" y1="350.5" x2="146.4" y2="393.8" stroke="#9a9a9a" stroke-width="0.9"/>
<line x1="192.4" y1="350.5" x2="192.4" y2="393.8" stroke="#9a9a9a" stroke-width="0.9"/>
<text x="22.80" y="355.20" font-size="4.7" textLength="19.10" lengthAdjust="spacingAndGlyphs" fill="#1a1a1a" font-weight="normal" stroke="#1a1a1a" stroke-width="0.22">Размер</text>
<text x="58.90" y="355.20" font-size="4.7" textLength="34.70" lengthAdjust="spacingAndGlyphs" fill="#1a1a1a" font-weight="normal" stroke="#1a1a1a" stroke-width="0.22">Операций/сек</text>
<text x="107.00" y="355.20" font-size="4.7" textLength="29.00" lengthAdjust="spacingAndGlyphs" fill="#1a1a1a" font-weight="normal" stroke="#1a1a1a" stroke-width="0.22">Средн время</text>
<text x="154.00" y="355.20" font-size="4.7" textLength="30.00" lengthAdjust="spacingAndGlyphs" fill="#1a1a1a" font-weight="normal" stroke="#1a1a1a" stroke-width="0.22">Макс время</text>
<text x="194.00" y="355.20" font-size="4.7" textLength="40.00" lengthAdjust="spacingAndGlyphs" fill="#1a1a1a" font-weight="normal" stroke="#1a1a1a" stroke-width="0.22">Средн скорость</text>
<rect x="8.3" y="360.0" width="3.8" height="3.8" fill="#d8d040" stroke="#8a8420" stroke-width="0.7" />
<rect x="15.7" y="359.09999999999997" width="4.8" height="5" fill="#fff" stroke="#8a8a8a" stroke-width="0.5" />
<path d="M16.6 361.5 L17.8 362.9 L19.8 360.1" fill="none" stroke="#222" stroke-width="0.55"/>
<text x="21.80" y="363.20" font-size="5.1" text-anchor="start" fill="#1a1a1a" font-weight="normal" stroke="#1a1a1a" stroke-width="0.1">512 bytes</text>
<text x="91.30" y="363.20" font-size="5.1" text-anchor="end" fill="#111" font-weight="normal" stroke="#111" stroke-width="0.3">183 IOPS</text>
<text x="136.20" y="363.20" font-size="5.1" text-anchor="end" fill="#111" font-weight="normal" stroke="#111" stroke-width="0.3">5.463 ms</text>
<text x="183.30" y="363.20" font-size="5.1" text-anchor="end" fill="#111" font-weight="normal" stroke="#111" stroke-width="0.3">38.180 ms</text>
<text x="227.70" y="363.20" font-size="5.1" text-anchor="end" fill="#111" font-weight="normal" stroke="#111" stroke-width="0.3">0.089 MB/s</text>
<rect x="8.3" y="367.0" width="3.8" height="3.8" fill="#b01010" stroke="#700808" stroke-width="0.7" />
<rect x="15.7" y="366.09999999999997" width="4.8" height="5" fill="#fff" stroke="#8a8a8a" stroke-width="0.5" />
<path d="M16.6 368.5 L17.8 369.9 L19.8 367.1" fill="none" stroke="#222" stroke-width="0.55"/>
<text x="21.80" y="370.20" font-size="5.1" text-anchor="start" fill="#1a1a1a" font-weight="normal" stroke="#1a1a1a" stroke-width="0.1">4 KB</text>
<text x="91.30" y="370.20" font-size="5.1" text-anchor="end" fill="#111" font-weight="normal" stroke="#111" stroke-width="0.3">252 IOPS</text>
<text x="136.20" y="370.20" font-size="5.1" text-anchor="end" fill="#111" font-weight="normal" stroke="#111" stroke-width="0.3">3.953 ms</text>
<text x="183.30" y="370.20" font-size="5.1" text-anchor="end" fill="#111" font-weight="normal" stroke="#111" stroke-width="0.3">63.009 ms</text>
<text x="227.70" y="370.20" font-size="5.1" text-anchor="end" fill="#111" font-weight="normal" stroke="#111" stroke-width="0.3">0.988 MB/s</text>
<rect x="8.3" y="374.0" width="3.8" height="3.8" fill="#20a020" stroke="#106010" stroke-width="0.7" />
<rect x="15.7" y="373.09999999999997" width="4.8" height="5" fill="#fff" stroke="#8a8a8a" stroke-width="0.5" />
<path d="M16.6 375.5 L17.8 376.9 L19.8 374.1" fill="none" stroke="#222" stroke-width="0.55"/>
<text x="21.80" y="377.20" font-size="5.1" text-anchor="start" fill="#1a1a1a" font-weight="normal" stroke="#1a1a1a" stroke-width="0.1">64 KB</text>
<text x="91.30" y="377.20" font-size="5.1" text-anchor="end" fill="#111" font-weight="normal" stroke="#111" stroke-width="0.3">305 IOPS</text>
<text x="136.20" y="377.20" font-size="5.1" text-anchor="end" fill="#111" font-weight="normal" stroke="#111" stroke-width="0.3">3.270 ms</text>
<text x="183.30" y="377.20" font-size="5.1" text-anchor="end" fill="#111" font-weight="normal" stroke="#111" stroke-width="0.3">7.732 ms</text>
<text x="227.70" y="377.20" font-size="5.1" text-anchor="end" fill="#111" font-weight="normal" stroke="#111" stroke-width="0.3">19.110 MB/s</text>
<rect x="8.3" y="381.0" width="3.8" height="3.8" fill="#2050b0" stroke="#103070" stroke-width="0.7" />
<rect x="15.7" y="380.09999999999997" width="4.8" height="5" fill="#fff" stroke="#8a8a8a" stroke-width="0.5" />
<path d="M16.6 382.5 L17.8 383.9 L19.8 381.1" fill="none" stroke="#222" stroke-width="0.55"/>
<text x="21.80" y="384.20" font-size="5.1" text-anchor="start" fill="#1a1a1a" font-weight="normal" stroke="#1a1a1a" stroke-width="0.1">1 MB</text>
<text x="91.30" y="384.20" font-size="5.1" text-anchor="end" fill="#111" font-weight="normal" stroke="#111" stroke-width="0.3">117 IOPS</text>
<text x="136.20" y="384.20" font-size="5.1" text-anchor="end" fill="#111" font-weight="normal" stroke="#111" stroke-width="0.3">8.541 ms</text>
<text x="183.30" y="384.20" font-size="5.1" text-anchor="end" fill="#111" font-weight="normal" stroke="#111" stroke-width="0.3">63.470 ms</text>
<text x="227.70" y="384.20" font-size="5.1" text-anchor="end" fill="#111" font-weight="normal" stroke="#111" stroke-width="0.3">117.076 MB/s</text>
<rect x="8.3" y="388.0" width="3.8" height="3.8" fill="#50b8c0" stroke="#207078" stroke-width="0.7" />
<rect x="15.7" y="387.09999999999997" width="4.8" height="5" fill="#fff" stroke="#8a8a8a" stroke-width="0.5" />
<path d="M16.6 389.5 L17.8 390.9 L19.8 388.1" fill="none" stroke="#222" stroke-width="0.55"/>
<text x="21.80" y="391.20" font-size="5.1" text-anchor="start" fill="#1a1a1a" font-weight="normal" stroke="#1a1a1a" stroke-width="0.1">Случайно</text>
<text x="91.30" y="391.20" font-size="5.1" text-anchor="end" fill="#111" font-weight="normal" stroke="#111" stroke-width="0.3">58 IOPS</text>
<text x="136.20" y="391.20" font-size="5.1" text-anchor="end" fill="#111" font-weight="normal" stroke="#111" stroke-width="0.3">16.985 ms</text>
<text x="183.30" y="391.20" font-size="5.1" text-anchor="end" fill="#111" font-weight="normal" stroke="#111" stroke-width="0.3">169.775 ms</text>
<text x="227.70" y="391.20" font-size="5.1" text-anchor="end" fill="#111" font-weight="normal" stroke="#111" stroke-width="0.3">29.872 MB/s</text>
</svg></body></html>
